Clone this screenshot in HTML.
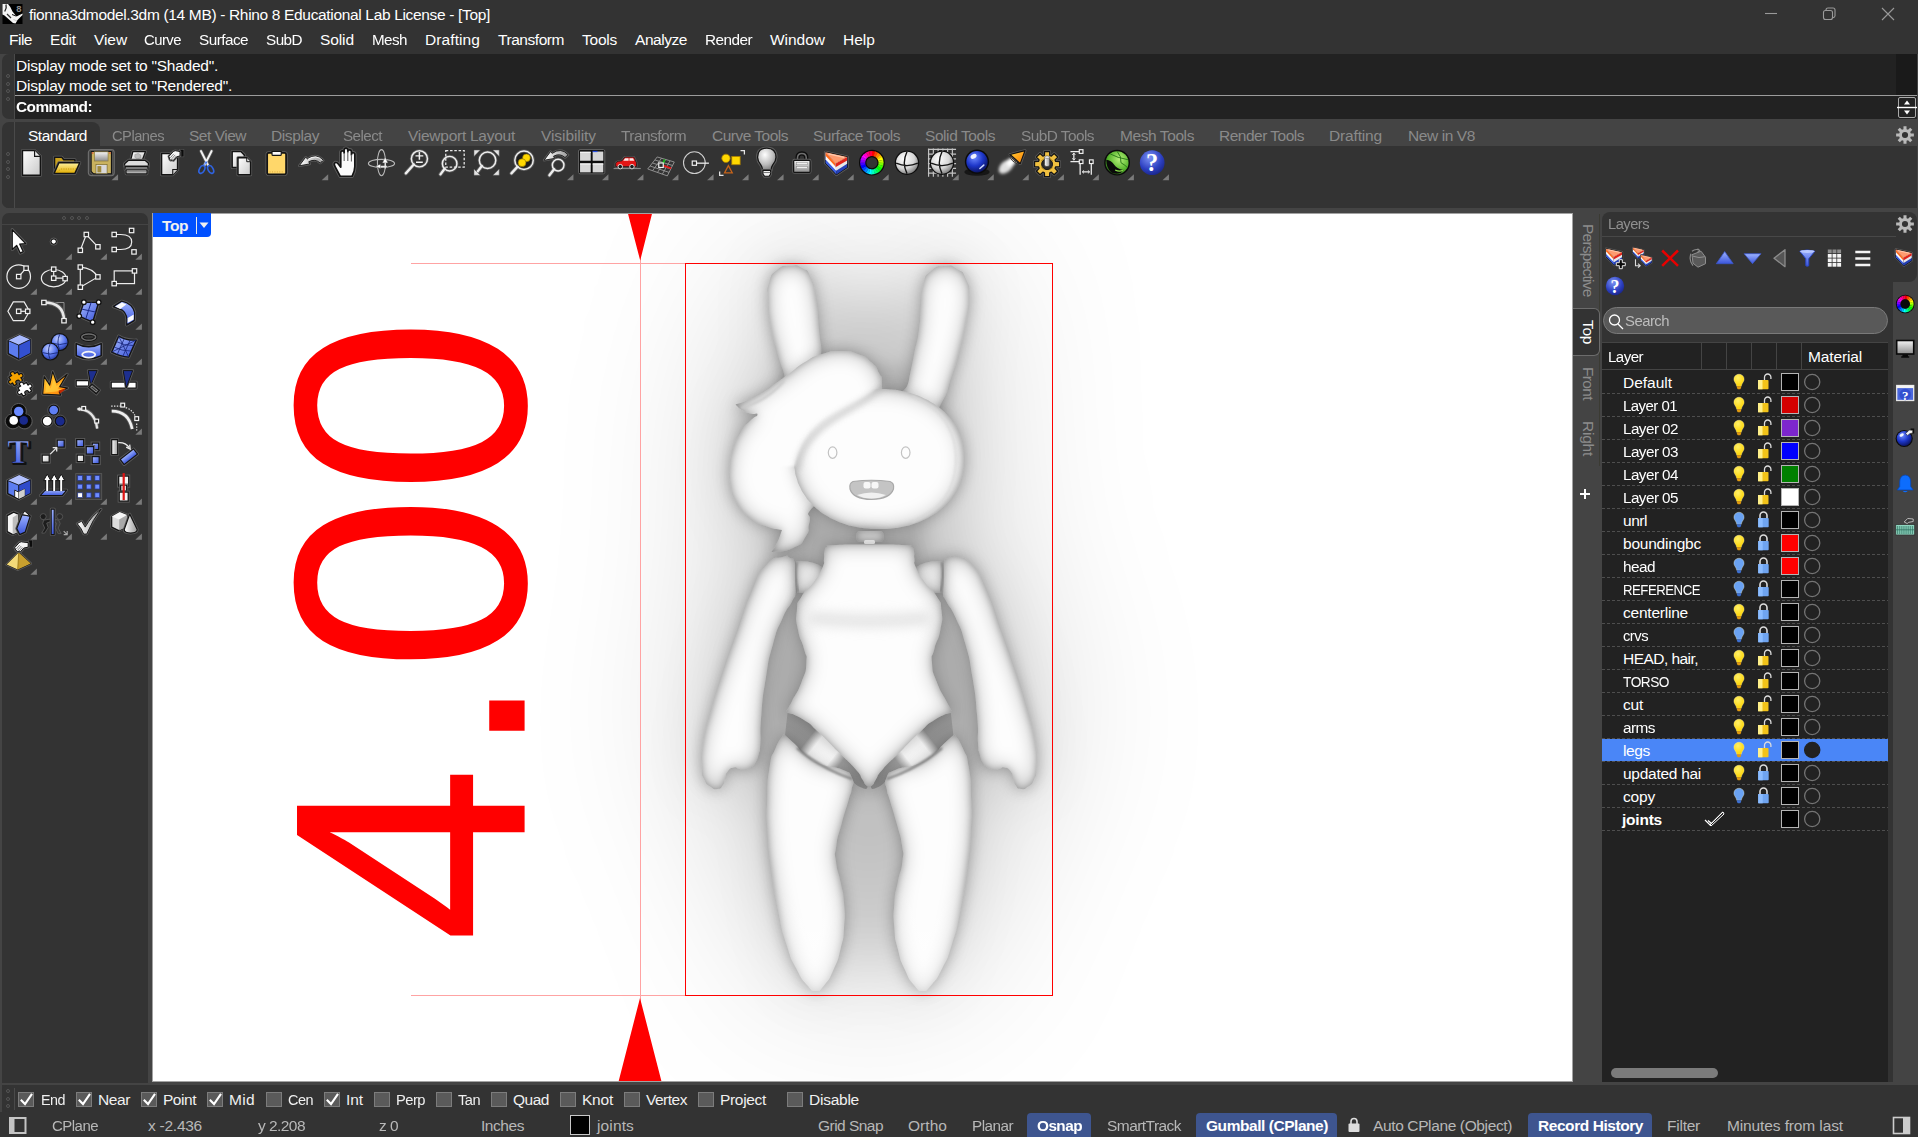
<!DOCTYPE html>
<html lang="en"><head><meta charset="utf-8"><title>Rhino 8 - fionna3dmodel.3dm</title>
<style>
html,body{margin:0;padding:0;}
body{width:1918px;height:1137px;overflow:hidden;background:#444;position:relative;font-family:"Liberation Sans",sans-serif;}
#app{position:absolute;left:0;top:0;width:1918px;height:1137px;overflow:hidden;background:#444;}
#app div,#app span.t,#app svg{position:absolute;}
span.t{white-space:pre;line-height:1;}
</style></head><body><div id="app">
<div style="left:0px;top:0px;width:1918px;height:54px;background:#333;"></div>
<span class="t" style="left:29px;top:7.38px;font-size:15.5px;color:#fff;font-weight:400;letter-spacing:-0.334px;">fionna3dmodel.3dm (14 MB) - Rhino 8 Educational Lab License - [Top]</span>
<svg style="left:1750px;top:0" width="168" height="28" viewBox="0 0 168 28" fill="none" stroke="#9a9a9a" stroke-width="1.1"><path d="M15 13.5H27"/><rect x="73.5" y="10.5" width="9" height="9" rx="2"/><path d="M76 10.5V10a2 2 0 0 1 2-2h5a2 2 0 0 1 2 2v6a2 2 0 0 1-2 1.6"/><path d="M132 8L144 20M144 8L132 20"/></svg>
<span class="t" style="left:9px;top:31.88px;font-size:15.5px;color:#fff;font-weight:400;letter-spacing:-0.496px;">File</span>
<span class="t" style="left:50px;top:31.88px;font-size:15.5px;color:#fff;font-weight:400;letter-spacing:-0.180px;">Edit</span>
<span class="t" style="left:94px;top:31.88px;font-size:15.5px;color:#fff;font-weight:400;letter-spacing:-0.082px;">View</span>
<span class="t" style="left:144px;top:31.88px;font-size:15.5px;color:#fff;font-weight:400;letter-spacing:-0.550px;transform-origin:0 0;transform:scaleX(0.9583);">Curve</span>
<span class="t" style="left:199px;top:31.88px;font-size:15.5px;color:#fff;font-weight:400;letter-spacing:-0.550px;transform-origin:0 0;transform:scaleX(0.9885);">Surface</span>
<span class="t" style="left:266px;top:31.88px;font-size:15.5px;color:#fff;font-weight:400;letter-spacing:-0.550px;transform-origin:0 0;transform:scaleX(0.9841);">SubD</span>
<span class="t" style="left:320px;top:31.88px;font-size:15.5px;color:#fff;font-weight:400;letter-spacing:-0.094px;">Solid</span>
<span class="t" style="left:372px;top:31.88px;font-size:15.5px;color:#fff;font-weight:400;letter-spacing:-0.550px;transform-origin:0 0;transform:scaleX(0.9802);">Mesh</span>
<span class="t" style="left:425px;top:31.88px;font-size:15.5px;color:#fff;font-weight:400;letter-spacing:0.090px;">Drafting</span>
<span class="t" style="left:498px;top:31.88px;font-size:15.5px;color:#fff;font-weight:400;letter-spacing:-0.450px;">Transform</span>
<span class="t" style="left:582px;top:31.88px;font-size:15.5px;color:#fff;font-weight:400;letter-spacing:-0.237px;">Tools</span>
<span class="t" style="left:635px;top:31.88px;font-size:15.5px;color:#fff;font-weight:400;letter-spacing:-0.451px;">Analyze</span>
<span class="t" style="left:705px;top:31.88px;font-size:15.5px;color:#fff;font-weight:400;letter-spacing:-0.550px;transform-origin:0 0;transform:scaleX(0.9886);">Render</span>
<span class="t" style="left:770px;top:31.88px;font-size:15.5px;color:#fff;font-weight:400;letter-spacing:-0.023px;">Window</span>
<span class="t" style="left:843px;top:31.88px;font-size:15.5px;color:#fff;font-weight:400;letter-spacing:0.027px;">Help</span>
<div style="left:2px;top:54px;width:1915px;height:65px;background:#333;border-radius:7px 0 0 7px;"></div>
<div style="left:15px;top:54px;width:1902px;height:65px;background:#222;"></div>
<div style="left:14px;top:54px;width:1px;height:65px;background:#4a4a4a;"></div>
<div style="left:1896px;top:54px;width:21px;height:41px;background:#1a1a1a;"></div>
<div style="left:15px;top:95px;width:1902px;height:1px;background:#9c9c9c;"></div>
<div style="left:6px;top:74.0px;width:2px;height:2px;border:1px solid #555;border-radius:50%"></div>
<div style="left:6px;top:81.5px;width:2px;height:2px;border:1px solid #555;border-radius:50%"></div>
<div style="left:6px;top:89.0px;width:2px;height:2px;border:1px solid #555;border-radius:50%"></div>
<div style="left:6px;top:96.5px;width:2px;height:2px;border:1px solid #555;border-radius:50%"></div>
<span class="t" style="left:16px;top:57.88px;font-size:15.5px;color:#fff;font-weight:400;letter-spacing:-0.248px;">Display mode set to &quot;Shaded&quot;.</span>
<span class="t" style="left:16px;top:77.88px;font-size:15.5px;color:#fff;font-weight:400;letter-spacing:-0.252px;">Display mode set to &quot;Rendered&quot;.</span>
<span class="t" style="left:16px;top:98.88px;font-size:15.5px;color:#fff;font-weight:700;letter-spacing:-0.550px;transform-origin:0 0;transform:scaleX(0.9928);">Command:</span>
<svg style="left:1897px;top:96px" width="20" height="23" viewBox="0 0 20 23"><rect x="1.5" y="1.5" width="17" height="20" rx="1.5" fill="#222" stroke="#aaa" stroke-width="1"/><path d="M0 11.5H20" stroke="#fff" stroke-width="1.4"/><path d="M7 8.5L10 4.5L13 8.5Z M7 14.5L10 18.5L13 14.5Z" fill="#fff"/></svg>
<div style="left:2px;top:122px;width:1915px;height:86px;background:#444;"></div>
<div style="left:2px;top:146px;width:1915px;height:62px;background:#333;border-radius:0 0 0 7px;"></div>
<div style="left:2px;top:122px;width:13px;height:86px;background:#333;border-radius:7px 0 0 7px;"></div>
<div style="left:14px;top:122px;width:1px;height:86px;background:#4a4a4a;"></div>
<div style="left:15px;top:122px;width:85px;height:26px;background:#333;border-radius:0 8px 0 0;"></div>
<div style="left:6px;top:152.0px;width:2px;height:2px;border:1px solid #555;border-radius:50%"></div>
<div style="left:6px;top:159.5px;width:2px;height:2px;border:1px solid #555;border-radius:50%"></div>
<div style="left:6px;top:167.0px;width:2px;height:2px;border:1px solid #555;border-radius:50%"></div>
<div style="left:6px;top:174.5px;width:2px;height:2px;border:1px solid #555;border-radius:50%"></div>
<span class="t" style="left:28px;top:127.88px;font-size:15.5px;color:#fff;font-weight:400;letter-spacing:-0.490px;">Standard</span>
<span class="t" style="left:112px;top:127.88px;font-size:15.5px;color:#8a8a8a;font-weight:400;letter-spacing:-0.550px;transform-origin:0 0;transform:scaleX(0.9499);">CPlanes</span>
<span class="t" style="left:189px;top:127.88px;font-size:15.5px;color:#8a8a8a;font-weight:400;letter-spacing:-0.486px;">Set View</span>
<span class="t" style="left:271px;top:127.88px;font-size:15.5px;color:#8a8a8a;font-weight:400;letter-spacing:-0.404px;">Display</span>
<span class="t" style="left:343px;top:127.88px;font-size:15.5px;color:#8a8a8a;font-weight:400;letter-spacing:-0.550px;transform-origin:0 0;transform:scaleX(0.9801);">Select</span>
<span class="t" style="left:408px;top:127.88px;font-size:15.5px;color:#8a8a8a;font-weight:400;letter-spacing:-0.258px;">Viewport Layout</span>
<span class="t" style="left:541px;top:127.88px;font-size:15.5px;color:#8a8a8a;font-weight:400;letter-spacing:-0.070px;">Visibility</span>
<span class="t" style="left:621px;top:127.88px;font-size:15.5px;color:#8a8a8a;font-weight:400;letter-spacing:-0.550px;transform-origin:0 0;transform:scaleX(0.9985);">Transform</span>
<span class="t" style="left:712px;top:127.88px;font-size:15.5px;color:#8a8a8a;font-weight:400;letter-spacing:-0.506px;">Curve Tools</span>
<span class="t" style="left:813px;top:127.88px;font-size:15.5px;color:#8a8a8a;font-weight:400;letter-spacing:-0.511px;">Surface Tools</span>
<span class="t" style="left:925px;top:127.88px;font-size:15.5px;color:#8a8a8a;font-weight:400;letter-spacing:-0.426px;">Solid Tools</span>
<span class="t" style="left:1021px;top:127.88px;font-size:15.5px;color:#8a8a8a;font-weight:400;letter-spacing:-0.550px;transform-origin:0 0;transform:scaleX(0.9934);">SubD Tools</span>
<span class="t" style="left:1120px;top:127.88px;font-size:15.5px;color:#8a8a8a;font-weight:400;letter-spacing:-0.412px;">Mesh Tools</span>
<span class="t" style="left:1219px;top:127.88px;font-size:15.5px;color:#8a8a8a;font-weight:400;letter-spacing:-0.505px;">Render Tools</span>
<span class="t" style="left:1329px;top:127.88px;font-size:15.5px;color:#8a8a8a;font-weight:400;letter-spacing:-0.160px;">Drafting</span>
<span class="t" style="left:1408px;top:127.88px;font-size:15.5px;color:#8a8a8a;font-weight:400;letter-spacing:-0.406px;">New in V8</span>
<div style="left:2px;top:213px;width:146px;height:870px;background:#333;border-radius:7px 7px 0 0;"></div>
<div style="left:2px;top:224px;width:146px;height:1px;background:#444;"></div>
<div style="left:62.0px;top:216px;width:2px;height:2px;border:1px solid #555;border-radius:50%"></div>
<div style="left:69.5px;top:216px;width:2px;height:2px;border:1px solid #555;border-radius:50%"></div>
<div style="left:77.0px;top:216px;width:2px;height:2px;border:1px solid #555;border-radius:50%"></div>
<div style="left:84.5px;top:216px;width:2px;height:2px;border:1px solid #555;border-radius:50%"></div>
<div style="left:152px;top:213px;width:1421px;height:869px;background:#a2a2a2;"></div>
<svg style="left:153px;top:214px;background:#fff" width="1419" height="867" viewBox="153 214 1419 867"><defs>
<filter id="gnd" x="330" y="0" width="1100" height="1300" filterUnits="userSpaceOnUse" color-interpolation-filters="sRGB">
 <feMorphology in="SourceAlpha" operator="dilate" radius="18" result="d"/>
 <feMorphology in="d" operator="erode" radius="18" result="e"/>
 <feGaussianBlur in="e" stdDeviation="9" result="c"/>
 <feColorMatrix in="c" type="matrix" values="0 0 0 0 0 0 0 0 0 0 0 0 0 0 0 0 0 0 .12 0"/>
</filter>
<filter id="env" x="230" y="0" width="1300" height="1300" filterUnits="userSpaceOnUse" color-interpolation-filters="sRGB">
 <feGaussianBlur in="SourceAlpha" stdDeviation="85" result="a"/>
 <feColorMatrix in="a" type="matrix" values="0 0 0 0 0 0 0 0 0 0 0 0 0 0 0 0 0 0 .20 0" result="a1"/>
 <feGaussianBlur in="SourceAlpha" stdDeviation="28" result="b"/>
 <feColorMatrix in="b" type="matrix" values="0 0 0 0 0 0 0 0 0 0 0 0 0 0 0 0 0 0 .10 0" result="b1"/>
 <feMerge><feMergeNode in="a1"/><feMergeNode in="b1"/></feMerge>
</filter>
<filter id="part" x="600" y="200" width="540" height="860" filterUnits="userSpaceOnUse" color-interpolation-filters="sRGB">
 <feGaussianBlur in="SourceAlpha" stdDeviation="7" result="o"/>
 <feColorMatrix in="o" type="matrix" values="0 0 0 0 0 0 0 0 0 0 0 0 0 0 0 0 0 0 .22 0" result="osh"/>
 <feComponentTransfer in="SourceAlpha" result="inv"><feFuncA type="table" tableValues="1 0"/></feComponentTransfer>
 <feGaussianBlur in="inv" stdDeviation="10" result="invb"/>
 <feComposite in="invb" in2="SourceAlpha" operator="in" result="inn"/>
 <feColorMatrix in="inn" type="matrix" values="0 0 0 0 0 0 0 0 0 0 0 0 0 0 0 0 0 0 .30 0" result="innc"/>
 <feGaussianBlur in="inv" stdDeviation="3.5" result="invs"/>
 <feComposite in="invs" in2="SourceAlpha" operator="in" result="inn2"/>
 <feColorMatrix in="inn2" type="matrix" values="0 0 0 0 0 0 0 0 0 0 0 0 0 0 0 0 0 0 .25 0" result="innc2"/>
 <feMerge><feMergeNode in="osh"/><feMergeNode in="SourceGraphic"/><feMergeNode in="innc"/><feMergeNode in="innc2"/></feMerge>
</filter>
<filter id="soft" color-interpolation-filters="sRGB"><feGaussianBlur stdDeviation="1.2"/></filter>
<filter id="soft6" x="780" y="570" width="180" height="100" filterUnits="userSpaceOnUse" color-interpolation-filters="sRGB"><feGaussianBlur stdDeviation="6"/></filter><filter id="soft3" color-interpolation-filters="sRGB"><feGaussianBlur stdDeviation="3"/></filter>
<linearGradient id="hipL" x1="786" y1="720" x2="862" y2="780" gradientUnits="userSpaceOnUse"><stop offset="0" stop-color="#959595"/><stop offset=".30" stop-color="#8e8e8e"/><stop offset=".40" stop-color="#f0f0f0"/><stop offset=".62" stop-color="#fbfbfb"/><stop offset=".72" stop-color="#a2a2a2"/><stop offset="1" stop-color="#8a8a8a"/></linearGradient>
<linearGradient id="hipR" x1="953" y1="720" x2="877" y2="780" gradientUnits="userSpaceOnUse"><stop offset="0" stop-color="#959595"/><stop offset=".30" stop-color="#8e8e8e"/><stop offset=".40" stop-color="#f0f0f0"/><stop offset=".62" stop-color="#fbfbfb"/><stop offset=".72" stop-color="#a2a2a2"/><stop offset="1" stop-color="#8a8a8a"/></linearGradient>
<mask id="hm" maskUnits="userSpaceOnUse" x="600" y="200" width="540" height="500"><rect x="600" y="200" width="540" height="500" fill="#fff"/><path d="M884 380C880 388 868 396 860 400C846 408 835 413 825 419C817 425 810 432 806 439C801 447 798 455 795 466L700 470V300H900Z" fill="#000" filter="url(#soft)"/></mask>
<linearGradient id="footfade" x1="0" y1="890" x2="0" y2="992" gradientUnits="userSpaceOnUse"><stop offset="0" stop-color="#fff" stop-opacity="0"/><stop offset="1" stop-color="#fff" stop-opacity=".6"/></linearGradient>
</defs><path d="M768.0 285.0C768.0 261.0 764.7 275.3 772.0 268.0C779.3 260.7 777.3 263.0 790.0 263.0C802.7 263.0 800.7 259.0 810.0 268.0C819.3 277.0 798.3 279.3 818.0 290.0C837.7 300.7 834.7 300.0 869.0 300.0C903.3 300.0 901.3 300.0 921.0 290.0C940.7 280.0 920.0 279.0 928.0 270.0C936.0 261.0 933.3 263.7 945.0 263.0C956.7 262.3 954.7 259.0 963.0 268.0C971.3 277.0 968.3 269.3 970.0 290.0C971.7 310.7 970.7 300.0 968.0 330.0C965.3 360.0 963.0 343.3 962.0 380.0C961.0 416.7 965.0 400.0 965.0 440.0C965.0 480.0 967.0 466.7 962.0 500.0C957.0 533.3 945.7 518.3 950.0 540.0C954.3 561.7 958.3 541.7 975.0 565.0C991.7 588.3 985.0 575.0 1000.0 610.0C1015.0 645.0 1008.7 630.0 1020.0 670.0C1031.3 710.0 1028.3 696.7 1034.0 730.0C1039.7 763.3 1040.0 750.0 1037.0 770.0C1034.0 790.0 1037.3 786.7 1025.0 790.0C1012.7 793.3 1016.7 776.7 1000.0 780.0C983.3 783.3 985.7 773.3 975.0 800.0C964.3 826.7 974.7 816.7 968.0 860.0C961.3 903.3 966.0 890.0 955.0 930.0C944.0 970.0 945.7 959.3 935.0 980.0C924.3 1000.7 932.7 992.0 923.0 992.0C913.3 992.0 916.0 990.0 906.0 980.0C896.0 970.0 905.3 970.3 893.0 962.0C880.7 953.7 885.0 955.0 869.0 955.0C853.0 955.0 857.3 953.7 845.0 962.0C832.7 970.3 841.7 970.0 832.0 980.0C822.3 990.0 826.7 992.7 816.0 992.0C805.3 991.3 811.3 998.7 800.0 978.0C788.7 957.3 792.0 969.3 782.0 930.0C772.0 890.7 775.7 903.3 770.0 860.0C764.3 816.7 775.0 826.7 765.0 800.0C755.0 773.3 756.7 783.3 740.0 780.0C723.3 776.7 727.7 793.3 715.0 790.0C702.3 786.7 705.3 791.7 702.0 770.0C698.7 748.3 699.0 758.3 705.0 725.0C711.0 691.7 708.3 708.3 720.0 670.0C731.7 631.7 725.0 645.0 740.0 610.0C755.0 575.0 751.7 583.3 765.0 565.0C778.3 546.7 781.7 563.3 780.0 555.0C778.3 546.7 775.0 558.3 760.0 540.0C745.0 521.7 745.3 523.3 735.0 500.0C724.7 476.7 729.0 493.3 729.0 470.0C729.0 446.7 732.7 452.0 735.0 430.0C737.3 408.0 726.0 417.3 736.0 404.0C746.0 390.7 753.0 411.3 765.0 390.0C777.0 368.7 771.0 375.0 772.0 340.0C773.0 305.0 768.0 309.0 768.0 285.0Z" fill="#000" filter="url(#env)"/><path d="M790.0 266.0C781.7 266.7 784.0 264.3 777.0 270.0C770.0 275.7 772.0 273.0 769.0 283.0C766.0 293.0 767.7 287.0 768.0 300.0C768.3 313.0 767.3 306.3 770.0 322.0C772.7 337.7 771.7 331.0 776.0 347.0C780.3 363.0 778.3 356.3 783.0 370.0C787.7 383.7 779.0 382.0 790.0 388.0C801.0 394.0 805.7 397.3 816.0 388.0C826.3 378.7 820.0 379.3 821.0 360.0C822.0 340.7 820.7 350.0 819.0 330.0C817.3 310.0 818.7 317.3 816.0 300.0C813.3 282.7 815.7 288.7 811.0 278.0C806.3 267.3 809.0 272.0 802.0 268.0C795.0 264.0 798.3 265.3 790.0 266.0Z M945.0 266.0C936.3 266.7 938.3 264.7 931.0 271.0C923.7 277.3 926.3 273.7 923.0 285.0C919.7 296.3 922.3 290.0 921.0 305.0C919.7 320.0 921.3 313.3 919.0 330.0C916.7 346.7 917.3 338.3 914.0 355.0C910.7 371.7 912.0 365.0 909.0 380.0C906.0 395.0 899.7 385.0 905.0 400.0C910.3 415.0 912.7 424.3 925.0 425.0C937.3 425.7 933.3 417.7 942.0 402.0C950.7 386.3 945.3 394.7 951.0 378.0C956.7 361.3 954.0 370.7 959.0 352.0C964.0 333.3 962.5 340.0 966.0 322.0C969.5 304.0 969.5 312.3 969.5 298.0C969.5 283.7 970.2 288.7 966.0 279.0C961.8 269.3 964.0 273.3 957.0 269.0C950.0 264.7 953.7 265.3 945.0 266.0Z M735.5 404.5C739.6 403.0 738.8 404.0 748.0 400.0C757.2 396.0 753.3 398.3 763.0 392.5C772.7 386.7 768.0 389.0 777.0 382.5C786.0 376.0 780.7 379.8 790.0 373.0C799.3 366.2 794.3 368.3 805.0 362.0C815.7 355.7 810.0 357.7 822.0 354.0C834.0 350.3 829.0 351.0 841.0 351.0C853.0 351.0 848.0 350.3 858.0 354.0C868.0 357.7 864.0 355.7 871.0 362.0C878.0 368.3 875.3 365.0 879.0 373.0C882.7 381.0 881.7 370.3 882.0 386.0C882.3 401.7 890.7 388.7 880.0 420.0C869.3 451.3 871.7 451.7 850.0 480.0C828.3 508.3 828.5 491.0 815.0 505.0C801.5 519.0 812.5 511.7 809.5 522.0C806.5 532.3 811.5 527.3 806.0 536.0C800.5 544.7 804.5 542.7 793.0 548.0C781.5 553.3 778.6 550.7 771.5 552.0C773.3 549.0 773.5 550.3 777.0 543.0C780.5 535.7 780.4 534.3 782.0 530.0C777.0 528.8 777.3 530.3 767.0 526.5C756.7 522.7 761.0 526.3 751.0 518.5C741.0 510.7 743.8 514.2 737.0 503.0C730.2 491.8 732.9 496.7 730.5 485.0C728.1 473.3 729.0 479.7 729.8 468.0C730.6 456.3 729.3 462.0 733.0 450.0C736.7 438.0 735.3 441.7 741.0 432.0C746.7 422.3 744.5 426.8 750.0 421.0C755.5 415.2 757.5 417.0 757.5 414.5C757.5 412.0 755.2 415.0 750.0 413.5C744.8 412.0 746.8 413.0 742.0 410.0C737.2 407.0 737.6 406.3 735.5 404.5Z M964.0 459.0C964.0 465.8 964.2 462.7 963.3 469.3C962.4 475.8 963.1 472.5 961.3 478.6C959.5 484.6 960.6 481.7 957.9 487.3C955.2 492.9 956.7 490.2 953.2 495.4C949.7 500.6 951.6 498.1 947.3 502.8C943.0 507.5 945.3 505.3 940.3 509.5C935.3 513.6 937.9 511.7 932.2 515.3C926.5 518.8 929.5 517.2 923.2 520.1C916.9 523.0 920.2 521.8 913.3 524.0C906.5 526.2 910.0 525.3 902.7 526.7C895.5 528.2 899.4 527.7 891.5 528.4C883.5 529.2 887.3 529.0 879.0 529.0C870.7 529.0 874.5 529.2 866.5 528.4C858.6 527.7 862.5 528.2 855.3 526.7C848.0 525.3 851.5 526.2 844.7 524.0C837.8 521.8 841.1 523.0 834.8 520.1C828.5 517.2 831.5 518.8 825.8 515.3C820.1 511.7 822.7 513.6 817.7 509.5C812.7 505.3 815.0 507.5 810.7 502.8C806.4 498.1 808.3 500.6 804.8 495.4C801.3 490.2 802.8 492.9 800.1 487.3C797.4 481.7 798.5 484.6 796.7 478.6C794.9 472.5 795.6 475.8 794.7 469.3C793.8 462.7 794.0 465.8 794.0 459.0C794.0 452.2 793.8 455.3 794.7 448.7C795.6 442.2 794.9 445.5 796.7 439.4C798.5 433.4 797.4 436.3 800.1 430.7C802.8 425.1 801.3 427.8 804.8 422.6C808.3 417.4 806.4 419.9 810.7 415.2C815.0 410.5 812.7 412.7 817.7 408.5C822.7 404.4 820.1 406.3 825.8 402.7C831.5 399.2 828.5 400.8 834.8 397.9C841.1 395.0 837.8 396.2 844.7 394.0C851.5 391.8 848.0 392.7 855.3 391.3C862.5 389.8 858.6 390.3 866.5 389.6C874.5 388.8 870.7 389.0 879.0 389.0C887.3 389.0 883.5 388.8 891.5 389.6C899.4 390.3 895.5 389.8 902.7 391.3C910.0 392.7 906.5 391.8 913.3 394.0C920.2 396.2 916.9 395.0 923.2 397.9C929.5 400.8 926.5 399.2 932.2 402.7C937.9 406.3 935.3 404.4 940.3 408.5C945.3 412.7 943.0 410.5 947.3 415.2C951.6 419.9 949.7 417.4 953.2 422.6C956.7 427.8 955.2 425.1 957.9 430.7C960.6 436.3 959.5 433.4 961.3 439.4C963.1 445.5 962.4 442.2 963.3 448.7C964.2 455.3 964.0 452.2 964.0 459.0Z M869.2 544.5C893.3 544.5 891.3 544.4 905.4 545.2C919.5 546.0 908.6 544.7 911.4 546.8C914.2 548.9 912.9 547.4 913.9 551.5C914.9 555.6 913.7 553.7 914.4 559.0C915.1 564.3 912.7 560.2 915.9 567.5C919.1 574.8 916.9 571.3 923.9 581.0C930.9 590.7 930.9 586.6 936.8 596.5C942.7 606.4 940.3 599.7 941.5 610.8C942.7 621.9 942.8 617.1 940.4 629.8C938.0 642.5 937.2 637.7 934.4 648.8C931.6 659.9 931.2 651.9 932.0 663.0C932.8 674.1 932.0 669.3 936.8 682.0C941.6 694.7 941.2 691.1 946.3 701.0C951.4 710.9 950.3 708.2 952.2 711.7C946.3 714.4 945.1 713.2 934.4 720.0C923.7 726.8 931.2 721.7 920.1 732.0C909.0 742.3 913.3 738.8 901.1 751.0C888.9 763.2 891.8 759.0 883.4 768.5C875.0 778.0 879.4 774.2 875.9 779.5C872.4 784.8 875.2 782.3 873.0 784.5C870.8 786.7 871.7 786.0 869.2 786.0C866.7 786.0 867.6 786.7 865.4 784.5C863.2 782.3 866.0 784.8 862.5 779.5C859.0 774.2 863.4 778.0 855.0 768.5C846.6 759.0 849.5 763.2 837.3 751.0C825.1 738.8 829.4 742.3 818.3 732.0C807.2 721.7 814.7 726.8 804.0 720.0C793.3 713.2 792.1 714.4 786.2 711.7C788.1 708.2 787.0 710.9 792.1 701.0C797.2 691.1 796.8 694.7 801.6 682.0C806.4 669.3 805.6 674.1 806.4 663.0C807.2 651.9 806.8 659.9 804.0 648.8C801.2 637.7 800.4 642.5 798.0 629.8C795.6 617.1 795.7 621.9 796.9 610.8C798.1 599.7 795.7 606.4 801.6 596.5C807.5 586.6 807.5 590.7 814.5 581.0C821.5 571.3 819.3 574.8 822.5 567.5C825.7 560.2 823.3 564.3 824.0 559.0C824.7 553.7 823.5 555.6 824.5 551.5C825.5 547.4 824.2 548.9 827.0 546.8C829.8 544.7 818.9 546.0 833.0 545.2C847.1 544.4 845.1 544.5 869.2 544.5Z M782.5 557.0C790.5 554.5 786.0 556.3 790.0 558.0C794.0 559.7 792.5 556.0 794.5 562.0C796.5 568.0 795.6 566.0 796.0 576.0C796.4 586.0 797.0 583.5 795.7 592.0C794.4 600.5 796.4 592.8 792.0 601.5C787.6 610.2 788.9 603.8 782.6 618.0C776.3 632.2 778.5 624.3 773.0 644.0C767.5 663.7 769.9 653.3 766.0 677.0C762.1 700.7 763.2 692.7 761.3 715.0C759.4 737.3 761.1 731.0 760.3 743.8C759.5 756.6 760.6 747.0 758.9 753.3C757.2 759.6 758.1 758.1 755.3 762.8C752.5 767.5 754.2 765.1 750.6 767.5C747.0 769.9 748.6 769.6 744.6 770.0C740.6 770.4 742.2 769.5 738.7 768.7C735.2 767.9 737.6 766.7 734.0 767.5C730.4 768.3 731.0 767.4 728.0 771.0C725.0 774.6 726.6 773.4 724.9 778.2C723.2 783.0 725.3 781.7 722.8 785.3C720.3 788.9 721.5 788.6 717.3 789.0C713.1 789.4 714.5 789.7 710.2 786.5C705.9 783.3 707.1 785.7 704.3 779.4C701.5 773.1 702.3 779.3 701.9 767.5C701.5 755.7 699.8 763.0 703.0 744.0C706.2 725.0 704.6 734.3 711.4 710.5C718.2 686.7 714.6 698.7 723.3 672.5C732.0 646.3 728.0 658.8 737.5 632.0C747.0 605.2 742.3 614.1 751.8 592.0C761.3 569.9 755.8 577.3 766.0 565.6C776.2 553.9 774.5 559.5 782.5 557.0Z M972.4 565.6C982.6 577.3 977.1 569.9 986.6 592.0C996.1 614.1 991.4 605.2 1000.9 632.0C1010.4 658.8 1006.4 646.3 1015.1 672.5C1023.8 698.7 1020.2 686.7 1027.0 710.5C1033.8 734.3 1032.2 725.0 1035.4 744.0C1038.6 763.0 1036.9 755.7 1036.5 767.5C1036.1 779.3 1036.9 773.1 1034.1 779.4C1031.3 785.7 1032.5 783.3 1028.2 786.5C1023.9 789.7 1025.3 789.4 1021.1 789.0C1016.9 788.6 1018.1 788.9 1015.6 785.3C1013.1 781.7 1015.2 783.0 1013.5 778.2C1011.8 773.4 1013.4 774.6 1010.4 771.0C1007.4 767.4 1008.0 768.3 1004.4 767.5C1000.8 766.7 1003.2 767.9 999.7 768.7C996.2 769.5 997.8 770.4 993.8 770.0C989.8 769.6 991.4 769.9 987.8 767.5C984.2 765.1 985.9 767.5 983.1 762.8C980.3 758.1 981.2 759.6 979.5 753.3C977.8 747.0 978.9 756.6 978.1 743.8C977.3 731.0 979.0 737.3 977.1 715.0C975.2 692.7 976.3 700.7 972.4 677.0C968.5 653.3 970.9 663.7 965.4 644.0C959.9 624.3 962.1 632.2 955.8 618.0C949.5 603.8 950.8 610.2 946.4 601.5C942.0 592.8 944.0 600.5 942.7 592.0C941.4 583.5 942.0 586.0 942.4 576.0C942.8 566.0 941.9 568.0 943.9 562.0C945.9 556.0 944.4 559.7 948.4 558.0C952.4 556.3 947.9 554.5 955.9 557.0C963.9 559.5 962.2 553.9 972.4 565.6Z M783.8 734.3C787.3 737.4 787.0 736.7 794.5 743.8C802.0 750.9 796.9 748.5 806.4 755.6C815.9 762.7 811.1 760.4 823.0 765.0C834.9 769.6 832.3 765.2 842.0 769.5C851.7 773.8 848.8 771.2 852.0 778.0C855.2 784.8 852.6 782.7 851.5 790.0C850.4 797.3 851.8 789.0 848.6 800.0C845.4 811.0 845.9 807.8 841.8 823.0C837.7 838.2 838.2 832.8 836.3 845.7C834.4 858.6 834.6 849.6 836.0 861.8C837.4 874.0 837.9 868.6 840.6 882.3C843.3 896.0 842.9 887.8 844.0 903.0C845.1 918.2 845.1 912.8 844.0 928.0C842.9 943.2 844.0 934.9 840.6 948.7C837.2 962.5 839.1 957.2 833.7 969.3C828.3 981.4 830.5 977.8 824.5 985.0C818.5 992.2 821.5 991.0 815.7 991.0C809.9 991.0 813.6 992.7 807.0 985.0C800.4 977.3 802.8 981.3 796.0 968.0C789.2 954.7 792.7 964.3 786.7 945.0C780.7 925.7 783.2 936.0 778.0 910.0C772.8 884.0 774.5 893.7 771.0 867.0C767.5 840.3 768.8 852.3 767.5 830.0C766.2 807.7 766.5 820.8 767.2 800.0C767.9 779.2 766.8 784.7 769.6 767.5C772.4 750.3 770.8 759.6 775.5 748.5C780.2 737.4 781.1 739.0 783.8 734.3Z M962.9 748.5C967.6 759.6 966.0 750.3 968.8 767.5C971.6 784.7 970.5 779.2 971.2 800.0C971.9 820.8 972.2 807.7 970.9 830.0C969.6 852.3 970.9 840.3 967.4 867.0C963.9 893.7 965.6 884.0 960.4 910.0C955.2 936.0 957.7 925.7 951.7 945.0C945.7 964.3 949.2 954.7 942.4 968.0C935.6 981.3 938.0 977.3 931.4 985.0C924.8 992.7 928.5 991.0 922.7 991.0C916.9 991.0 919.9 992.2 913.9 985.0C907.9 977.8 910.1 981.4 904.7 969.3C899.3 957.2 901.2 962.5 897.8 948.7C894.4 934.9 895.5 943.2 894.4 928.0C893.3 912.8 893.3 918.2 894.4 903.0C895.5 887.8 895.1 896.0 897.8 882.3C900.5 868.6 901.0 874.0 902.4 861.8C903.8 849.6 904.0 858.6 902.1 845.7C900.2 832.8 900.7 838.2 896.6 823.0C892.5 807.8 893.0 811.0 889.8 800.0C886.6 789.0 888.0 797.3 886.9 790.0C885.8 782.7 883.2 784.8 886.4 778.0C889.6 771.2 886.7 773.8 896.4 769.5C906.1 765.2 903.5 769.6 915.4 765.0C927.3 760.4 922.5 762.7 932.0 755.6C941.5 748.5 936.4 750.9 943.9 743.8C951.4 736.7 951.1 737.4 954.6 734.3C957.3 739.0 958.2 737.4 962.9 748.5Z" fill="#000" filter="url(#gnd)"/><path d="M790.0 266.0C781.7 266.7 784.0 264.3 777.0 270.0C770.0 275.7 772.0 273.0 769.0 283.0C766.0 293.0 767.7 287.0 768.0 300.0C768.3 313.0 767.3 306.3 770.0 322.0C772.7 337.7 771.7 331.0 776.0 347.0C780.3 363.0 778.3 356.3 783.0 370.0C787.7 383.7 779.0 382.0 790.0 388.0C801.0 394.0 805.7 397.3 816.0 388.0C826.3 378.7 820.0 379.3 821.0 360.0C822.0 340.7 820.7 350.0 819.0 330.0C817.3 310.0 818.7 317.3 816.0 300.0C813.3 282.7 815.7 288.7 811.0 278.0C806.3 267.3 809.0 272.0 802.0 268.0C795.0 264.0 798.3 265.3 790.0 266.0Z" fill="#fdfdfd" filter="url(#part)" /><path d="M945.0 266.0C936.3 266.7 938.3 264.7 931.0 271.0C923.7 277.3 926.3 273.7 923.0 285.0C919.7 296.3 922.3 290.0 921.0 305.0C919.7 320.0 921.3 313.3 919.0 330.0C916.7 346.7 917.3 338.3 914.0 355.0C910.7 371.7 912.0 365.0 909.0 380.0C906.0 395.0 899.7 385.0 905.0 400.0C910.3 415.0 912.7 424.3 925.0 425.0C937.3 425.7 933.3 417.7 942.0 402.0C950.7 386.3 945.3 394.7 951.0 378.0C956.7 361.3 954.0 370.7 959.0 352.0C964.0 333.3 962.5 340.0 966.0 322.0C969.5 304.0 969.5 312.3 969.5 298.0C969.5 283.7 970.2 288.7 966.0 279.0C961.8 269.3 964.0 273.3 957.0 269.0C950.0 264.7 953.7 265.3 945.0 266.0Z" fill="#fdfdfd" filter="url(#part)" /><path d="M735.5 404.5C739.6 403.0 738.8 404.0 748.0 400.0C757.2 396.0 753.3 398.3 763.0 392.5C772.7 386.7 768.0 389.0 777.0 382.5C786.0 376.0 780.7 379.8 790.0 373.0C799.3 366.2 794.3 368.3 805.0 362.0C815.7 355.7 810.0 357.7 822.0 354.0C834.0 350.3 829.0 351.0 841.0 351.0C853.0 351.0 848.0 350.3 858.0 354.0C868.0 357.7 864.0 355.7 871.0 362.0C878.0 368.3 875.3 365.0 879.0 373.0C882.7 381.0 881.7 370.3 882.0 386.0C882.3 401.7 890.7 388.7 880.0 420.0C869.3 451.3 871.7 451.7 850.0 480.0C828.3 508.3 828.5 491.0 815.0 505.0C801.5 519.0 812.5 511.7 809.5 522.0C806.5 532.3 811.5 527.3 806.0 536.0C800.5 544.7 804.5 542.7 793.0 548.0C781.5 553.3 778.6 550.7 771.5 552.0C773.3 549.0 773.5 550.3 777.0 543.0C780.5 535.7 780.4 534.3 782.0 530.0C777.0 528.8 777.3 530.3 767.0 526.5C756.7 522.7 761.0 526.3 751.0 518.5C741.0 510.7 743.8 514.2 737.0 503.0C730.2 491.8 732.9 496.7 730.5 485.0C728.1 473.3 729.0 479.7 729.8 468.0C730.6 456.3 729.3 462.0 733.0 450.0C736.7 438.0 735.3 441.7 741.0 432.0C746.7 422.3 744.5 426.8 750.0 421.0C755.5 415.2 757.5 417.0 757.5 414.5C757.5 412.0 755.2 415.0 750.0 413.5C744.8 412.0 746.8 413.0 742.0 410.0C737.2 407.0 737.6 406.3 735.5 404.5Z" fill="#fdfdfd" filter="url(#part)" /><path d="M741 408C756 404 770 397 784 381" fill="none" stroke="#c9c9c9" stroke-width="2.2" filter="url(#soft)"/><g mask="url(#hm)"><path d="M964.0 459.0C964.0 465.8 964.2 462.7 963.3 469.3C962.4 475.8 963.1 472.5 961.3 478.6C959.5 484.6 960.6 481.7 957.9 487.3C955.2 492.9 956.7 490.2 953.2 495.4C949.7 500.6 951.6 498.1 947.3 502.8C943.0 507.5 945.3 505.3 940.3 509.5C935.3 513.6 937.9 511.7 932.2 515.3C926.5 518.8 929.5 517.2 923.2 520.1C916.9 523.0 920.2 521.8 913.3 524.0C906.5 526.2 910.0 525.3 902.7 526.7C895.5 528.2 899.4 527.7 891.5 528.4C883.5 529.2 887.3 529.0 879.0 529.0C870.7 529.0 874.5 529.2 866.5 528.4C858.6 527.7 862.5 528.2 855.3 526.7C848.0 525.3 851.5 526.2 844.7 524.0C837.8 521.8 841.1 523.0 834.8 520.1C828.5 517.2 831.5 518.8 825.8 515.3C820.1 511.7 822.7 513.6 817.7 509.5C812.7 505.3 815.0 507.5 810.7 502.8C806.4 498.1 808.3 500.6 804.8 495.4C801.3 490.2 802.8 492.9 800.1 487.3C797.4 481.7 798.5 484.6 796.7 478.6C794.9 472.5 795.6 475.8 794.7 469.3C793.8 462.7 794.0 465.8 794.0 459.0C794.0 452.2 793.8 455.3 794.7 448.7C795.6 442.2 794.9 445.5 796.7 439.4C798.5 433.4 797.4 436.3 800.1 430.7C802.8 425.1 801.3 427.8 804.8 422.6C808.3 417.4 806.4 419.9 810.7 415.2C815.0 410.5 812.7 412.7 817.7 408.5C822.7 404.4 820.1 406.3 825.8 402.7C831.5 399.2 828.5 400.8 834.8 397.9C841.1 395.0 837.8 396.2 844.7 394.0C851.5 391.8 848.0 392.7 855.3 391.3C862.5 389.8 858.6 390.3 866.5 389.6C874.5 388.8 870.7 389.0 879.0 389.0C887.3 389.0 883.5 388.8 891.5 389.6C899.4 390.3 895.5 389.8 902.7 391.3C910.0 392.7 906.5 391.8 913.3 394.0C920.2 396.2 916.9 395.0 923.2 397.9C929.5 400.8 926.5 399.2 932.2 402.7C937.9 406.3 935.3 404.4 940.3 408.5C945.3 412.7 943.0 410.5 947.3 415.2C951.6 419.9 949.7 417.4 953.2 422.6C956.7 427.8 955.2 425.1 957.9 430.7C960.6 436.3 959.5 433.4 961.3 439.4C963.1 445.5 962.4 442.2 963.3 448.7C964.2 455.3 964.0 452.2 964.0 459.0Z" fill="#fdfdfd" filter="url(#part)"/></g><path d="M884 384C876 394 862 402 848 410C830 420 812 432 803 450C800 457 798 463 797 470" fill="none" stroke="#bdbdbd" stroke-width="5" filter="url(#soft3)" opacity=".8"/><path d="M912 396C945 408 957 436 956 462C955 490 940 512 912 522" fill="none" stroke="#d9d9d9" stroke-width="1.6" filter="url(#soft)"/><ellipse cx="832.6" cy="452.600" rx="4.300" ry="5.800" fill="#fdfdfd" stroke="#c2c2c2" stroke-width="1.2"/><ellipse cx="905.7" cy="452.600" rx="4.300" ry="5.800" fill="#fdfdfd" stroke="#c2c2c2" stroke-width="1.2"/><path d="M853 481.5Q871.500 479 890 481.500Q894.500 483 893.500 489Q890 499 871.500 499.500Q853 499 850 489Q849 483 853 481.500Z" fill="#c4c4c4" stroke="#a9a9a9" stroke-width="1.2"/><path d="M857 495Q871.500 490 886 495Q880 498.500 871.500 498.500Q863 498.500 857 495Z" fill="#f1f1f1"/><rect x="863.500" y="482" width="7" height="6.500" rx="2" fill="#f7f7f7"/><rect x="871.500" y="482" width="7" height="6.500" rx="2" fill="#f7f7f7"/><rect x="856.500" y="531" width="27" height="11" rx="4" fill="#fdfdfd" filter="url(#part)"/><rect x="864" y="540" width="11" height="4" rx="1.500" fill="#ececec"/><path d="M782.5 557.0C790.5 554.5 786.0 556.3 790.0 558.0C794.0 559.7 792.5 556.0 794.5 562.0C796.5 568.0 795.6 566.0 796.0 576.0C796.4 586.0 797.0 583.5 795.7 592.0C794.4 600.5 796.4 592.8 792.0 601.5C787.6 610.2 788.9 603.8 782.6 618.0C776.3 632.2 778.5 624.3 773.0 644.0C767.5 663.7 769.9 653.3 766.0 677.0C762.1 700.7 763.2 692.7 761.3 715.0C759.4 737.3 761.1 731.0 760.3 743.8C759.5 756.6 760.6 747.0 758.9 753.3C757.2 759.6 758.1 758.1 755.3 762.8C752.5 767.5 754.2 765.1 750.6 767.5C747.0 769.9 748.6 769.6 744.6 770.0C740.6 770.4 742.2 769.5 738.7 768.7C735.2 767.9 737.6 766.7 734.0 767.5C730.4 768.3 731.0 767.4 728.0 771.0C725.0 774.6 726.6 773.4 724.9 778.2C723.2 783.0 725.3 781.7 722.8 785.3C720.3 788.9 721.5 788.6 717.3 789.0C713.1 789.4 714.5 789.7 710.2 786.5C705.9 783.3 707.1 785.7 704.3 779.4C701.5 773.1 702.3 779.3 701.9 767.5C701.5 755.7 699.8 763.0 703.0 744.0C706.2 725.0 704.6 734.3 711.4 710.5C718.2 686.7 714.6 698.7 723.3 672.5C732.0 646.3 728.0 658.8 737.5 632.0C747.0 605.2 742.3 614.1 751.8 592.0C761.3 569.9 755.8 577.3 766.0 565.6C776.2 553.9 774.5 559.5 782.5 557.0Z" fill="#fdfdfd" filter="url(#part)" /><path d="M972.4 565.6C982.6 577.3 977.1 569.9 986.6 592.0C996.1 614.1 991.4 605.2 1000.9 632.0C1010.4 658.8 1006.4 646.3 1015.1 672.5C1023.8 698.7 1020.2 686.7 1027.0 710.5C1033.8 734.3 1032.2 725.0 1035.4 744.0C1038.6 763.0 1036.9 755.7 1036.5 767.5C1036.1 779.3 1036.9 773.1 1034.1 779.4C1031.3 785.7 1032.5 783.3 1028.2 786.5C1023.9 789.7 1025.3 789.4 1021.1 789.0C1016.9 788.6 1018.1 788.9 1015.6 785.3C1013.1 781.7 1015.2 783.0 1013.5 778.2C1011.8 773.4 1013.4 774.6 1010.4 771.0C1007.4 767.4 1008.0 768.3 1004.4 767.5C1000.8 766.7 1003.2 767.9 999.7 768.7C996.2 769.5 997.8 770.4 993.8 770.0C989.8 769.6 991.4 769.9 987.8 767.5C984.2 765.1 985.9 767.5 983.1 762.8C980.3 758.1 981.2 759.6 979.5 753.3C977.8 747.0 978.9 756.6 978.1 743.8C977.3 731.0 979.0 737.3 977.1 715.0C975.2 692.7 976.3 700.7 972.4 677.0C968.5 653.3 970.9 663.7 965.4 644.0C959.9 624.3 962.1 632.2 955.8 618.0C949.5 603.8 950.8 610.2 946.4 601.5C942.0 592.8 944.0 600.5 942.7 592.0C941.4 583.5 942.0 586.0 942.4 576.0C942.8 566.0 941.9 568.0 943.9 562.0C945.9 556.0 944.4 559.7 948.4 558.0C952.4 556.3 947.9 554.5 955.9 557.0C963.9 559.5 962.2 553.9 972.4 565.6Z" fill="#fdfdfd" filter="url(#part)" /><path d="M796 561.500Q812 560 822 567L828 592Q812 595 797 592.500Z" fill="#fdfdfd" filter="url(#part)"/><path d="M942.400 561.500Q926.400 560 916.400 567L910.400 592Q926.400 595 941.400 592.500Z" fill="#fdfdfd" filter="url(#part)"/><path d="M796.5 562.500Q794 577 798 592" fill="none" stroke="#7a7a7a" stroke-width="1.8" filter="url(#soft)"/><path d="M942 562.500Q944.500 577 940.500 592" fill="none" stroke="#7a7a7a" stroke-width="1.8" filter="url(#soft)"/><path d="M787.5 713.0C792.9 714.6 793.2 712.0 804.0 718.0C814.8 724.0 808.0 720.0 820.0 731.0C832.0 742.0 827.3 738.0 840.0 751.0C852.7 764.0 849.0 759.3 858.0 770.0C867.0 780.7 866.3 777.3 867.0 783.0C867.7 788.7 868.3 790.7 860.0 787.0C851.7 783.3 854.3 778.7 842.0 772.0C829.7 765.3 835.0 771.8 823.0 767.0C811.0 762.2 815.7 764.5 806.0 757.5C796.3 750.5 801.0 753.3 794.0 746.0C787.0 738.7 788.0 739.0 785.0 735.5C785.8 728.1 786.7 720.4 787.5 713.0Z" fill="url(#hipL)"/><path d="M953.4 735.5C950.4 739.0 951.4 738.7 944.4 746.0C937.4 753.3 942.1 750.5 932.4 757.5C922.7 764.5 927.4 762.2 915.4 767.0C903.4 771.8 908.7 765.3 896.4 772.0C884.1 778.7 886.7 783.3 878.4 787.0C870.1 790.7 870.7 788.7 871.4 783.0C872.1 777.3 871.4 780.7 880.4 770.0C889.4 759.3 885.7 764.0 898.4 751.0C911.1 738.0 906.4 742.0 918.4 731.0C930.4 720.0 923.6 724.0 934.4 718.0C945.2 712.0 945.5 714.6 950.9 713.0C951.7 720.4 952.6 728.1 953.4 735.5Z" fill="url(#hipR)"/><path d="M783.8 734.3C787.3 737.4 787.0 736.7 794.5 743.8C802.0 750.9 796.9 748.5 806.4 755.6C815.9 762.7 811.1 760.4 823.0 765.0C834.9 769.6 832.3 765.2 842.0 769.5C851.7 773.8 848.8 771.2 852.0 778.0C855.2 784.8 852.6 782.7 851.5 790.0C850.4 797.3 851.8 789.0 848.6 800.0C845.4 811.0 845.9 807.8 841.8 823.0C837.7 838.2 838.2 832.8 836.3 845.7C834.4 858.6 834.6 849.6 836.0 861.8C837.4 874.0 837.9 868.6 840.6 882.3C843.3 896.0 842.9 887.8 844.0 903.0C845.1 918.2 845.1 912.8 844.0 928.0C842.9 943.2 844.0 934.9 840.6 948.7C837.2 962.5 839.1 957.2 833.7 969.3C828.3 981.4 830.5 977.8 824.5 985.0C818.5 992.2 821.5 991.0 815.7 991.0C809.9 991.0 813.6 992.7 807.0 985.0C800.4 977.3 802.8 981.3 796.0 968.0C789.2 954.7 792.7 964.3 786.7 945.0C780.7 925.7 783.2 936.0 778.0 910.0C772.8 884.0 774.5 893.7 771.0 867.0C767.5 840.3 768.8 852.3 767.5 830.0C766.2 807.7 766.5 820.8 767.2 800.0C767.9 779.2 766.8 784.7 769.6 767.5C772.4 750.3 770.8 759.6 775.5 748.5C780.2 737.4 781.1 739.0 783.8 734.3Z" fill="#fdfdfd" filter="url(#part)" /><path d="M962.9 748.5C967.6 759.6 966.0 750.3 968.8 767.5C971.6 784.7 970.5 779.2 971.2 800.0C971.9 820.8 972.2 807.7 970.9 830.0C969.6 852.3 970.9 840.3 967.4 867.0C963.9 893.7 965.6 884.0 960.4 910.0C955.2 936.0 957.7 925.7 951.7 945.0C945.7 964.3 949.2 954.7 942.4 968.0C935.6 981.3 938.0 977.3 931.4 985.0C924.8 992.7 928.5 991.0 922.7 991.0C916.9 991.0 919.9 992.2 913.9 985.0C907.9 977.8 910.1 981.4 904.7 969.3C899.3 957.2 901.2 962.5 897.8 948.7C894.4 934.9 895.5 943.2 894.4 928.0C893.3 912.8 893.3 918.2 894.4 903.0C895.5 887.8 895.1 896.0 897.8 882.3C900.5 868.6 901.0 874.0 902.4 861.8C903.8 849.6 904.0 858.6 902.1 845.7C900.2 832.8 900.7 838.2 896.6 823.0C892.5 807.8 893.0 811.0 889.8 800.0C886.6 789.0 888.0 797.3 886.9 790.0C885.8 782.7 883.2 784.8 886.4 778.0C889.6 771.2 886.7 773.8 896.4 769.5C906.1 765.2 903.5 769.6 915.4 765.0C927.3 760.4 922.5 762.7 932.0 755.6C941.5 748.5 936.4 750.9 943.9 743.8C951.4 736.7 951.1 737.4 954.6 734.3C957.3 739.0 958.2 737.4 962.9 748.5Z" fill="#fdfdfd" filter="url(#part)" /><path d="M783.8 734.3C787.3 737.4 787.0 736.7 794.5 743.8C802.0 750.9 796.9 748.5 806.4 755.6C815.9 762.7 811.1 760.4 823.0 765.0C834.9 769.6 832.3 765.2 842.0 769.5C851.7 773.8 848.8 771.2 852.0 778.0C855.2 784.8 852.6 782.7 851.5 790.0C850.4 797.3 851.8 789.0 848.6 800.0C845.4 811.0 845.9 807.8 841.8 823.0C837.7 838.2 838.2 832.8 836.3 845.7C834.4 858.6 834.6 849.6 836.0 861.8C837.4 874.0 837.9 868.6 840.6 882.3C843.3 896.0 842.9 887.8 844.0 903.0C845.1 918.2 845.1 912.8 844.0 928.0C842.9 943.2 844.0 934.9 840.6 948.7C837.2 962.5 839.1 957.2 833.7 969.3C828.3 981.4 830.5 977.8 824.5 985.0C818.5 992.2 821.5 991.0 815.7 991.0C809.9 991.0 813.6 992.7 807.0 985.0C800.4 977.3 802.8 981.3 796.0 968.0C789.2 954.7 792.7 964.3 786.7 945.0C780.7 925.7 783.2 936.0 778.0 910.0C772.8 884.0 774.5 893.7 771.0 867.0C767.5 840.3 768.8 852.3 767.5 830.0C766.2 807.7 766.5 820.8 767.2 800.0C767.9 779.2 766.8 784.7 769.6 767.5C772.4 750.3 770.8 759.6 775.5 748.5C780.2 737.4 781.1 739.0 783.8 734.3Z" fill="url(#footfade)"/><path d="M962.9 748.5C967.6 759.6 966.0 750.3 968.8 767.5C971.6 784.7 970.5 779.2 971.2 800.0C971.9 820.8 972.2 807.7 970.9 830.0C969.6 852.3 970.9 840.3 967.4 867.0C963.9 893.7 965.6 884.0 960.4 910.0C955.2 936.0 957.7 925.7 951.7 945.0C945.7 964.3 949.2 954.7 942.4 968.0C935.6 981.3 938.0 977.3 931.4 985.0C924.8 992.7 928.5 991.0 922.7 991.0C916.9 991.0 919.9 992.2 913.9 985.0C907.9 977.8 910.1 981.4 904.7 969.3C899.3 957.2 901.2 962.5 897.8 948.7C894.4 934.9 895.5 943.2 894.4 928.0C893.3 912.8 893.3 918.2 894.4 903.0C895.5 887.8 895.1 896.0 897.8 882.3C900.5 868.6 901.0 874.0 902.4 861.8C903.8 849.6 904.0 858.6 902.1 845.7C900.2 832.8 900.7 838.2 896.6 823.0C892.5 807.8 893.0 811.0 889.8 800.0C886.6 789.0 888.0 797.3 886.9 790.0C885.8 782.7 883.2 784.8 886.4 778.0C889.6 771.2 886.7 773.8 896.4 769.5C906.1 765.2 903.5 769.6 915.4 765.0C927.3 760.4 922.5 762.7 932.0 755.6C941.5 748.5 936.4 750.9 943.9 743.8C951.4 736.7 951.1 737.4 954.6 734.3C957.3 739.0 958.2 737.4 962.9 748.5Z" fill="url(#footfade)"/><path d="M797 748Q820 768 852 779" fill="none" stroke="#6f6f6f" stroke-width="1.8" filter="url(#soft)"/><path d="M942 748Q919 768 887 779" fill="none" stroke="#6f6f6f" stroke-width="1.8" filter="url(#soft)"/><path d="M869.2 544.5C893.3 544.5 891.3 544.4 905.4 545.2C919.5 546.0 908.6 544.7 911.4 546.8C914.2 548.9 912.9 547.4 913.9 551.5C914.9 555.6 913.7 553.7 914.4 559.0C915.1 564.3 912.7 560.2 915.9 567.5C919.1 574.8 916.9 571.3 923.9 581.0C930.9 590.7 930.9 586.6 936.8 596.5C942.7 606.4 940.3 599.7 941.5 610.8C942.7 621.9 942.8 617.1 940.4 629.8C938.0 642.5 937.2 637.7 934.4 648.8C931.6 659.9 931.2 651.9 932.0 663.0C932.8 674.1 932.0 669.3 936.8 682.0C941.6 694.7 941.2 691.1 946.3 701.0C951.4 710.9 950.3 708.2 952.2 711.7C946.3 714.4 945.1 713.2 934.4 720.0C923.7 726.8 931.2 721.7 920.1 732.0C909.0 742.3 913.3 738.8 901.1 751.0C888.9 763.2 891.8 759.0 883.4 768.5C875.0 778.0 879.4 774.2 875.9 779.5C872.4 784.8 875.2 782.3 873.0 784.5C870.8 786.7 871.7 786.0 869.2 786.0C866.7 786.0 867.6 786.7 865.4 784.5C863.2 782.3 866.0 784.8 862.5 779.5C859.0 774.2 863.4 778.0 855.0 768.5C846.6 759.0 849.5 763.2 837.3 751.0C825.1 738.8 829.4 742.3 818.3 732.0C807.2 721.7 814.7 726.8 804.0 720.0C793.3 713.2 792.1 714.4 786.2 711.7C788.1 708.2 787.0 710.9 792.1 701.0C797.2 691.1 796.8 694.7 801.6 682.0C806.4 669.3 805.6 674.1 806.4 663.0C807.2 651.9 806.8 659.9 804.0 648.8C801.2 637.7 800.4 642.5 798.0 629.8C795.6 617.1 795.7 621.9 796.9 610.8C798.1 599.7 795.7 606.4 801.6 596.5C807.5 586.6 807.5 590.7 814.5 581.0C821.5 571.3 819.3 574.8 822.5 567.5C825.7 560.2 823.3 564.3 824.0 559.0C824.7 553.7 823.5 555.6 824.5 551.5C825.5 547.4 824.2 548.9 827.0 546.8C829.8 544.7 818.9 546.0 833.0 545.2C847.1 544.4 845.1 544.5 869.2 544.5Z" fill="#fdfdfd" filter="url(#part)" /><path d="M808 618Q869.500 624 931 618" fill="none" stroke="#e2e2e2" stroke-width="12" filter="url(#soft6)"/><rect x="685.500" y="263.500" width="367" height="732" fill="none" stroke="#ff0000" stroke-width="1"/><path d="M640.500 213V1081M411 263.500H685M411 995.500H685" fill="none" stroke="#ffa3a3" stroke-width="1"/><path d="M627.800 213H652.200L640.200 260.500Z M640 998L661.400 1081H618.700Z" fill="#ff0000"/><text transform="translate(524.6,937.9) rotate(-90) scale(1,1.037)" font-family="Liberation Sans, sans-serif" font-size="319" fill="#ff0000" dx="-5 5.500 -0.500 0">4.00</text></svg>
<div style="left:153px;top:213px;width:58px;height:24px;background:#0050ff;border-radius:0 0 4px 0;"></div>
<span class="t" style="left:162px;top:217.88px;font-size:15.5px;color:#f0f0f0;font-weight:700;letter-spacing:-0.422px;">Top</span>
<div style="left:196px;top:217px;width:1px;height:17px;background:#e8e8e8;"></div>
<svg style="left:198px;top:220px" width="12" height="10" viewBox="0 0 12 10"><path d="M1.500 2.500H10.500L6 8Z" fill="#f0f0f0"/></svg>
<div style="left:1573px;top:213px;width:27px;height:869px;background:#444;"></div>
<div style="left:1599px;top:214px;width:1px;height:252px;background:#3b3b33;"></div>
<div style="left:1573px;top:308px;width:27px;height:48px;background:#333;border:1px solid #6c6c6c;border-left:none;border-radius:0 6px 6px 0;box-sizing:border-box;"></div>
<span class="t" style="left:1595.500px;top:223.5px;font-size:15.5px;color:#8c8c8c;letter-spacing:-0.771px;transform-origin:0 0;transform:rotate(90deg);">Perspective</span>
<span class="t" style="left:1595.500px;top:319.5px;font-size:15.5px;color:#fff;letter-spacing:-0.333px;transform-origin:0 0;transform:rotate(90deg);">Top</span>
<span class="t" style="left:1595.500px;top:367px;font-size:15.5px;color:#8c8c8c;letter-spacing:-0.637px;transform-origin:0 0;transform:rotate(90deg);">Front</span>
<span class="t" style="left:1595.500px;top:421px;font-size:15.5px;color:#8c8c8c;letter-spacing:-0.237px;transform-origin:0 0;transform:rotate(90deg);">Right</span>
<svg style="left:1578px;top:487px" width="14" height="14" viewBox="0 0 14 14"><path d="M7 2V12M2 7H12" stroke="#fff" stroke-width="2"/></svg>
<div style="left:1602px;top:212px;width:315px;height:70px;background:#333;border-radius:8px 8px 8px 0;"></div>
<div style="left:1602px;top:270px;width:291px;height:812px;background:#333;"></div>
<div style="left:1602px;top:236px;width:294px;height:1px;background:#484848;"></div>
<span class="t" style="left:1608px;top:216.38px;font-size:15.5px;color:#8f8f8f;font-weight:400;letter-spacing:-0.550px;transform-origin:0 0;transform:scaleX(0.9484);">Layers</span>
<div style="left:1603px;top:307px;width:285px;height:27px;background:#595959;border:1px solid #7a7a7a;border-radius:13.5px;box-sizing:border-box;"></div>
<svg style="left:1607px;top:312px" width="18" height="18" viewBox="0 0 18 18" fill="none" stroke="#fff" stroke-width="1.3"><circle cx="7.5" cy="8" r="5"/><path d="M11 12L16 17"/></svg>
<span class="t" style="left:1625px;top:312.88px;font-size:15.5px;color:#bdbdbd;font-weight:400;letter-spacing:-0.550px;transform-origin:0 0;transform:scaleX(0.9602);">Search</span>
<div style="left:1602px;top:342px;width:286px;height:28px;background:#222;border-top:1px solid #444;border-bottom:1px solid #444;box-sizing:border-box;"></div>
<div style="left:1701px;top:343px;width:1px;height:26px;background:#444;"></div>
<div style="left:1726px;top:343px;width:1px;height:26px;background:#444;"></div>
<div style="left:1751px;top:343px;width:1px;height:26px;background:#444;"></div>
<div style="left:1776px;top:343px;width:1px;height:26px;background:#444;"></div>
<div style="left:1801px;top:343px;width:1px;height:26px;background:#444;"></div>
<span class="t" style="left:1608px;top:348.88px;font-size:15.5px;color:#fff;font-weight:400;letter-spacing:-0.550px;transform-origin:0 0;transform:scaleX(0.9714);">Layer</span>
<span class="t" style="left:1808px;top:348.88px;font-size:15.5px;color:#fff;font-weight:400;letter-spacing:-0.143px;">Material</span>
<div style="left:1602px;top:370px;width:286px;height:712px;background:#222;"></div>
<div style="left:1602px;top:393px;width:286px;height:1px;background:repeating-linear-gradient(90deg,#4e4e4e 0 3px,transparent 3px 5px)"></div>
<span class="t" style="left:1623px;top:375.08px;font-size:15.5px;color:#fff;font-weight:400;letter-spacing:-0.018px;">Default</span>
<svg style="left:1732px;top:373px" width="14" height="18" viewBox="0 0 14 18"><defs><radialGradient id="bg0" cx="0.4" cy="0.3" r="0.7"><stop offset="0" stop-color="#fff06a"/><stop offset="1" stop-color="#ffd400"/></radialGradient></defs><path d="M7 1.200C3.800 1.200 1.900 3.600 1.900 6.200c0 2.100 1.300 3.200 2.100 4.800l.7 2.300h4.600l.7-2.300c.8-1.600 2.100-2.700 2.100-4.800C12.100 3.600 10.200 1.200 7 1.200z" fill="url(#bg0)" stroke="#fff7c0" stroke-opacity=".55" stroke-width=".6"/><path d="M4.900 13.300h4.200v1.600l-1 1.400H5.900l-1-1.400z" fill="#e09a10"/></svg>
<svg style="left:1756px;top:372px" width="17" height="18" viewBox="0 0 17 18"><path d="M8.500 8V5.200a3.200 3.200 0 0 1 6.400 0V7" fill="none" stroke="#dcdcdc" stroke-width="1.300"/><rect x="2" y="8" width="10.500" height="9.300" rx=".8" fill="#f2c318"/><rect x="2" y="8" width="4.500" height="9.300" fill="#fff08a"/></svg>
<div style="left:1781px;top:373px;width:18px;height:18px;background:#000;border:1.5px solid #b4b4b4;box-sizing:border-box;"></div>
<svg style="left:1803px;top:373px" width="18" height="18" viewBox="0 0 18 18"><circle cx="9.200" cy="9" r="7.600" fill="none" stroke="#747474" stroke-width="1.3"/></svg>
<div style="left:1602px;top:416px;width:286px;height:1px;background:repeating-linear-gradient(90deg,#4e4e4e 0 3px,transparent 3px 5px)"></div>
<span class="t" style="left:1623px;top:398.08px;font-size:15.5px;color:#fff;font-weight:400;letter-spacing:-0.550px;transform-origin:0 0;transform:scaleX(0.9655);">Layer 01</span>
<svg style="left:1732px;top:396px" width="14" height="18" viewBox="0 0 14 18"><defs><radialGradient id="bg1" cx="0.4" cy="0.3" r="0.7"><stop offset="0" stop-color="#fff06a"/><stop offset="1" stop-color="#ffd400"/></radialGradient></defs><path d="M7 1.200C3.800 1.200 1.900 3.600 1.900 6.200c0 2.100 1.300 3.200 2.100 4.800l.7 2.300h4.600l.7-2.300c.8-1.600 2.100-2.700 2.100-4.800C12.100 3.600 10.200 1.200 7 1.200z" fill="url(#bg1)" stroke="#fff7c0" stroke-opacity=".55" stroke-width=".6"/><path d="M4.900 13.300h4.200v1.600l-1 1.400H5.900l-1-1.400z" fill="#e09a10"/></svg>
<svg style="left:1756px;top:395px" width="17" height="18" viewBox="0 0 17 18"><path d="M8.500 8V5.200a3.200 3.200 0 0 1 6.400 0V7" fill="none" stroke="#dcdcdc" stroke-width="1.300"/><rect x="2" y="8" width="10.500" height="9.300" rx=".8" fill="#f2c318"/><rect x="2" y="8" width="4.500" height="9.300" fill="#fff08a"/></svg>
<div style="left:1781px;top:396px;width:18px;height:18px;background:#d40000;border:1.5px solid #b4b4b4;box-sizing:border-box;"></div>
<svg style="left:1803px;top:396px" width="18" height="18" viewBox="0 0 18 18"><circle cx="9.200" cy="9" r="7.600" fill="none" stroke="#747474" stroke-width="1.3"/></svg>
<div style="left:1602px;top:439px;width:286px;height:1px;background:repeating-linear-gradient(90deg,#4e4e4e 0 3px,transparent 3px 5px)"></div>
<span class="t" style="left:1623px;top:421.08px;font-size:15.5px;color:#fff;font-weight:400;letter-spacing:-0.550px;transform-origin:0 0;transform:scaleX(0.9834);">Layer 02</span>
<svg style="left:1732px;top:419px" width="14" height="18" viewBox="0 0 14 18"><defs><radialGradient id="bg2" cx="0.4" cy="0.3" r="0.7"><stop offset="0" stop-color="#fff06a"/><stop offset="1" stop-color="#ffd400"/></radialGradient></defs><path d="M7 1.200C3.800 1.200 1.900 3.600 1.900 6.200c0 2.100 1.300 3.200 2.100 4.800l.7 2.300h4.600l.7-2.300c.8-1.600 2.100-2.700 2.100-4.800C12.100 3.600 10.200 1.200 7 1.200z" fill="url(#bg2)" stroke="#fff7c0" stroke-opacity=".55" stroke-width=".6"/><path d="M4.900 13.300h4.200v1.600l-1 1.400H5.900l-1-1.400z" fill="#e09a10"/></svg>
<svg style="left:1756px;top:418px" width="17" height="18" viewBox="0 0 17 18"><path d="M8.500 8V5.200a3.200 3.200 0 0 1 6.400 0V7" fill="none" stroke="#dcdcdc" stroke-width="1.300"/><rect x="2" y="8" width="10.500" height="9.300" rx=".8" fill="#f2c318"/><rect x="2" y="8" width="4.500" height="9.300" fill="#fff08a"/></svg>
<div style="left:1781px;top:419px;width:18px;height:18px;background:#7d26cd;border:1.5px solid #b4b4b4;box-sizing:border-box;"></div>
<svg style="left:1803px;top:419px" width="18" height="18" viewBox="0 0 18 18"><circle cx="9.200" cy="9" r="7.600" fill="none" stroke="#747474" stroke-width="1.3"/></svg>
<div style="left:1602px;top:462px;width:286px;height:1px;background:repeating-linear-gradient(90deg,#4e4e4e 0 3px,transparent 3px 5px)"></div>
<span class="t" style="left:1623px;top:444.08px;font-size:15.5px;color:#fff;font-weight:400;letter-spacing:-0.550px;transform-origin:0 0;transform:scaleX(0.9834);">Layer 03</span>
<svg style="left:1732px;top:442px" width="14" height="18" viewBox="0 0 14 18"><defs><radialGradient id="bg3" cx="0.4" cy="0.3" r="0.7"><stop offset="0" stop-color="#fff06a"/><stop offset="1" stop-color="#ffd400"/></radialGradient></defs><path d="M7 1.200C3.800 1.200 1.900 3.600 1.900 6.200c0 2.100 1.300 3.200 2.100 4.800l.7 2.300h4.600l.7-2.300c.8-1.600 2.100-2.700 2.100-4.800C12.100 3.600 10.200 1.200 7 1.200z" fill="url(#bg3)" stroke="#fff7c0" stroke-opacity=".55" stroke-width=".6"/><path d="M4.900 13.300h4.200v1.600l-1 1.400H5.900l-1-1.400z" fill="#e09a10"/></svg>
<svg style="left:1756px;top:441px" width="17" height="18" viewBox="0 0 17 18"><path d="M8.500 8V5.200a3.200 3.200 0 0 1 6.400 0V7" fill="none" stroke="#dcdcdc" stroke-width="1.300"/><rect x="2" y="8" width="10.500" height="9.300" rx=".8" fill="#f2c318"/><rect x="2" y="8" width="4.500" height="9.300" fill="#fff08a"/></svg>
<div style="left:1781px;top:442px;width:18px;height:18px;background:#0000ff;border:1.5px solid #b4b4b4;box-sizing:border-box;"></div>
<svg style="left:1803px;top:442px" width="18" height="18" viewBox="0 0 18 18"><circle cx="9.200" cy="9" r="7.600" fill="none" stroke="#747474" stroke-width="1.3"/></svg>
<div style="left:1602px;top:485px;width:286px;height:1px;background:repeating-linear-gradient(90deg,#4e4e4e 0 3px,transparent 3px 5px)"></div>
<span class="t" style="left:1623px;top:467.08px;font-size:15.5px;color:#fff;font-weight:400;letter-spacing:-0.550px;transform-origin:0 0;transform:scaleX(0.9834);">Layer 04</span>
<svg style="left:1732px;top:465px" width="14" height="18" viewBox="0 0 14 18"><defs><radialGradient id="bg4" cx="0.4" cy="0.3" r="0.7"><stop offset="0" stop-color="#fff06a"/><stop offset="1" stop-color="#ffd400"/></radialGradient></defs><path d="M7 1.200C3.800 1.200 1.900 3.600 1.900 6.200c0 2.100 1.300 3.200 2.100 4.800l.7 2.300h4.600l.7-2.300c.8-1.600 2.100-2.700 2.100-4.800C12.100 3.600 10.200 1.200 7 1.200z" fill="url(#bg4)" stroke="#fff7c0" stroke-opacity=".55" stroke-width=".6"/><path d="M4.900 13.300h4.200v1.600l-1 1.400H5.900l-1-1.400z" fill="#e09a10"/></svg>
<svg style="left:1756px;top:464px" width="17" height="18" viewBox="0 0 17 18"><path d="M8.500 8V5.200a3.200 3.200 0 0 1 6.400 0V7" fill="none" stroke="#dcdcdc" stroke-width="1.300"/><rect x="2" y="8" width="10.500" height="9.300" rx=".8" fill="#f2c318"/><rect x="2" y="8" width="4.500" height="9.300" fill="#fff08a"/></svg>
<div style="left:1781px;top:465px;width:18px;height:18px;background:#008000;border:1.5px solid #b4b4b4;box-sizing:border-box;"></div>
<svg style="left:1803px;top:465px" width="18" height="18" viewBox="0 0 18 18"><circle cx="9.200" cy="9" r="7.600" fill="none" stroke="#747474" stroke-width="1.3"/></svg>
<div style="left:1602px;top:508px;width:286px;height:1px;background:repeating-linear-gradient(90deg,#4e4e4e 0 3px,transparent 3px 5px)"></div>
<span class="t" style="left:1623px;top:490.08px;font-size:15.5px;color:#fff;font-weight:400;letter-spacing:-0.550px;transform-origin:0 0;transform:scaleX(0.9834);">Layer 05</span>
<svg style="left:1732px;top:488px" width="14" height="18" viewBox="0 0 14 18"><defs><radialGradient id="bg5" cx="0.4" cy="0.3" r="0.7"><stop offset="0" stop-color="#fff06a"/><stop offset="1" stop-color="#ffd400"/></radialGradient></defs><path d="M7 1.200C3.800 1.200 1.900 3.600 1.900 6.200c0 2.100 1.300 3.200 2.100 4.800l.7 2.300h4.600l.7-2.300c.8-1.600 2.100-2.700 2.100-4.800C12.100 3.600 10.200 1.200 7 1.200z" fill="url(#bg5)" stroke="#fff7c0" stroke-opacity=".55" stroke-width=".6"/><path d="M4.900 13.300h4.200v1.600l-1 1.400H5.900l-1-1.400z" fill="#e09a10"/></svg>
<svg style="left:1756px;top:487px" width="17" height="18" viewBox="0 0 17 18"><path d="M8.500 8V5.200a3.200 3.200 0 0 1 6.400 0V7" fill="none" stroke="#dcdcdc" stroke-width="1.300"/><rect x="2" y="8" width="10.500" height="9.300" rx=".8" fill="#f2c318"/><rect x="2" y="8" width="4.500" height="9.300" fill="#fff08a"/></svg>
<div style="left:1781px;top:488px;width:18px;height:18px;background:#fff;border:1.5px solid #b4b4b4;box-sizing:border-box;"></div>
<svg style="left:1803px;top:488px" width="18" height="18" viewBox="0 0 18 18"><circle cx="9.200" cy="9" r="7.600" fill="none" stroke="#747474" stroke-width="1.3"/></svg>
<div style="left:1602px;top:531px;width:286px;height:1px;background:repeating-linear-gradient(90deg,#4e4e4e 0 3px,transparent 3px 5px)"></div>
<span class="t" style="left:1623px;top:513.08px;font-size:15.5px;color:#fff;font-weight:400;letter-spacing:-0.465px;">unrl</span>
<svg style="left:1732px;top:511px" width="14" height="18" viewBox="0 0 14 18"><defs><!--<radialGradient id="bg6" cx="0.4" cy="0.3" r="0.7"><stop offset="0" stop-color="#fff06a"/><stop offset="1" stop-color="#ffd400"/></radialGradient>--></defs><path d="M7 1.200C3.800 1.200 1.900 3.600 1.900 6.200c0 2.100 1.300 3.200 2.100 4.800l.7 2.300h4.600l.7-2.300c.8-1.600 2.100-2.700 2.100-4.800C12.100 3.600 10.200 1.200 7 1.200z" fill="#6aa2f2" stroke="#fff7c0" stroke-opacity=".55" stroke-width=".6"/><path d="M4.900 13.300h4.200v1.600l-1 1.400H5.900l-1-1.400z" fill="#3c6fd0"/></svg>
<svg style="left:1756px;top:510px" width="15" height="18" viewBox="0 0 15 18"><path d="M4 8V5.500a3.500 3.500 0 0 1 7 0V8" fill="none" stroke="#dcdcdc" stroke-width="1.6"/><rect x="2.200" y="8" width="10.500" height="9.300" rx=".8" fill="#6fa4f0"/><rect x="2.200" y="8" width="4.500" height="9.300" fill="#8bbcff"/></svg>
<div style="left:1781px;top:511px;width:18px;height:18px;background:#000;border:1.5px solid #b4b4b4;box-sizing:border-box;"></div>
<svg style="left:1803px;top:511px" width="18" height="18" viewBox="0 0 18 18"><circle cx="9.200" cy="9" r="7.600" fill="none" stroke="#747474" stroke-width="1.3"/></svg>
<div style="left:1602px;top:554px;width:286px;height:1px;background:repeating-linear-gradient(90deg,#4e4e4e 0 3px,transparent 3px 5px)"></div>
<span class="t" style="left:1623px;top:536.08px;font-size:15.5px;color:#fff;font-weight:400;letter-spacing:-0.217px;">boundingbc</span>
<svg style="left:1732px;top:534px" width="14" height="18" viewBox="0 0 14 18"><defs><radialGradient id="bg7" cx="0.4" cy="0.3" r="0.7"><stop offset="0" stop-color="#fff06a"/><stop offset="1" stop-color="#ffd400"/></radialGradient></defs><path d="M7 1.200C3.800 1.200 1.900 3.600 1.900 6.200c0 2.100 1.300 3.200 2.100 4.800l.7 2.300h4.600l.7-2.300c.8-1.600 2.100-2.700 2.100-4.800C12.100 3.600 10.200 1.200 7 1.200z" fill="url(#bg7)" stroke="#fff7c0" stroke-opacity=".55" stroke-width=".6"/><path d="M4.900 13.300h4.200v1.600l-1 1.400H5.900l-1-1.400z" fill="#e09a10"/></svg>
<svg style="left:1756px;top:533px" width="15" height="18" viewBox="0 0 15 18"><path d="M4 8V5.500a3.500 3.500 0 0 1 7 0V8" fill="none" stroke="#dcdcdc" stroke-width="1.6"/><rect x="2.200" y="8" width="10.500" height="9.300" rx=".8" fill="#6fa4f0"/><rect x="2.200" y="8" width="4.500" height="9.300" fill="#8bbcff"/></svg>
<div style="left:1781px;top:534px;width:18px;height:18px;background:#ff0000;border:1.5px solid #b4b4b4;box-sizing:border-box;"></div>
<svg style="left:1803px;top:534px" width="18" height="18" viewBox="0 0 18 18"><circle cx="9.200" cy="9" r="7.600" fill="none" stroke="#747474" stroke-width="1.3"/></svg>
<div style="left:1602px;top:577px;width:286px;height:1px;background:repeating-linear-gradient(90deg,#4e4e4e 0 3px,transparent 3px 5px)"></div>
<span class="t" style="left:1623px;top:559.08px;font-size:15.5px;color:#fff;font-weight:400;letter-spacing:-0.550px;transform-origin:0 0;transform:scaleX(0.9912);">head</span>
<svg style="left:1732px;top:557px" width="14" height="18" viewBox="0 0 14 18"><defs><!--<radialGradient id="bg8" cx="0.4" cy="0.3" r="0.7"><stop offset="0" stop-color="#fff06a"/><stop offset="1" stop-color="#ffd400"/></radialGradient>--></defs><path d="M7 1.200C3.800 1.200 1.900 3.600 1.900 6.200c0 2.100 1.300 3.200 2.100 4.800l.7 2.300h4.600l.7-2.300c.8-1.600 2.100-2.700 2.100-4.800C12.100 3.600 10.200 1.200 7 1.200z" fill="#6aa2f2" stroke="#fff7c0" stroke-opacity=".55" stroke-width=".6"/><path d="M4.900 13.300h4.200v1.600l-1 1.400H5.900l-1-1.400z" fill="#3c6fd0"/></svg>
<svg style="left:1756px;top:556px" width="15" height="18" viewBox="0 0 15 18"><path d="M4 8V5.500a3.500 3.500 0 0 1 7 0V8" fill="none" stroke="#dcdcdc" stroke-width="1.6"/><rect x="2.200" y="8" width="10.500" height="9.300" rx=".8" fill="#6fa4f0"/><rect x="2.200" y="8" width="4.500" height="9.300" fill="#8bbcff"/></svg>
<div style="left:1781px;top:557px;width:18px;height:18px;background:#ff0000;border:1.5px solid #b4b4b4;box-sizing:border-box;"></div>
<svg style="left:1803px;top:557px" width="18" height="18" viewBox="0 0 18 18"><circle cx="9.200" cy="9" r="7.600" fill="none" stroke="#747474" stroke-width="1.3"/></svg>
<div style="left:1602px;top:600px;width:286px;height:1px;background:repeating-linear-gradient(90deg,#4e4e4e 0 3px,transparent 3px 5px)"></div>
<span class="t" style="left:1623px;top:582.08px;font-size:15.5px;color:#fff;font-weight:400;letter-spacing:-0.550px;transform-origin:0 0;transform:scaleX(0.8493);">REFERENCE</span>
<svg style="left:1732px;top:580px" width="14" height="18" viewBox="0 0 14 18"><defs><!--<radialGradient id="bg9" cx="0.4" cy="0.3" r="0.7"><stop offset="0" stop-color="#fff06a"/><stop offset="1" stop-color="#ffd400"/></radialGradient>--></defs><path d="M7 1.200C3.800 1.200 1.900 3.600 1.900 6.200c0 2.100 1.300 3.200 2.100 4.800l.7 2.300h4.600l.7-2.300c.8-1.600 2.100-2.700 2.100-4.800C12.100 3.600 10.200 1.200 7 1.200z" fill="#6aa2f2" stroke="#fff7c0" stroke-opacity=".55" stroke-width=".6"/><path d="M4.900 13.300h4.200v1.600l-1 1.400H5.900l-1-1.400z" fill="#3c6fd0"/></svg>
<svg style="left:1756px;top:579px" width="15" height="18" viewBox="0 0 15 18"><path d="M4 8V5.500a3.500 3.500 0 0 1 7 0V8" fill="none" stroke="#dcdcdc" stroke-width="1.6"/><rect x="2.200" y="8" width="10.500" height="9.300" rx=".8" fill="#6fa4f0"/><rect x="2.200" y="8" width="4.500" height="9.300" fill="#8bbcff"/></svg>
<div style="left:1781px;top:580px;width:18px;height:18px;background:#000;border:1.5px solid #b4b4b4;box-sizing:border-box;"></div>
<svg style="left:1803px;top:580px" width="18" height="18" viewBox="0 0 18 18"><circle cx="9.200" cy="9" r="7.600" fill="none" stroke="#747474" stroke-width="1.3"/></svg>
<div style="left:1602px;top:623px;width:286px;height:1px;background:repeating-linear-gradient(90deg,#4e4e4e 0 3px,transparent 3px 5px)"></div>
<span class="t" style="left:1623px;top:605.08px;font-size:15.5px;color:#fff;font-weight:400;letter-spacing:-0.222px;">centerline</span>
<svg style="left:1732px;top:603px" width="14" height="18" viewBox="0 0 14 18"><defs><radialGradient id="bg10" cx="0.4" cy="0.3" r="0.7"><stop offset="0" stop-color="#fff06a"/><stop offset="1" stop-color="#ffd400"/></radialGradient></defs><path d="M7 1.200C3.800 1.200 1.900 3.600 1.900 6.200c0 2.100 1.300 3.200 2.100 4.800l.7 2.300h4.600l.7-2.300c.8-1.600 2.100-2.700 2.100-4.800C12.100 3.600 10.200 1.200 7 1.200z" fill="url(#bg10)" stroke="#fff7c0" stroke-opacity=".55" stroke-width=".6"/><path d="M4.900 13.300h4.200v1.600l-1 1.400H5.900l-1-1.400z" fill="#e09a10"/></svg>
<svg style="left:1756px;top:602px" width="15" height="18" viewBox="0 0 15 18"><path d="M4 8V5.500a3.500 3.500 0 0 1 7 0V8" fill="none" stroke="#dcdcdc" stroke-width="1.6"/><rect x="2.200" y="8" width="10.500" height="9.300" rx=".8" fill="#6fa4f0"/><rect x="2.200" y="8" width="4.500" height="9.300" fill="#8bbcff"/></svg>
<div style="left:1781px;top:603px;width:18px;height:18px;background:#000;border:1.5px solid #b4b4b4;box-sizing:border-box;"></div>
<svg style="left:1803px;top:603px" width="18" height="18" viewBox="0 0 18 18"><circle cx="9.200" cy="9" r="7.600" fill="none" stroke="#747474" stroke-width="1.3"/></svg>
<div style="left:1602px;top:646px;width:286px;height:1px;background:repeating-linear-gradient(90deg,#4e4e4e 0 3px,transparent 3px 5px)"></div>
<span class="t" style="left:1623px;top:628.08px;font-size:15.5px;color:#fff;font-weight:400;letter-spacing:-0.550px;transform-origin:0 0;transform:scaleX(0.9534);">crvs</span>
<svg style="left:1732px;top:626px" width="14" height="18" viewBox="0 0 14 18"><defs><!--<radialGradient id="bg11" cx="0.4" cy="0.3" r="0.7"><stop offset="0" stop-color="#fff06a"/><stop offset="1" stop-color="#ffd400"/></radialGradient>--></defs><path d="M7 1.200C3.800 1.200 1.900 3.600 1.900 6.200c0 2.100 1.300 3.200 2.100 4.800l.7 2.300h4.600l.7-2.300c.8-1.600 2.100-2.700 2.100-4.800C12.100 3.600 10.200 1.200 7 1.200z" fill="#6aa2f2" stroke="#fff7c0" stroke-opacity=".55" stroke-width=".6"/><path d="M4.900 13.300h4.200v1.600l-1 1.400H5.900l-1-1.400z" fill="#3c6fd0"/></svg>
<svg style="left:1756px;top:625px" width="15" height="18" viewBox="0 0 15 18"><path d="M4 8V5.500a3.500 3.500 0 0 1 7 0V8" fill="none" stroke="#dcdcdc" stroke-width="1.6"/><rect x="2.200" y="8" width="10.500" height="9.300" rx=".8" fill="#6fa4f0"/><rect x="2.200" y="8" width="4.500" height="9.300" fill="#8bbcff"/></svg>
<div style="left:1781px;top:626px;width:18px;height:18px;background:#000;border:1.5px solid #b4b4b4;box-sizing:border-box;"></div>
<svg style="left:1803px;top:626px" width="18" height="18" viewBox="0 0 18 18"><circle cx="9.200" cy="9" r="7.600" fill="none" stroke="#747474" stroke-width="1.3"/></svg>
<div style="left:1602px;top:669px;width:286px;height:1px;background:repeating-linear-gradient(90deg,#4e4e4e 0 3px,transparent 3px 5px)"></div>
<span class="t" style="left:1623px;top:651.08px;font-size:15.5px;color:#fff;font-weight:400;letter-spacing:-0.544px;">HEAD, hair,</span>
<svg style="left:1732px;top:649px" width="14" height="18" viewBox="0 0 14 18"><defs><radialGradient id="bg12" cx="0.4" cy="0.3" r="0.7"><stop offset="0" stop-color="#fff06a"/><stop offset="1" stop-color="#ffd400"/></radialGradient></defs><path d="M7 1.200C3.800 1.200 1.900 3.600 1.900 6.200c0 2.100 1.300 3.200 2.100 4.800l.7 2.300h4.600l.7-2.300c.8-1.600 2.100-2.700 2.100-4.800C12.100 3.600 10.200 1.200 7 1.200z" fill="url(#bg12)" stroke="#fff7c0" stroke-opacity=".55" stroke-width=".6"/><path d="M4.900 13.300h4.200v1.600l-1 1.400H5.900l-1-1.400z" fill="#e09a10"/></svg>
<svg style="left:1756px;top:648px" width="17" height="18" viewBox="0 0 17 18"><path d="M8.500 8V5.200a3.200 3.200 0 0 1 6.400 0V7" fill="none" stroke="#dcdcdc" stroke-width="1.300"/><rect x="2" y="8" width="10.500" height="9.300" rx=".8" fill="#f2c318"/><rect x="2" y="8" width="4.500" height="9.300" fill="#fff08a"/></svg>
<div style="left:1781px;top:649px;width:18px;height:18px;background:#000;border:1.5px solid #b4b4b4;box-sizing:border-box;"></div>
<svg style="left:1803px;top:649px" width="18" height="18" viewBox="0 0 18 18"><circle cx="9.200" cy="9" r="7.600" fill="none" stroke="#747474" stroke-width="1.3"/></svg>
<div style="left:1602px;top:692px;width:286px;height:1px;background:repeating-linear-gradient(90deg,#4e4e4e 0 3px,transparent 3px 5px)"></div>
<span class="t" style="left:1623px;top:674.08px;font-size:15.5px;color:#fff;font-weight:400;letter-spacing:-0.550px;transform-origin:0 0;transform:scaleX(0.8830);">TORSO</span>
<svg style="left:1732px;top:672px" width="14" height="18" viewBox="0 0 14 18"><defs><radialGradient id="bg13" cx="0.4" cy="0.3" r="0.7"><stop offset="0" stop-color="#fff06a"/><stop offset="1" stop-color="#ffd400"/></radialGradient></defs><path d="M7 1.200C3.800 1.200 1.900 3.600 1.900 6.200c0 2.100 1.300 3.200 2.100 4.800l.7 2.300h4.600l.7-2.300c.8-1.600 2.100-2.700 2.100-4.800C12.100 3.600 10.200 1.200 7 1.200z" fill="url(#bg13)" stroke="#fff7c0" stroke-opacity=".55" stroke-width=".6"/><path d="M4.900 13.300h4.200v1.600l-1 1.400H5.900l-1-1.400z" fill="#e09a10"/></svg>
<svg style="left:1756px;top:671px" width="17" height="18" viewBox="0 0 17 18"><path d="M8.500 8V5.200a3.200 3.200 0 0 1 6.400 0V7" fill="none" stroke="#dcdcdc" stroke-width="1.300"/><rect x="2" y="8" width="10.500" height="9.300" rx=".8" fill="#f2c318"/><rect x="2" y="8" width="4.500" height="9.300" fill="#fff08a"/></svg>
<div style="left:1781px;top:672px;width:18px;height:18px;background:#000;border:1.5px solid #b4b4b4;box-sizing:border-box;"></div>
<svg style="left:1803px;top:672px" width="18" height="18" viewBox="0 0 18 18"><circle cx="9.200" cy="9" r="7.600" fill="none" stroke="#747474" stroke-width="1.3"/></svg>
<div style="left:1602px;top:715px;width:286px;height:1px;background:repeating-linear-gradient(90deg,#4e4e4e 0 3px,transparent 3px 5px)"></div>
<span class="t" style="left:1623px;top:697.08px;font-size:15.5px;color:#fff;font-weight:400;letter-spacing:-0.229px;">cut</span>
<svg style="left:1732px;top:695px" width="14" height="18" viewBox="0 0 14 18"><defs><radialGradient id="bg14" cx="0.4" cy="0.3" r="0.7"><stop offset="0" stop-color="#fff06a"/><stop offset="1" stop-color="#ffd400"/></radialGradient></defs><path d="M7 1.200C3.800 1.200 1.900 3.600 1.900 6.200c0 2.100 1.300 3.200 2.100 4.800l.7 2.300h4.600l.7-2.300c.8-1.600 2.100-2.700 2.100-4.800C12.100 3.600 10.200 1.200 7 1.200z" fill="url(#bg14)" stroke="#fff7c0" stroke-opacity=".55" stroke-width=".6"/><path d="M4.900 13.300h4.200v1.600l-1 1.400H5.900l-1-1.400z" fill="#e09a10"/></svg>
<svg style="left:1756px;top:694px" width="17" height="18" viewBox="0 0 17 18"><path d="M8.500 8V5.200a3.200 3.200 0 0 1 6.400 0V7" fill="none" stroke="#dcdcdc" stroke-width="1.300"/><rect x="2" y="8" width="10.500" height="9.300" rx=".8" fill="#f2c318"/><rect x="2" y="8" width="4.500" height="9.300" fill="#fff08a"/></svg>
<div style="left:1781px;top:695px;width:18px;height:18px;background:#000;border:1.5px solid #b4b4b4;box-sizing:border-box;"></div>
<svg style="left:1803px;top:695px" width="18" height="18" viewBox="0 0 18 18"><circle cx="9.200" cy="9" r="7.600" fill="none" stroke="#747474" stroke-width="1.3"/></svg>
<div style="left:1602px;top:738px;width:286px;height:1px;background:repeating-linear-gradient(90deg,#4e4e4e 0 3px,transparent 3px 5px)"></div>
<span class="t" style="left:1623px;top:720.08px;font-size:15.5px;color:#fff;font-weight:400;letter-spacing:-0.550px;transform-origin:0 0;transform:scaleX(0.9922);">arms</span>
<svg style="left:1732px;top:718px" width="14" height="18" viewBox="0 0 14 18"><defs><radialGradient id="bg15" cx="0.4" cy="0.3" r="0.7"><stop offset="0" stop-color="#fff06a"/><stop offset="1" stop-color="#ffd400"/></radialGradient></defs><path d="M7 1.200C3.800 1.200 1.900 3.600 1.900 6.200c0 2.100 1.300 3.200 2.100 4.800l.7 2.300h4.600l.7-2.300c.8-1.600 2.100-2.700 2.100-4.800C12.100 3.600 10.200 1.200 7 1.200z" fill="url(#bg15)" stroke="#fff7c0" stroke-opacity=".55" stroke-width=".6"/><path d="M4.900 13.300h4.200v1.600l-1 1.400H5.900l-1-1.400z" fill="#e09a10"/></svg>
<svg style="left:1756px;top:717px" width="17" height="18" viewBox="0 0 17 18"><path d="M8.500 8V5.200a3.200 3.200 0 0 1 6.400 0V7" fill="none" stroke="#dcdcdc" stroke-width="1.300"/><rect x="2" y="8" width="10.500" height="9.300" rx=".8" fill="#f2c318"/><rect x="2" y="8" width="4.500" height="9.300" fill="#fff08a"/></svg>
<div style="left:1781px;top:718px;width:18px;height:18px;background:#000;border:1.5px solid #b4b4b4;box-sizing:border-box;"></div>
<svg style="left:1803px;top:718px" width="18" height="18" viewBox="0 0 18 18"><circle cx="9.200" cy="9" r="7.600" fill="none" stroke="#747474" stroke-width="1.3"/></svg>
<div style="left:1602px;top:739px;width:286px;height:22px;background:#4a86f7;"></div>
<div style="left:1602px;top:761px;width:286px;height:1px;background:repeating-linear-gradient(90deg,#4e4e4e 0 3px,transparent 3px 5px)"></div>
<span class="t" style="left:1623px;top:743.08px;font-size:15.5px;color:#fff;font-weight:400;letter-spacing:-0.359px;">legs</span>
<svg style="left:1732px;top:741px" width="14" height="18" viewBox="0 0 14 18"><defs><radialGradient id="bg16" cx="0.4" cy="0.3" r="0.7"><stop offset="0" stop-color="#fff06a"/><stop offset="1" stop-color="#ffd400"/></radialGradient></defs><path d="M7 1.200C3.800 1.200 1.900 3.600 1.900 6.200c0 2.100 1.300 3.200 2.100 4.800l.7 2.300h4.600l.7-2.300c.8-1.600 2.100-2.700 2.100-4.800C12.100 3.600 10.200 1.200 7 1.200z" fill="url(#bg16)" stroke="#fff7c0" stroke-opacity=".55" stroke-width=".6"/><path d="M4.900 13.300h4.200v1.600l-1 1.400H5.900l-1-1.400z" fill="#e09a10"/></svg>
<svg style="left:1756px;top:740px" width="17" height="18" viewBox="0 0 17 18"><path d="M8.500 8V5.200a3.200 3.200 0 0 1 6.400 0V7" fill="none" stroke="#dcdcdc" stroke-width="1.300"/><rect x="2" y="8" width="10.500" height="9.300" rx=".8" fill="#f2c318"/><rect x="2" y="8" width="4.500" height="9.300" fill="#fff08a"/></svg>
<div style="left:1781px;top:741px;width:18px;height:18px;background:#000;border:1.5px solid #b4b4b4;box-sizing:border-box;"></div>
<svg style="left:1803px;top:741px" width="18" height="18" viewBox="0 0 18 18"><circle cx="9.200" cy="9" r="7.600" fill="#222" stroke="#222" stroke-width="1.3"/></svg>
<div style="left:1602px;top:784px;width:286px;height:1px;background:repeating-linear-gradient(90deg,#4e4e4e 0 3px,transparent 3px 5px)"></div>
<span class="t" style="left:1623px;top:766.08px;font-size:15.5px;color:#fff;font-weight:400;letter-spacing:-0.276px;">updated hai</span>
<svg style="left:1732px;top:764px" width="14" height="18" viewBox="0 0 14 18"><defs><radialGradient id="bg17" cx="0.4" cy="0.3" r="0.7"><stop offset="0" stop-color="#fff06a"/><stop offset="1" stop-color="#ffd400"/></radialGradient></defs><path d="M7 1.200C3.800 1.200 1.900 3.600 1.900 6.200c0 2.100 1.300 3.200 2.100 4.800l.7 2.300h4.600l.7-2.300c.8-1.600 2.100-2.700 2.100-4.800C12.100 3.600 10.200 1.200 7 1.200z" fill="url(#bg17)" stroke="#fff7c0" stroke-opacity=".55" stroke-width=".6"/><path d="M4.900 13.300h4.200v1.600l-1 1.400H5.900l-1-1.400z" fill="#e09a10"/></svg>
<svg style="left:1756px;top:763px" width="15" height="18" viewBox="0 0 15 18"><path d="M4 8V5.500a3.500 3.500 0 0 1 7 0V8" fill="none" stroke="#dcdcdc" stroke-width="1.6"/><rect x="2.200" y="8" width="10.500" height="9.300" rx=".8" fill="#6fa4f0"/><rect x="2.200" y="8" width="4.500" height="9.300" fill="#8bbcff"/></svg>
<div style="left:1781px;top:764px;width:18px;height:18px;background:#000;border:1.5px solid #b4b4b4;box-sizing:border-box;"></div>
<svg style="left:1803px;top:764px" width="18" height="18" viewBox="0 0 18 18"><circle cx="9.200" cy="9" r="7.600" fill="none" stroke="#747474" stroke-width="1.3"/></svg>
<div style="left:1602px;top:807px;width:286px;height:1px;background:repeating-linear-gradient(90deg,#4e4e4e 0 3px,transparent 3px 5px)"></div>
<span class="t" style="left:1623px;top:789.08px;font-size:15.5px;color:#fff;font-weight:400;letter-spacing:-0.188px;">copy</span>
<svg style="left:1732px;top:787px" width="14" height="18" viewBox="0 0 14 18"><defs><!--<radialGradient id="bg18" cx="0.4" cy="0.3" r="0.7"><stop offset="0" stop-color="#fff06a"/><stop offset="1" stop-color="#ffd400"/></radialGradient>--></defs><path d="M7 1.200C3.800 1.200 1.900 3.600 1.900 6.200c0 2.100 1.300 3.200 2.100 4.800l.7 2.300h4.600l.7-2.300c.8-1.600 2.100-2.700 2.100-4.800C12.100 3.600 10.200 1.200 7 1.200z" fill="#6aa2f2" stroke="#fff7c0" stroke-opacity=".55" stroke-width=".6"/><path d="M4.900 13.300h4.200v1.600l-1 1.400H5.900l-1-1.400z" fill="#3c6fd0"/></svg>
<svg style="left:1756px;top:786px" width="15" height="18" viewBox="0 0 15 18"><path d="M4 8V5.500a3.500 3.500 0 0 1 7 0V8" fill="none" stroke="#dcdcdc" stroke-width="1.6"/><rect x="2.200" y="8" width="10.500" height="9.300" rx=".8" fill="#6fa4f0"/><rect x="2.200" y="8" width="4.500" height="9.300" fill="#8bbcff"/></svg>
<div style="left:1781px;top:787px;width:18px;height:18px;background:#000;border:1.5px solid #b4b4b4;box-sizing:border-box;"></div>
<svg style="left:1803px;top:787px" width="18" height="18" viewBox="0 0 18 18"><circle cx="9.200" cy="9" r="7.600" fill="none" stroke="#747474" stroke-width="1.3"/></svg>
<div style="left:1602px;top:830px;width:286px;height:1px;background:repeating-linear-gradient(90deg,#4e4e4e 0 3px,transparent 3px 5px)"></div>
<span class="t" style="left:1622px;top:812.08px;font-size:15.5px;color:#fff;font-weight:700;letter-spacing:-0.224px;">joints</span>
<div style="left:1781px;top:810px;width:18px;height:18px;background:#000;border:1.5px solid #b4b4b4;box-sizing:border-box;"></div>
<svg style="left:1803px;top:810px" width="18" height="18" viewBox="0 0 18 18"><circle cx="9.200" cy="9" r="7.600" fill="none" stroke="#747474" stroke-width="1.3"/></svg>
<svg style="left:1703px;top:810px" width="22" height="18" viewBox="0 0 22 18" fill="none" stroke="#fff" stroke-width="1.2"><path d="M2 10L7 15L20 2M5 10.500L8.500 13.500"/><path d="M7 15L20 2L21 4L8 16Z" fill="#222" stroke="#fff" stroke-width="1"/></svg>
<div style="left:1611px;top:1068px;width:107px;height:10px;background:#7b7b7b;border-radius:5px;"></div>
<div style="left:0px;top:1085px;width:1918px;height:52px;background:#333;"></div>
<div style="left:0px;top:1085px;width:2px;height:27px;background:#444;"></div>
<div style="left:2px;top:1085px;width:13px;height:27px;background:#333;border-radius:7px 0 0 7px;"></div>
<div style="left:14px;top:1088px;width:1px;height:22px;background:#4a4a4a;"></div>
<div style="left:6px;top:1089.0px;width:2px;height:2px;border:1px solid #555;border-radius:50%"></div>
<div style="left:6px;top:1096.5px;width:2px;height:2px;border:1px solid #555;border-radius:50%"></div>
<div style="left:6px;top:1104.0px;width:2px;height:2px;border:1px solid #555;border-radius:50%"></div>
<div style="left:18px;top:1092px;width:16px;height:15px;background:#5a5a5a;border:1px solid #7c7c7c;box-sizing:border-box;"></div>
<svg style="left:18px;top:1092px" width="16" height="15" viewBox="0 0 16 15"><path d="M2.800 7.800L7 12L14 1.800" fill="none" stroke="#fff" stroke-width="2.100"/></svg>
<span class="t" style="left:41px;top:1091.88px;font-size:15.5px;color:#f0f0f0;font-weight:400;letter-spacing:-0.550px;transform-origin:0 0;transform:scaleX(0.9251);">End</span>
<div style="left:76px;top:1092px;width:16px;height:15px;background:#5a5a5a;border:1px solid #7c7c7c;box-sizing:border-box;"></div>
<svg style="left:76px;top:1092px" width="16" height="15" viewBox="0 0 16 15"><path d="M2.800 7.800L7 12L14 1.800" fill="none" stroke="#fff" stroke-width="2.100"/></svg>
<span class="t" style="left:98px;top:1091.88px;font-size:15.5px;color:#f0f0f0;font-weight:400;letter-spacing:-0.402px;">Near</span>
<div style="left:141px;top:1092px;width:16px;height:15px;background:#5a5a5a;border:1px solid #7c7c7c;box-sizing:border-box;"></div>
<svg style="left:141px;top:1092px" width="16" height="15" viewBox="0 0 16 15"><path d="M2.800 7.800L7 12L14 1.800" fill="none" stroke="#fff" stroke-width="2.100"/></svg>
<span class="t" style="left:163px;top:1091.88px;font-size:15.5px;color:#f0f0f0;font-weight:400;letter-spacing:-0.469px;">Point</span>
<div style="left:207px;top:1092px;width:16px;height:15px;background:#5a5a5a;border:1px solid #7c7c7c;box-sizing:border-box;"></div>
<svg style="left:207px;top:1092px" width="16" height="15" viewBox="0 0 16 15"><path d="M2.800 7.800L7 12L14 1.800" fill="none" stroke="#fff" stroke-width="2.100"/></svg>
<span class="t" style="left:229px;top:1091.88px;font-size:15.5px;color:#f0f0f0;font-weight:400;letter-spacing:0.339px;">Mid</span>
<div style="left:266px;top:1092px;width:16px;height:15px;background:#5a5a5a;border:1px solid #7c7c7c;box-sizing:border-box;"></div>
<span class="t" style="left:288px;top:1091.88px;font-size:15.5px;color:#f0f0f0;font-weight:400;letter-spacing:-0.550px;transform-origin:0 0;transform:scaleX(0.9333);">Cen</span>
<div style="left:324px;top:1092px;width:16px;height:15px;background:#5a5a5a;border:1px solid #7c7c7c;box-sizing:border-box;"></div>
<svg style="left:324px;top:1092px" width="16" height="15" viewBox="0 0 16 15"><path d="M2.800 7.800L7 12L14 1.800" fill="none" stroke="#fff" stroke-width="2.100"/></svg>
<span class="t" style="left:346px;top:1091.88px;font-size:15.5px;color:#f0f0f0;font-weight:400;letter-spacing:-0.078px;">Int</span>
<div style="left:374px;top:1092px;width:16px;height:15px;background:#5a5a5a;border:1px solid #7c7c7c;box-sizing:border-box;"></div>
<span class="t" style="left:396px;top:1091.88px;font-size:15.5px;color:#f0f0f0;font-weight:400;letter-spacing:-0.550px;transform-origin:0 0;transform:scaleX(0.9493);">Perp</span>
<div style="left:436px;top:1092px;width:16px;height:15px;background:#5a5a5a;border:1px solid #7c7c7c;box-sizing:border-box;"></div>
<span class="t" style="left:458px;top:1091.88px;font-size:15.5px;color:#f0f0f0;font-weight:400;letter-spacing:-0.550px;transform-origin:0 0;transform:scaleX(0.9422);">Tan</span>
<div style="left:491px;top:1092px;width:16px;height:15px;background:#5a5a5a;border:1px solid #7c7c7c;box-sizing:border-box;"></div>
<span class="t" style="left:513px;top:1091.88px;font-size:15.5px;color:#f0f0f0;font-weight:400;letter-spacing:-0.480px;">Quad</span>
<div style="left:560px;top:1092px;width:16px;height:15px;background:#5a5a5a;border:1px solid #7c7c7c;box-sizing:border-box;"></div>
<span class="t" style="left:582px;top:1091.88px;font-size:15.5px;color:#f0f0f0;font-weight:400;letter-spacing:-0.223px;">Knot</span>
<div style="left:624px;top:1092px;width:16px;height:15px;background:#5a5a5a;border:1px solid #7c7c7c;box-sizing:border-box;"></div>
<span class="t" style="left:646px;top:1091.88px;font-size:15.5px;color:#f0f0f0;font-weight:400;letter-spacing:-0.492px;">Vertex</span>
<div style="left:698px;top:1092px;width:16px;height:15px;background:#5a5a5a;border:1px solid #7c7c7c;box-sizing:border-box;"></div>
<span class="t" style="left:720px;top:1091.88px;font-size:15.5px;color:#f0f0f0;font-weight:400;letter-spacing:-0.321px;">Project</span>
<div style="left:787px;top:1092px;width:16px;height:15px;background:#5a5a5a;border:1px solid #7c7c7c;box-sizing:border-box;"></div>
<span class="t" style="left:809px;top:1091.88px;font-size:15.5px;color:#f0f0f0;font-weight:400;letter-spacing:-0.243px;">Disable</span>
<svg style="left:9px;top:1117px" width="18" height="17" viewBox="0 0 18 17"><rect x="1" y="1" width="15.500" height="15" fill="#333" stroke="#c4c4c4" stroke-width="2"/><rect x="0" y="0" width="5.500" height="17" fill="#c4c4c4"/></svg>
<span class="t" style="left:52px;top:1117.88px;font-size:15.5px;color:#b8b8b8;font-weight:400;letter-spacing:-0.550px;transform-origin:0 0;transform:scaleX(0.9675);">CPlane</span>
<span class="t" style="left:148px;top:1117.88px;font-size:15.5px;color:#b8b8b8;font-weight:400;letter-spacing:-0.252px;">x -2.436</span>
<span class="t" style="left:258px;top:1117.88px;font-size:15.5px;color:#b8b8b8;font-weight:400;letter-spacing:-0.550px;transform-origin:0 0;transform:scaleX(0.9998);">y 2.208</span>
<span class="t" style="left:379px;top:1117.88px;font-size:15.5px;color:#b8b8b8;font-weight:400;letter-spacing:-0.550px;transform-origin:0 0;transform:scaleX(0.9980);">z 0</span>
<span class="t" style="left:481px;top:1117.88px;font-size:15.5px;color:#b8b8b8;font-weight:400;letter-spacing:-0.445px;">Inches</span>
<div style="left:570px;top:1115px;width:20px;height:20px;background:#000;border:1.5px solid #c8c8c8;box-sizing:border-box;"></div>
<span class="t" style="left:597px;top:1117.88px;font-size:15.5px;color:#b8b8b8;font-weight:400;letter-spacing:0.135px;">joints</span>
<span class="t" style="left:818px;top:1117.88px;font-size:15.5px;color:#b8b8b8;font-weight:400;letter-spacing:-0.533px;">Grid Snap</span>
<span class="t" style="left:908px;top:1117.88px;font-size:15.5px;color:#b8b8b8;font-weight:400;letter-spacing:0.047px;">Ortho</span>
<span class="t" style="left:972px;top:1117.88px;font-size:15.5px;color:#b8b8b8;font-weight:400;letter-spacing:-0.550px;transform-origin:0 0;transform:scaleX(0.9877);">Planar</span>
<div style="left:1027px;top:1113px;width:64px;height:24px;background:#3e558f;border-radius:4px 4px 0 0;"></div>
<span class="t" style="left:1037px;top:1117.88px;font-size:15.5px;color:#fff;font-weight:700;letter-spacing:-0.550px;transform-origin:0 0;transform:scaleX(0.9894);">Osnap</span>
<span class="t" style="left:1107px;top:1117.88px;font-size:15.5px;color:#b8b8b8;font-weight:400;letter-spacing:-0.550px;transform-origin:0 0;transform:scaleX(0.9998);">SmartTrack</span>
<div style="left:1196px;top:1113px;width:141px;height:24px;background:#3e558f;border-radius:4px 4px 0 0;"></div>
<span class="t" style="left:1206px;top:1117.88px;font-size:15.5px;color:#fff;font-weight:700;letter-spacing:-0.449px;">Gumball (CPlane)</span>
<svg style="left:1347px;top:1116px" width="14" height="18" viewBox="0 0 14 18"><path d="M4 8V5.500a3 3 0 0 1 6 0V8" fill="none" stroke="#ddd" stroke-width="1.6"/><rect x="1.500" y="7.500" width="11" height="8.500" rx="1" fill="#ddd"/></svg>
<span class="t" style="left:1373px;top:1117.88px;font-size:15.5px;color:#b8b8b8;font-weight:400;letter-spacing:-0.373px;">Auto CPlane (Object)</span>
<div style="left:1528px;top:1113px;width:124px;height:24px;background:#3e558f;border-radius:4px 4px 0 0;"></div>
<span class="t" style="left:1538px;top:1117.88px;font-size:15.5px;color:#fff;font-weight:700;letter-spacing:-0.438px;">Record History</span>
<span class="t" style="left:1667px;top:1117.88px;font-size:15.5px;color:#b8b8b8;font-weight:400;letter-spacing:-0.242px;">Filter</span>
<span class="t" style="left:1727px;top:1117.88px;font-size:15.5px;color:#b8b8b8;font-weight:400;letter-spacing:-0.119px;">Minutes from last</span>
<svg style="left:1892px;top:1116px" width="19" height="19" viewBox="0 0 19 19"><rect x="1.5" y="1.5" width="16" height="16" fill="#333" stroke="#ccc" stroke-width="1.6"/><rect x="11" y="2" width="6" height="15" fill="#ccc"/></svg>
<svg style="left:0;top:146px" width="1200" height="40" viewBox="0 0 1200 40"><defs>
<linearGradient id="gPaper" x1="0" y1="0" x2="1" y2="1"><stop offset="0" stop-color="#ffffff"/><stop offset="1" stop-color="#c9c9c9"/></linearGradient>
<linearGradient id="gFold" x1="0" y1="0" x2="0" y2="1"><stop offset="0" stop-color="#fff3a0"/><stop offset="1" stop-color="#e2ad00"/></linearGradient>
<linearGradient id="gGray" x1="0" y1="0" x2="0" y2="1"><stop offset="0" stop-color="#f4f4f4"/><stop offset="1" stop-color="#8e8e8e"/></linearGradient>
<linearGradient id="gGrayH" x1="0" y1="0" x2="1" y2="0"><stop offset="0" stop-color="#ffffff"/><stop offset="1" stop-color="#9a9a9a"/></linearGradient>
<linearGradient id="gBlue" x1="0" y1="0" x2="1" y2="1"><stop offset="0" stop-color="#a9bcff"/><stop offset="1" stop-color="#3550d8"/></linearGradient>
<linearGradient id="gBlueV" x1="0" y1="0" x2="0" y2="1"><stop offset="0" stop-color="#9fb4ff"/><stop offset="1" stop-color="#3a55dc"/></linearGradient>
<radialGradient id="gSphW" cx=".38" cy=".32" r=".75"><stop offset="0" stop-color="#ffffff"/><stop offset=".6" stop-color="#d6d6d6"/><stop offset="1" stop-color="#777"/></radialGradient>
<radialGradient id="gSphB" cx=".38" cy=".3" r=".8"><stop offset="0" stop-color="#6f8bff"/><stop offset=".5" stop-color="#1d36c9"/><stop offset="1" stop-color="#060c4a"/></radialGradient>
<radialGradient id="gSphBl" cx=".4" cy=".3" r=".8"><stop offset="0" stop-color="#c5d2ff"/><stop offset=".55" stop-color="#5a78f0"/><stop offset="1" stop-color="#22349a"/></radialGradient>
<radialGradient id="gHelp" cx=".4" cy=".3" r=".8"><stop offset="0" stop-color="#7d93f5"/><stop offset=".6" stop-color="#2c3fc0"/><stop offset="1" stop-color="#151f78"/></radialGradient>
<radialGradient id="gGlobe" cx=".6" cy=".35" r=".8"><stop offset="0" stop-color="#b6f07a"/><stop offset=".6" stop-color="#56b52c"/><stop offset="1" stop-color="#1d5a10"/></radialGradient>
<radialGradient id="gBulb" cx=".4" cy=".3" r=".8"><stop offset="0" stop-color="#ffffff"/><stop offset=".55" stop-color="#bdbdbd"/><stop offset="1" stop-color="#6a6a6a"/></radialGradient>
<linearGradient id="gBeam" x1="1" y1="0" x2="0" y2="1"><stop offset="0" stop-color="#fff" stop-opacity=".95"/><stop offset="1" stop-color="#fff" stop-opacity="0"/></linearGradient>
<linearGradient id="gOr" x1="0" y1="0" x2="1" y2="1"><stop offset="0" stop-color="#ffd23a"/><stop offset="1" stop-color="#ff7a00"/></linearGradient>
<filter id="fBlur2" x="-30%" y="-30%" width="160%" height="160%"><feGaussianBlur stdDeviation="1.800"/></filter>
</defs><g transform="translate(16.2,1.700) scale(.97) translate(.45,.45)"><path d="M6 2.5H18.5L24.5 8.5V28H6Z" fill="none" stroke="#5c5c5c" stroke-width="3.1" stroke-linejoin="round"/><path d="M6 2.5H18.5L24.5 8.5V28H6Z" fill="url(#gPaper)" stroke="#141414" stroke-width="1.5" stroke-linejoin="round" /><path d="M18.500 2.500V8.500H24.500" fill="#e8e8e8" stroke="#141414" stroke-width="1.2"/></g><g transform="translate(51.2,1.700) scale(.97) translate(.45,.45)"><path d="M3 25.500V9.500H10.500L12.500 12H24V15" fill="none" stroke="#5c5c5c" stroke-width="3.1" stroke-linejoin="round"/><path d="M3 25.500V9.500H10.500L12.500 12H24V15" fill="#caa21e" stroke="#141414" stroke-width="1.5" stroke-linejoin="round" /><path d="M2.500 26L7.500 15H29L24 26Z" fill="none" stroke="#5c5c5c" stroke-width="3.1" stroke-linejoin="round"/><path d="M2.500 26L7.500 15H29L24 26Z" fill="url(#gFold)" stroke="#141414" stroke-width="1.5" stroke-linejoin="round" /><path d="M6 24.500L9.500 21.500H25" stroke="#b98a00" stroke-width=".8" fill="none" stroke-dasharray="1.200 1.200"/></g><g transform="translate(86.3,1.700) scale(.97) translate(.45,.45)"><rect x="1.700" y="1.600" width="26.600" height="26.800" rx="3" fill="#3a3a3a" stroke="#6e6e6e" stroke-width="1.200"/><path d="M4.500 3.500H25.500V26.500H7L4.500 24Z" fill="none" stroke="#5c5c5c" stroke-width="2.8" stroke-linejoin="round"/><path d="M4.500 3.500H25.500V26.500H7L4.500 24Z" fill="#c9b25e" stroke="#141414" stroke-width="1.2" stroke-linejoin="round" /><rect x="8" y="3.800" width="14" height="9.500" fill="url(#gGray)" stroke="#8b7a3a" stroke-width=".7"/><rect x="9.500" y="17" width="11.500" height="9.300" fill="#d9d9d9" stroke="#7a6a2c" stroke-width=".7"/><rect x="11" y="18.500" width="4" height="6.500" fill="#a08a3c"/><rect x="5.300" y="4.300" width="1.500" height="1.500" fill="#e05a3a"/><rect x="23.200" y="4.300" width="1.500" height="1.500" fill="#e05a3a"/><path d="M17.300 12V18H10.600Z" fill="#7a7a7a" transform="translate(15,15)"/></g><g transform="translate(121.3,1.700) scale(.97) translate(.45,.45)"><path d="M9 13L11.500 3.500H24.500L21 13Z" fill="none" stroke="#5c5c5c" stroke-width="2.9000000000000004" stroke-linejoin="round"/><path d="M9 13L11.500 3.500H24.500L21 13Z" fill="url(#gPaper)" stroke="#141414" stroke-width="1.3" stroke-linejoin="round" /><path d="M13.500 6.500L17 5.500L19.500 7V10L16 11L13.500 9.500Z" fill="#bdbdbd" stroke="#888" stroke-width=".5"/><path d="M3 16L7 12.500H24L27.500 15.500V19H3Z" fill="none" stroke="#5c5c5c" stroke-width="2.9000000000000004" stroke-linejoin="round"/><path d="M3 16L7 12.500H24L27.500 15.500V19H3Z" fill="#dcdcdc" stroke="#141414" stroke-width="1.3" stroke-linejoin="round" /><path d="M3.500 19H27V22.500H3.500Z" fill="none" stroke="#5c5c5c" stroke-width="2.8" stroke-linejoin="round"/><path d="M3.500 19H27V22.500H3.500Z" fill="#9a9a9a" stroke="#141414" stroke-width="1.2" stroke-linejoin="round" /><path d="M4.500 22.500H26V26.500H4.500Z" fill="none" stroke="#5c5c5c" stroke-width="2.8" stroke-linejoin="round"/><path d="M4.500 22.500H26V26.500H4.500Z" fill="#e9e9e9" stroke="#141414" stroke-width="1.2" stroke-linejoin="round" /><path d="M5 24.500H25.500" stroke="#555" stroke-width="1"/></g><g transform="translate(156.3,1.700) scale(.97) translate(.45,.45)"><path d="M5 5.500H21.500V22L16.500 27.500H5Z" fill="none" stroke="#5c5c5c" stroke-width="3.1" stroke-linejoin="round"/><path d="M5 5.500H21.500V22L16.500 27.500H5Z" fill="url(#gPaper)" stroke="#141414" stroke-width="1.5" stroke-linejoin="round" /><path d="M21.500 22H16.500V27.500" fill="#cfcfcf" stroke="#141414" stroke-width="1.1"/><rect x="23.500" y="1.500" width="4.500" height="7.500" fill="#0c0c0c" stroke="#555" stroke-width=".6"/><path d="M12.500 8.500L17 3.500Q19 2 21 3L24 3.500V8L20.500 9L17.500 12.500Q16.500 13 16 12L14.500 12.500L13.500 11.500Z" fill="none" stroke="#5c5c5c" stroke-width="2.6" stroke-linejoin="round"/><path d="M12.500 8.500L17 3.500Q19 2 21 3L24 3.500V8L20.500 9L17.500 12.500Q16.500 13 16 12L14.500 12.500L13.500 11.500Z" fill="#f6f6f6" stroke="#141414" stroke-width="1" stroke-linejoin="round" /><path d="M14 10L17.500 6M15.500 11L19 7M17 12L20.200 8.200" stroke="#555" stroke-width=".7"/></g><g transform="translate(191.3,1.700) scale(.97) translate(.45,.45)"><path d="M9.500 3L16.500 17M20.500 3L13.500 17" stroke="#5c5c5c" stroke-width="3.600" stroke-linecap="round"/><path d="M9.500 3L16.800 17.500M20.500 3L13.200 17.500" stroke="#f4f4f4" stroke-width="2" stroke-linecap="round"/><path d="M15 13.500L13 17.500" stroke="#7aa2ff" stroke-width="1.500"/><ellipse cx="10.500" cy="22" rx="2.600" ry="4.300" transform="rotate(28 10.500 22)" fill="none" stroke="#2f63e0" stroke-width="1.700"/><ellipse cx="19.500" cy="22" rx="2.600" ry="4.300" transform="rotate(-28 19.500 22)" fill="none" stroke="#2f63e0" stroke-width="1.700"/><circle cx="15" cy="15" r="1" fill="#3d6fe8"/></g><g transform="translate(226.4,1.700) scale(.97) translate(.45,.45)"><path d="M5.500 3.500H14.500L18 7V20H5.500Z" fill="none" stroke="#5c5c5c" stroke-width="3.1" stroke-linejoin="round"/><path d="M5.500 3.500H14.500L18 7V20H5.500Z" fill="url(#gPaper)" stroke="#141414" stroke-width="1.5" stroke-linejoin="round" /><path d="M11.500 10H20.500L24.500 14V27.500H11.500Z" fill="none" stroke="#5c5c5c" stroke-width="3.1" stroke-linejoin="round"/><path d="M11.500 10H20.500L24.500 14V27.500H11.500Z" fill="url(#gPaper)" stroke="#141414" stroke-width="1.5" stroke-linejoin="round" /><path d="M20.500 10V14H24.500" fill="#e4e4e4" stroke="#141414" stroke-width="1"/></g><g transform="translate(261.4,1.700) scale(.97) translate(.45,.45)"><path d="M7 5H23.500Q25 5 25 6.500V25.500Q25 27 23.500 27H7Q5.500 27 5.500 25.500V6.500Q5.500 5 7 5Z" fill="none" stroke="#5c5c5c" stroke-width="3.4000000000000004" stroke-linejoin="round"/><path d="M7 5H23.500Q25 5 25 6.500V25.500Q25 27 23.500 27H7Q5.500 27 5.500 25.500V6.500Q5.500 5 7 5Z" fill="#ffd76a" stroke="#141414" stroke-width="1.8" stroke-linejoin="round" /><path d="M10.500 3.500H20V6.500Q20 7.500 19 7.500H11.500Q10.500 7.500 10.500 6.500Z" fill="#fafafa" stroke="#141414" stroke-width="1.200"/><path d="M8 24.500H22.500" stroke="#d9a93a" stroke-width="1" stroke-dasharray="1 1.500"/></g><g transform="translate(296.4,1.700) scale(.97) translate(.45,.45)"><path d="M2.500 18.200L9.100 9.300L10.900 11.100Q20 4.500 27.300 12.500L24.100 15.400Q19 10.500 12.300 14L13.300 16.300Z" fill="none" stroke="#5c5c5c" stroke-width="2.5" stroke-linejoin="round"/><path d="M2.500 18.200L9.100 9.300L10.900 11.100Q20 4.500 27.300 12.500L24.100 15.400Q19 10.500 12.300 14L13.300 16.300Z" fill="url(#gGrayH)" stroke="#141414" stroke-width="0.9" stroke-linejoin="round" /><path d="M11.500 11.500Q20 6 26.500 12.800" stroke="#fff" stroke-width=".9" fill="none"/><path d="M17.300 12V18H10.600Z" fill="#7a7a7a" transform="translate(15,15)"/></g><g transform="translate(331.5,1.700) scale(.97) translate(.45,.45)"><g transform="translate(-2.600,-3.200) scale(1.170)"><path d="M9.500 27.500L5 19Q3.500 16.500 5 15.500Q6.500 15 8 17L10 19.500V7Q10 5.200 11.500 5.200Q13 5.200 13 7V4.500Q13 2.800 14.600 2.800Q16.200 2.800 16.200 4.500V6Q16.200 4.200 17.800 4.200Q19.400 4.200 19.400 6V8.500Q19.400 6.800 20.900 6.800Q22.400 6.800 22.400 8.500V19Q22.400 23 20 27.500Z" fill="none" stroke="#5c5c5c" stroke-width="3.1" stroke-linejoin="round"/><path d="M9.500 27.500L5 19Q3.500 16.500 5 15.500Q6.500 15 8 17L10 19.500V7Q10 5.200 11.500 5.200Q13 5.200 13 7V4.500Q13 2.800 14.600 2.800Q16.200 2.800 16.200 4.500V6Q16.200 4.200 17.800 4.200Q19.400 4.200 19.400 6V8.500Q19.400 6.800 20.900 6.800Q22.400 6.800 22.400 8.500V19Q22.400 23 20 27.500Z" fill="#fbfbfb" stroke="#141414" stroke-width="1.5" stroke-linejoin="round" /><path d="M13 7V14M16.200 6V14M19.400 8.500V14.500" stroke="#666" stroke-width="1"/></g></g><g transform="translate(366.5,1.700) scale(.97) translate(.45,.45)"><g fill="none" stroke="#b9b9b9" stroke-width="1.100"><ellipse cx="15" cy="15" rx="4.200" ry="13.500"/><ellipse cx="15" cy="15.800" rx="13.500" ry="4.200"/></g><path d="M18.800 9L21.600 15.200H16Z M8.600 18.700L14 16.500V20.900Z" fill="#fff" stroke="#555" stroke-width=".5"/><path d="M18.800 15V21M14 18.700H20.500" stroke="#e8e8e8" stroke-width="1.300"/></g><g transform="translate(401.5,1.700) scale(.97) translate(.45,.45)"><path d="M12.2 16.8L4 26" stroke="#5c5c5c" stroke-width="4.2" stroke-linecap="round"/><circle cx="18" cy="11" r="8.3" fill="none" stroke="#5c5c5c" stroke-width="3.2"/><path d="M12.2 16.8L4 26" stroke="#efefef" stroke-width="2.4" stroke-linecap="round"/><circle cx="18" cy="11" r="8.3" fill="#333" fill-opacity=".0" stroke="#efefef" stroke-width="1.5"/><path d="M14 9.500H22M18 5.500V13.500M14.500 16H21.500" stroke="#f2f2f2" stroke-width="1.500" transform="translate(0,-1.500)"/></g><g transform="translate(436.6,1.700) scale(.97) translate(.45,.45)"><path d="M7.8 21.2L3.5 27" stroke="#5c5c5c" stroke-width="4.2" stroke-linecap="round"/><circle cx="13" cy="16" r="7.5" fill="none" stroke="#5c5c5c" stroke-width="3.2"/><path d="M7.8 21.2L3.5 27" stroke="#efefef" stroke-width="2.4" stroke-linecap="round"/><circle cx="13" cy="16" r="7.5" fill="#333" fill-opacity=".0" stroke="#efefef" stroke-width="1.5"/><rect x="9" y="2.500" width="19" height="17" fill="none" stroke="#e8e8e8" stroke-width="1.300" stroke-dasharray="2.600 1.800"/></g><g transform="translate(471.6,1.700) scale(.97) translate(.45,.45)"><path d="M10.1 18.4L5.5 24.5" stroke="#5c5c5c" stroke-width="4.2" stroke-linecap="round"/><circle cx="16" cy="12.5" r="8.5" fill="none" stroke="#5c5c5c" stroke-width="3.2"/><path d="M10.1 18.4L5.5 24.5" stroke="#efefef" stroke-width="2.4" stroke-linecap="round"/><circle cx="16" cy="12.5" r="8.5" fill="#333" fill-opacity=".0" stroke="#efefef" stroke-width="1.5"/><path d="M2 2H8.500L2 8.500Z M28 2V8.500L21.500 2Z M2 28V21.500L8.500 28Z M28 28H21.500L28 21.500Z" fill="#e4e4e4" stroke="#555" stroke-width=".5"/></g><g transform="translate(506.6,1.700) scale(.97) translate(.45,.45)"><path d="M10.9 19.1L4.5 26" stroke="#5c5c5c" stroke-width="4.2" stroke-linecap="round"/><circle cx="17.5" cy="12.5" r="9.5" fill="none" stroke="#5c5c5c" stroke-width="3.2"/><path d="M10.9 19.1L4.5 26" stroke="#efefef" stroke-width="2.4" stroke-linecap="round"/><circle cx="17.5" cy="12.5" r="9.5" fill="#333" fill-opacity=".0" stroke="#efefef" stroke-width="1.5"/><circle cx="17.500" cy="12.500" r="7.800" fill="#1c1c1c"/><circle cx="20" cy="10" r="4" fill="#ffd800" stroke="#8a6d00" stroke-width=".6"/><circle cx="15.500" cy="15" r="4" fill="#ffd800" stroke="#8a6d00" stroke-width=".6"/></g><g transform="translate(541.7,1.700) scale(.97) translate(.45,.45)"><path d="M2 12.500L8.600 3.600L10.400 5.400Q19.500 -1.200 26.800 6.800L23.600 9.700Q18.500 4.800 11.800 8.300L12.800 10.600Z" fill="none" stroke="#5c5c5c" stroke-width="2.5" stroke-linejoin="round"/><path d="M2 12.500L8.600 3.600L10.400 5.400Q19.500 -1.200 26.800 6.800L23.600 9.700Q18.500 4.800 11.800 8.300L12.800 10.600Z" fill="url(#gGrayH)" stroke="#141414" stroke-width="0.9" stroke-linejoin="round" /><path d="M12.3 21.7L7.5 28" stroke="#5c5c5c" stroke-width="4.2" stroke-linecap="round"/><circle cx="16.5" cy="17.5" r="6" fill="none" stroke="#5c5c5c" stroke-width="3.2"/><path d="M12.3 21.7L7.5 28" stroke="#efefef" stroke-width="2.4" stroke-linecap="round"/><circle cx="16.5" cy="17.5" r="6" fill="#333" fill-opacity=".0" stroke="#efefef" stroke-width="1.5"/><path d="M17.300 12V18H10.600Z" fill="#7a7a7a" transform="translate(15,15)"/></g><g transform="translate(576.7,1.700) scale(.97) translate(.45,.45)"><rect x="1.500" y="1.500" width="27" height="25" rx="1.500" fill="#0d0d0d" stroke="#666" stroke-width="1"/><rect x="3" y="3.500" width="11" height="9.500" fill="#d6d6d6"/><rect x="16" y="3.500" width="11" height="9.500" fill="#d6d6d6"/><rect x="3" y="15.500" width="11" height="9.500" fill="#d6d6d6"/><rect x="16" y="15.500" width="11" height="9.500" fill="#d6d6d6"/><rect x="16" y="2.800" width="5" height="1.300" fill="#2a4fe0"/><path d="M3 4.500H14M3 16.500H14M16 16.500H27" stroke="#f3f3f3" stroke-width="1"/><path d="M17.300 12V18H10.600Z" fill="#7a7a7a" transform="translate(15,15)"/></g><g transform="translate(611.7,1.700) scale(.97) translate(.45,.45)"><path d="M1.500 21H29.500" stroke="#8a8a8a" stroke-width="1.200"/><g transform="translate(1.500,2.300) scale(.86)"><path d="M2.500 19.500V15.500Q3 13.500 6 13L10 12.500L13 8.500Q13.500 8 15 8H23Q24.500 8 25 9L26.500 13Q27.500 14 27.500 16V19.500Z" fill="none" stroke="#5c5c5c" stroke-width="2.5" stroke-linejoin="round"/><path d="M2.500 19.500V15.500Q3 13.500 6 13L10 12.500L13 8.500Q13.500 8 15 8H23Q24.500 8 25 9L26.500 13Q27.500 14 27.500 16V19.500Z" fill="#e31515" stroke="#141414" stroke-width="0.9" stroke-linejoin="round" /><path d="M11.500 12.500L13.800 9.300H18V12.500ZM19 9.300H23.300L24.800 12.500H19Z" fill="#fbeaea"/><circle cx="8" cy="19.500" r="2.700" fill="#1a1a1a" stroke="#e6e6e6" stroke-width="1.100"/><circle cx="22" cy="19.500" r="2.700" fill="#1a1a1a" stroke="#e6e6e6" stroke-width="1.100"/></g><path d="M17.300 12V18H10.600Z" fill="#7a7a7a" transform="translate(15,15)"/></g><g transform="translate(646.7,1.700) scale(.97) translate(.45,.45)"><path d="M10.4 9.1L0.6 21.5M10.4 9.1L28.0 14.3M14.8 10.4L5.6 23.3M8.0 12.2L26.2 17.9M19.2 11.7L10.7 25.1M5.5 15.3L24.4 21.5M23.6 13.0L15.7 26.8M3.0 18.4L22.6 25.0M28.0 14.3L20.8 28.6M0.6 21.5L20.8 28.6" stroke="#9a9a9a" stroke-width=".9" fill="none"/><path d="M15.600 17.600L18.200 11.700" stroke="#19b219" stroke-width="2"/><path d="M15.600 17.600L24.700 20.800" stroke="#e01818" stroke-width="2"/><rect x="12.0" y="15.3" width="4.6" height="4.6" fill="#2b2b2b" stroke="#f2f2f2" stroke-width="1.2"/><path d="M17.300 12V18H10.600Z" fill="#7a7a7a" transform="translate(15,15)"/></g><g transform="translate(681.8,1.700) scale(.97) translate(.45,.45)"><circle cx="12.500" cy="15" r="11.200" fill="none" stroke="#cfcfcf" stroke-width="1.100"/><path d="M13 15.500H27.500" stroke="#f2f2f2" stroke-width="1.300"/><rect x="10.3" y="13.3" width="4.4" height="4.4" fill="#2b2b2b" stroke="#f2f2f2" stroke-width="1.2"/><path d="M17.300 12V18H10.600Z" fill="#7a7a7a" transform="translate(15,15)"/></g><g transform="translate(716.8,1.700) scale(.97) translate(.45,.45)"><circle cx="9" cy="10.500" r="4.300" fill="#ffd800" stroke="#a87c00" stroke-width=".8"/><rect x="15" y="8.500" width="8.600" height="8.600" fill="#ffd800" stroke="#a87c00" stroke-width=".8"/><path d="M11.500 18L15.500 25.500H7.500Z" fill="none" stroke="#c8641a" stroke-width="1.300"/><path d="M24 2.500H28V6.500M2.500 24V28H6.500" fill="none" stroke="#e6e6e6" stroke-width="1.300"/><path d="M17.300 12V18H10.600Z" fill="#7a7a7a" transform="translate(15,15)"/></g><g transform="translate(751.8,1.700) scale(.97) translate(.45,.45)"><g transform="translate(-1.800,-2.300) scale(1.120)"><path d="M15 2Q23.500 2 23.500 10.500Q23.500 14 20.500 17.500Q19 19.500 19 22.500H11Q11 19.500 9.500 17.500Q6.500 14 6.500 10.500Q6.500 2 15 2Z" fill="none" stroke="#5c5c5c" stroke-width="2.8" stroke-linejoin="round"/><path d="M15 2Q23.500 2 23.500 10.500Q23.500 14 20.500 17.500Q19 19.500 19 22.500H11Q11 19.500 9.500 17.500Q6.500 14 6.500 10.500Q6.500 2 15 2Z" fill="url(#gBulb)" stroke="#141414" stroke-width="1.2" stroke-linejoin="round" /><path d="M11.500 22.500H18.500V26L17 28H13L11.500 26Z" fill="none" stroke="#5c5c5c" stroke-width="2.6" stroke-linejoin="round"/><path d="M11.500 22.500H18.500V26L17 28H13L11.500 26Z" fill="#f2f2f2" stroke="#141414" stroke-width="1" stroke-linejoin="round" /><path d="M11.500 24.500H18.500" stroke="#666" stroke-width=".8"/></g><path d="M17.300 12V18H10.600Z" fill="#7a7a7a" transform="translate(15,15)"/></g><g transform="translate(786.9,1.700) scale(.97) translate(.45,.45)"><path d="M10.500 15V10Q10.500 5.500 15 5.500Q19.500 5.500 19.500 10V15" fill="none" stroke="#0e0e0e" stroke-width="4.400"/><path d="M10.500 15V10Q10.500 5.500 15 5.500Q19.500 5.500 19.500 10V15" fill="none" stroke="#6e6e6e" stroke-width="1.600"/><path d="M7.500 12.500H22.500Q23.500 12.500 23.500 13.500V24Q23.500 25 22.500 25H7.500Q6.500 25 6.500 24V13.500Q6.500 12.500 7.500 12.500Z" fill="none" stroke="#5c5c5c" stroke-width="2.9000000000000004" stroke-linejoin="round"/><path d="M7.500 12.500H22.500Q23.500 12.500 23.500 13.500V24Q23.500 25 22.500 25H7.500Q6.500 25 6.500 24V13.500Q6.500 12.500 7.500 12.500Z" fill="url(#gGray)" stroke="#141414" stroke-width="1.3" stroke-linejoin="round" /><rect x="9.500" y="15" width="11" height="2.200" fill="#efefef" stroke="#777" stroke-width=".4"/><rect x="9.500" y="19" width="11" height="2.200" fill="#efefef" stroke="#777" stroke-width=".4"/><path d="M17.300 12V18H10.600Z" fill="#7a7a7a" transform="translate(15,15)"/></g><g transform="translate(821.9,1.700) scale(.97) translate(.45,.45)"><g transform="translate(1.500,1.500) scale(1.400)"><path d="M1.300 2L17.200 5.500V13L9.300 18.300L1.300 9.800Z" fill="#111" stroke="#5c5c5c" stroke-width="2.400" stroke-linejoin="round"/><path d="M1.300 2L17.200 5.500V13L9.300 18.300L1.300 9.800Z" fill="#111" stroke="#111" stroke-width="1.100" stroke-linejoin="round"/><path d="M1.300 2L8.700 10.200L9.300 18.300L1.300 9.800Z" fill="#3c5fe0"/><path d="M1.300 2L8.700 10.200L9.100 15.600L1.300 7.300Z" fill="#fafafa"/><path d="M1.300 2L8.700 10.200L8.900 12.900L1.300 4.600Z" fill="#ff6a1a"/><path d="M8.700 10.200L17.200 5.500V13L9.300 18.300Z" fill="#2540b5"/><path d="M8.700 10.200L17.200 5.500V10.500L9.100 15.600Z" fill="#e8e8e8"/><path d="M8.700 10.200L17.200 5.500V8L8.900 12.900Z" fill="#e2241a"/><path d="M1.300 2L17.200 5.500L8.700 10.200Z" fill="#ff9a6e"/><path d="M3.500 3.100L15 5.700" stroke="#ffc9ad" stroke-width="1" fill="none"/></g><path d="M17.300 12V18H10.600Z" fill="#7a7a7a" transform="translate(15,15)"/></g><g transform="translate(856.9,1.700) scale(.97) translate(.45,.45)"><circle cx="15" cy="15" r="9.500" fill="none" stroke="#0a0a0a" stroke-width="7.600"/><path d="M15.00 2.90L18.36 3.38L16.92 8.37L15.00 8.10Z" fill="hsl(0,100%,50%)"/><path d="M18.13 3.31L21.26 4.64L18.57 9.09L16.79 8.34Z" fill="hsl(15,100%,50%)"/><path d="M21.05 4.52L23.73 6.62L19.98 10.22L18.45 9.02Z" fill="hsl(30,100%,50%)"/><path d="M23.56 6.44L25.60 9.16L21.04 11.67L19.88 10.12Z" fill="hsl(45,100%,50%)"/><path d="M25.48 8.95L26.75 12.10L21.70 13.35L20.98 11.55Z" fill="hsl(60,100%,50%)"/><path d="M26.69 11.87L27.10 15.24L21.90 15.14L21.66 13.21Z" fill="hsl(75,100%,50%)"/><path d="M27.10 15.00L26.62 18.36L21.63 16.92L21.90 15.00Z" fill="hsl(90,100%,50%)"/><path d="M26.69 18.13L25.36 21.26L20.91 18.57L21.66 16.79Z" fill="hsl(105,100%,50%)"/><path d="M25.48 21.05L23.38 23.73L19.78 19.98L20.98 18.45Z" fill="hsl(120,100%,50%)"/><path d="M23.56 23.56L20.84 25.60L18.33 21.04L19.88 19.88Z" fill="hsl(135,100%,50%)"/><path d="M21.05 25.48L17.90 26.75L16.65 21.70L18.45 20.98Z" fill="hsl(150,100%,50%)"/><path d="M18.13 26.69L14.76 27.10L14.86 21.90L16.79 21.66Z" fill="hsl(165,100%,50%)"/><path d="M15.00 27.10L11.64 26.62L13.08 21.63L15.00 21.90Z" fill="hsl(180,100%,50%)"/><path d="M11.87 26.69L8.74 25.36L11.43 20.91L13.21 21.66Z" fill="hsl(195,100%,50%)"/><path d="M8.95 25.48L6.27 23.38L10.02 19.78L11.55 20.98Z" fill="hsl(210,100%,50%)"/><path d="M6.44 23.56L4.40 20.84L8.96 18.33L10.12 19.88Z" fill="hsl(225,100%,50%)"/><path d="M4.52 21.05L3.25 17.90L8.30 16.65L9.02 18.45Z" fill="hsl(240,100%,50%)"/><path d="M3.31 18.13L2.90 14.76L8.10 14.86L8.34 16.79Z" fill="hsl(255,100%,50%)"/><path d="M2.90 15.00L3.38 11.64L8.37 13.08L8.10 15.00Z" fill="hsl(270,100%,50%)"/><path d="M3.31 11.87L4.64 8.74L9.09 11.43L8.34 13.21Z" fill="hsl(285,100%,50%)"/><path d="M4.52 8.95L6.62 6.27L10.22 10.02L9.02 11.55Z" fill="hsl(300,100%,50%)"/><path d="M6.44 6.44L9.16 4.40L11.67 8.96L10.12 10.12Z" fill="hsl(315,100%,50%)"/><path d="M8.95 4.52L12.10 3.25L13.35 8.30L11.55 9.02Z" fill="hsl(330,100%,50%)"/><path d="M11.87 3.31L15.24 2.90L15.14 8.10L13.21 8.34Z" fill="hsl(345,100%,50%)"/><path d="M17.300 12V18H10.600Z" fill="#7a7a7a" transform="translate(15,15)"/></g><g transform="translate(892.0,1.700) scale(.97) translate(.45,.45)"><circle cx="15" cy="15" r="12.600" fill="#0e0e0e"/><circle cx="15" cy="15" r="11.300" fill="url(#gSphW)"/><path d="M15 3.700Q9.500 15 15 26.300M3.800 15.500Q15 20.500 26.200 15.500" fill="none" stroke="#111" stroke-width="1.400"/></g><g transform="translate(927.0,1.700) scale(.97) translate(.45,.45)"><g stroke="#c4c4c4" stroke-width="1.200"><path d="M1.2 0.500V29.500M0.500 1.2H29.500"/><path d="M6.1 0.500V29.500M0.500 6.1H29.500"/><path d="M11 0.500V29.500M0.500 11H29.500"/><path d="M15.9 0.500V29.500M0.500 15.9H29.500"/><path d="M20.8 0.500V29.500M0.500 20.8H29.500"/><path d="M25.7 0.500V29.500M0.500 25.7H29.500"/></g><circle cx="15" cy="15" r="12.600" fill="#0e0e0e"/><circle cx="15" cy="15" r="11.300" fill="url(#gSphW)"/><path d="M15 3.700Q9.500 15 15 26.300M3.800 15.500Q15 20.500 26.200 15.500" fill="none" stroke="#111" stroke-width="1.400"/><path d="M17.300 12V18H10.600Z" fill="#7a7a7a" transform="translate(15,15)"/></g><g transform="translate(962.0,1.700) scale(.97) translate(.45,.45)"><ellipse cx="15" cy="24.500" rx="13" ry="4" fill="#0a0a0a" opacity=".7"/><circle cx="15" cy="14" r="12.500" fill="#0b0b0b"/><circle cx="15" cy="14" r="11" fill="url(#gSphB)"/><ellipse cx="11.500" cy="8.500" rx="3.300" ry="2.200" fill="#fff" opacity=".9" transform="rotate(-30 11.500 8.500)"/><path d="M18 21L22 17.500" stroke="#cfd9ff" stroke-width="1.600" stroke-linecap="round"/><path d="M17.300 12V18H10.600Z" fill="#7a7a7a" transform="translate(15,15)"/></g><g transform="translate(997.0,1.700) scale(.97) translate(.45,.45)"><g filter="url(#fBlur2)"><ellipse cx="9" cy="19" rx="9" ry="5.500" transform="rotate(-42 9 19)" fill="#fff" opacity=".85"/><ellipse cx="14" cy="14.500" rx="5" ry="4" transform="rotate(-42 14 14.500)" fill="#fff"/></g><path d="M13 6.500L28.500 2.500L23.500 16Z" fill="none" stroke="#5c5c5c" stroke-width="2.8" stroke-linejoin="round"/><path d="M13 6.500L28.500 2.500L23.500 16Z" fill="url(#gOr)" stroke="#141414" stroke-width="1.2" stroke-linejoin="round" /><path d="M13 6.500Q15.500 13.500 23.500 16Q19 16.500 15.500 13Q12.500 10 13 6.500Z" fill="#fff1dc" stroke="#141414" stroke-width=".9"/><path d="M17.300 12V18H10.600Z" fill="#7a7a7a" transform="translate(15,15)"/></g><g transform="translate(1032.1,1.700) scale(.97) translate(.45,.45)"><path d="M23.88 13.75L27.94 13.88L27.94 19.12L23.88 19.25L23.23 20.84L26.00 23.79L22.29 27.50L19.34 24.73L17.75 25.38L17.62 29.44L12.38 29.44L12.25 25.38L10.66 24.73L7.71 27.50L4.00 23.79L6.77 20.84L6.12 19.25L2.06 19.12L2.06 13.88L6.12 13.75L6.77 12.16L4.00 9.21L7.71 5.50L10.66 8.27L12.25 7.62L12.38 3.56L17.62 3.56L17.75 7.62L19.34 8.27L22.29 5.50L26.00 9.21L23.23 12.16Z" fill="none" stroke="#5c5c5c" stroke-width="2.9000000000000004" stroke-linejoin="round"/><path d="M23.88 13.75L27.94 13.88L27.94 19.12L23.88 19.25L23.23 20.84L26.00 23.79L22.29 27.50L19.34 24.73L17.75 25.38L17.62 29.44L12.38 29.44L12.25 25.38L10.66 24.73L7.71 27.50L4.00 23.79L6.77 20.84L6.12 19.25L2.06 19.12L2.06 13.88L6.12 13.75L6.77 12.16L4.00 9.21L7.71 5.50L10.66 8.27L12.25 7.62L12.38 3.56L17.62 3.56L17.75 7.62L19.34 8.27L22.29 5.50L26.00 9.21L23.23 12.16Z" fill="#f0c040" stroke="#141414" stroke-width="1.3" stroke-linejoin="round" /><circle cx="15" cy="16.500" r="5.600" fill="#2c2c2c" stroke="#141414" stroke-width="1"/><path d="M9 13L12 11M21 13L18 11M9 20L12 22M21 20L18 22" stroke="#b58a1c" stroke-width="1"/><rect x="12.300" y="8.500" width="5.400" height="10.500" rx="2" fill="url(#gGrayH)" stroke="#333" stroke-width=".700"/><ellipse cx="15" cy="9.300" rx="2.700" ry="1.300" fill="#f4f4f4" stroke="#555" stroke-width=".500"/><path d="M17.300 12V18H10.600Z" fill="#7a7a7a" transform="translate(15,15)"/></g><g transform="translate(1067.1,1.700) scale(.97) translate(.45,.45)"><g fill="none" stroke="#ececec" stroke-width="1.300"><path d="M3 3.500H13.500M3 14H13.500M13 15.500V27.500M24.500 15.500V27.500M6.500 5.500V12M15.500 24.500H22.500"/><path d="M5 7L6.500 5L8 7M5 10.500L6.500 12.500L8 10.500M17 23L15.200 24.500L17 26M21 23L22.800 24.500L21 26" stroke-width="1"/></g><rect x="12.1" y="1.6" width="3.8" height="3.8" fill="#2b2b2b" stroke="#f2f2f2" stroke-width="1.2"/><rect x="12.1" y="12.1" width="3.8" height="3.8" fill="#2b2b2b" stroke="#f2f2f2" stroke-width="1.2"/><rect x="22.6" y="12.1" width="3.8" height="3.8" fill="#2b2b2b" stroke="#f2f2f2" stroke-width="1.2"/><path d="M17.300 12V18H10.600Z" fill="#7a7a7a" transform="translate(15,15)"/></g><g transform="translate(1102.1,1.700) scale(.97) translate(.45,.45)"><circle cx="15" cy="15" r="13.300" fill="#0a0a0a"/><circle cx="15" cy="15" r="11.800" fill="url(#gGlobe)"/><path d="M15 3.200Q20 9 19 15M8 6Q15 10 26.500 12M19 15Q24 18 25.500 20" fill="none" stroke="#2a7a1a" stroke-width="1"/><path d="M3.800 12Q9 12.500 12 17Q14.500 21 21.500 22.500L19 25.500Q14 27.500 9 25Q4 21 3.800 12Z" fill="#0a0a0a"/><path d="M13 22.500Q17 24.500 21 23" stroke="#8be04a" stroke-width="1.300" fill="none"/><path d="M17.300 12V18H10.600Z" fill="#7a7a7a" transform="translate(15,15)"/></g><g transform="translate(1137.2,1.700) scale(.97) translate(.45,.45)"><circle cx="15" cy="15" r="12.800" fill="url(#gHelp)"/><text x="15" y="24" text-anchor="middle" font-family="Liberation Serif, serif" font-weight="700" font-size="25" fill="#fff">?</text><path d="M17.300 12V18H10.600Z" fill="#7a7a7a" transform="translate(15,15)"/></g></svg>
<svg style="left:0;top:224px" width="150" height="360" viewBox="0 224 150 360"><g transform="translate(3.7,226.6)"><path d="M8.500 3V23L13 18.800L16.500 26.500L19.500 25L16 17.500L22 17Z" fill="none" stroke="#5c5c5c" stroke-width="2.9000000000000004" stroke-linejoin="round"/><path d="M8.500 3V23L13 18.800L16.500 26.500L19.500 25L16 17.500L22 17Z" fill="#ffffff" stroke="#141414" stroke-width="1.3" stroke-linejoin="round" /></g><g transform="translate(38.7,226.6)"><circle cx="15" cy="15" r="3.600" fill="#141414" stroke="#5c5c5c" stroke-width="1"/><circle cx="15" cy="15" r="2.100" fill="#fff"/><path d="M33.200 27V33.200H26.600Z" fill="#7a7a7a"/></g><g transform="translate(73.7,226.6)"><path d="M6.600 23.700L12.600 7.900L24.200 20.200" stroke="#ececec" stroke-width="1.2" fill="none"/><rect x="4.4" y="21.5" width="4.4" height="4.4" fill="#2b2b2b" stroke="#f2f2f2" stroke-width="1.2"/><rect x="10.4" y="5.7" width="4.4" height="4.4" fill="#2b2b2b" stroke="#f2f2f2" stroke-width="1.2"/><rect x="22.0" y="18.0" width="4.4" height="4.4" fill="#2b2b2b" stroke="#f2f2f2" stroke-width="1.2"/><path d="M33.200 27V33.200H26.600Z" fill="#7a7a7a"/></g><g transform="translate(108.7,226.6)"><path d="M5.500 7.900H12Q23 7.900 23 15.400Q23 22.900 12 22.900H5.500" stroke="#ececec" stroke-width="1.2" fill="none"/><rect x="3.3" y="5.7" width="4.4" height="4.4" fill="#2b2b2b" stroke="#f2f2f2" stroke-width="1.2"/><rect x="20.7" y="1.7" width="4.4" height="4.4" fill="#2b2b2b" stroke="#f2f2f2" stroke-width="1.2"/><rect x="23.1" y="23.1" width="4.4" height="4.4" fill="#2b2b2b" stroke="#f2f2f2" stroke-width="1.2"/><rect x="3.3" y="20.7" width="4.4" height="4.4" fill="#2b2b2b" stroke="#f2f2f2" stroke-width="1.2"/><path d="M33.200 27V33.200H26.600Z" fill="#7a7a7a"/></g><g transform="translate(3.7,261.6)"><circle cx="15" cy="15" r="11.800" stroke="#ececec" stroke-width="1.2" fill="none"/><path d="M15 15L22.400 6.600" stroke="#ececec" stroke-width="1.2" fill="none"/><rect x="12.8" y="12.8" width="4.4" height="4.4" fill="#2b2b2b" stroke="#f2f2f2" stroke-width="1.2"/><rect x="20.2" y="4.4" width="4.4" height="4.4" fill="#2b2b2b" stroke="#f2f2f2" stroke-width="1.2"/><path d="M33.200 27V33.200H26.600Z" fill="#7a7a7a"/></g><g transform="translate(38.7,261.6)"><ellipse cx="15" cy="16.600" rx="12.300" ry="8.700" stroke="#ececec" stroke-width="1.2" fill="none"/><path d="M15 7.600V16.600H26.400" stroke="#ececec" stroke-width="1.2" fill="none"/><rect x="12.8" y="14.4" width="4.4" height="4.4" fill="#2b2b2b" stroke="#f2f2f2" stroke-width="1.2"/><rect x="12.8" y="5.4" width="4.4" height="4.4" fill="#2b2b2b" stroke="#f2f2f2" stroke-width="1.2"/><rect x="24.2" y="14.8" width="4.4" height="4.4" fill="#2b2b2b" stroke="#f2f2f2" stroke-width="1.2"/><path d="M33.200 27V33.200H26.600Z" fill="#7a7a7a"/></g><g transform="translate(73.7,261.6)"><path d="M6.600 5.500V25.600L24.200 15.300Q19 6.500 6.600 5.500" stroke="#ececec" stroke-width="1.2" fill="none"/><rect x="4.4" y="3.3" width="4.4" height="4.4" fill="#2b2b2b" stroke="#f2f2f2" stroke-width="1.2"/><rect x="22.0" y="13.1" width="4.4" height="4.4" fill="#2b2b2b" stroke="#f2f2f2" stroke-width="1.2"/><rect x="4.4" y="23.4" width="4.4" height="4.4" fill="#2b2b2b" stroke="#f2f2f2" stroke-width="1.2"/><path d="M33.200 27V33.200H26.600Z" fill="#7a7a7a"/></g><g transform="translate(108.7,261.6)"><rect x="5.500" y="9.300" width="20.300" height="12.700" stroke="#ececec" stroke-width="1.2" fill="none"/><rect x="23.6" y="7.1" width="4.4" height="4.4" fill="#2b2b2b" stroke="#f2f2f2" stroke-width="1.2"/><rect x="3.3" y="19.8" width="4.4" height="4.4" fill="#2b2b2b" stroke="#f2f2f2" stroke-width="1.2"/><path d="M33.200 27V33.200H26.600Z" fill="#7a7a7a"/></g><g transform="translate(3.7,296.6)"><path d="M4.200 14.700L9.600 5.300H20.400L25.800 14.700L20.400 24.100H9.600Z" stroke="#ececec" stroke-width="1.2" fill="none"/><path d="M15 14.700H24" stroke="#ececec" stroke-width="1.2" fill="none"/><rect x="12.8" y="12.5" width="4.4" height="4.4" fill="#2b2b2b" stroke="#f2f2f2" stroke-width="1.2"/><rect x="21.8" y="12.5" width="4.4" height="4.4" fill="#2b2b2b" stroke="#f2f2f2" stroke-width="1.2"/><path d="M33.200 27V33.200H26.600Z" fill="#7a7a7a"/></g><g transform="translate(38.7,296.6)"><path d="M5.200 5.900H25.300V24.100" stroke="#9a9a9a" stroke-width=".9" fill="none"/><path d="M5.200 5.900Q25.300 5.900 25.300 24.100" stroke="#5c5c5c" stroke-width="4.400" fill="none"/><path d="M5.200 5.900Q25.300 5.900 25.300 24.100" stroke="#e8e8e8" stroke-width="2.600" fill="none"/><rect x="3.0" y="3.7" width="4.4" height="4.4" fill="#2b2b2b" stroke="#f2f2f2" stroke-width="1.2"/><rect x="23.1" y="21.9" width="4.4" height="4.4" fill="#2b2b2b" stroke="#f2f2f2" stroke-width="1.2"/><path d="M33.200 27V33.200H26.600Z" fill="#7a7a7a"/></g><g transform="translate(73.7,296.6)"><path d="M10.200 5.600L25 5.600L19 25.600L5.500 19.500Z" fill="none" stroke="#5c5c5c" stroke-width="3.0" stroke-linejoin="round"/><path d="M10.200 5.600L25 5.600L19 25.600L5.500 19.500Z" fill="url(#gBlue)" stroke="#141414" stroke-width="1.4" stroke-linejoin="round" /><path d="M17.500 5.600L12 22.500M8 12.500L22 15.500" stroke="#1a2a8a" stroke-width="1" fill="none"/><circle cx="10.2" cy="5.6" r="2.300" fill="#fff" stroke="#111" stroke-width="1.300"/><circle cx="25" cy="5.6" r="2.300" fill="#fff" stroke="#111" stroke-width="1.300"/><circle cx="19" cy="25.6" r="2.300" fill="#fff" stroke="#111" stroke-width="1.300"/><circle cx="5.5" cy="19.5" r="2.300" fill="#fff" stroke="#111" stroke-width="1.300"/><path d="M33.200 27V33.200H26.600Z" fill="#7a7a7a"/></g><g transform="translate(108.7,296.6)"><path d="M4.500 10L13 4.500Q24 7 26 16L25.500 24L18 28.500Q19.500 18 13.500 13.500Z" fill="none" stroke="#5c5c5c" stroke-width="2.9000000000000004" stroke-linejoin="round"/><path d="M4.500 10L13 4.500Q24 7 26 16L25.500 24L18 28.500Q19.500 18 13.500 13.500Z" fill="url(#gBlueV)" stroke="#141414" stroke-width="1.3" stroke-linejoin="round" /><path d="M6.500 10L13.200 6L17.500 8L11.500 12.500Z M19 21.500L25 18V23L18.800 26.500Z" fill="#fbfbfb"/><path d="M33.200 27V33.200H26.600Z" fill="#7a7a7a"/></g><g transform="translate(3.7,331.6)"><path d="M4.500 9L16 3.500L26.500 8V21.500L15 27.500L4.500 22Z" fill="none" stroke="#5c5c5c" stroke-width="3.0" stroke-linejoin="round"/><path d="M4.500 9L16 3.500L26.500 8V21.500L15 27.500L4.500 22Z" fill="#5c7cf0" stroke="#141414" stroke-width="1.4" stroke-linejoin="round" /><path d="M4.500 9L15 13.500L26.500 8L16 3.500Z" fill="#a9baff"/><path d="M15 13.500V27.500L26.500 21.500V8Z" fill="#3350d0"/><path d="M4.500 9L15 13.500L26.500 8M15 13.500V27.500" fill="none" stroke="#141414" stroke-width=".9"/><path d="M33.200 27V33.200H26.600Z" fill="#7a7a7a"/></g><g transform="translate(38.7,331.6)"><circle cx="21" cy="10.500" r="9" fill="#111"/><circle cx="21" cy="10.500" r="7.800" fill="url(#gSphBl)"/><path d="M21 2.700Q17.500 10.500 21 18.300M13.300 11.500Q21 14.500 28.700 11.500" stroke="#1a2a7a" stroke-width=".9" fill="none"/><circle cx="11.500" cy="20" r="9" fill="#111"/><circle cx="11.500" cy="20" r="7.800" fill="url(#gSphBl)"/><path d="M11.500 12.200Q8 20 11.500 27.800M3.800 21Q11.500 24 19.200 21" stroke="#1a2a7a" stroke-width=".9" fill="none"/><path d="M33.200 27V33.200H26.600Z" fill="#7a7a7a"/></g><g transform="translate(73.7,331.6)"><ellipse cx="15" cy="5.500" rx="7" ry="3.200" fill="none" stroke="#111" stroke-width="3.200"/><ellipse cx="15" cy="5.500" rx="7" ry="3.200" fill="none" stroke="#6d6d6d" stroke-width="1.500"/><path d="M2.500 12Q15 18.500 27.500 12V24Q15 30.500 2.500 24Z" fill="none" stroke="#5c5c5c" stroke-width="3.1" stroke-linejoin="round"/><path d="M2.500 12Q15 18.500 27.500 12V24Q15 30.500 2.500 24Z" fill="url(#gBlueV)" stroke="#141414" stroke-width="1.5" stroke-linejoin="round" /><ellipse cx="15" cy="23" rx="6.500" ry="3" fill="none" stroke="#f4f4f4" stroke-width="1.800"/><path d="M33.200 27V33.200H26.600Z" fill="#7a7a7a"/></g><g transform="translate(108.7,331.6)"><path d="M10 4.500Q17 9 27.500 8.500L20 25.500Q12 25 3 20.500Z" fill="none" stroke="#5c5c5c" stroke-width="3.0" stroke-linejoin="round"/><path d="M10 4.500Q17 9 27.500 8.500L20 25.500Q12 25 3 20.500Z" fill="url(#gBlue)" stroke="#141414" stroke-width="1.4" stroke-linejoin="round" /><path d="M15.500 7.200L8.500 23M21.500 8.500L14 25M7.700 10Q15 14 25 14M5.500 15.500Q13 19.500 22.500 19.500M10 4.500L20 25.500M27.500 8.500L3 20.500" stroke="#17257a" stroke-width=".8" fill="none"/><path d="M33.200 27V33.200H26.600Z" fill="#7a7a7a"/></g><g transform="translate(3.7,366.6)"><g transform="translate(6,4.500) rotate(-32 5 6)"><path d="M0 3H3.300Q2.300 0 5 0Q7.700 0 6.700 3H10V6.300Q13 5.300 13 8Q13 10.700 10 9.700V13H6.700Q7.700 10 5 10Q2.300 10 3.300 13H0V9.700Q-3 10.700 -3 8Q-3 5.300 0 6.300Z" fill="none" stroke="#5c5c5c" stroke-width="2.8" stroke-linejoin="round"/><path d="M0 3H3.300Q2.300 0 5 0Q7.700 0 6.700 3H10V6.300Q13 5.300 13 8Q13 10.700 10 9.700V13H6.700Q7.700 10 5 10Q2.300 10 3.300 13H0V9.700Q-3 10.700 -3 8Q-3 5.300 0 6.300Z" fill="#f5a300" stroke="#141414" stroke-width="1.2" stroke-linejoin="round" /></g><g transform="translate(15,15) rotate(-32 5 6)"><path d="M0 3H3.300Q2.300 0 5 0Q7.700 0 6.700 3H10V6.300Q13 5.300 13 8Q13 10.700 10 9.700V13H6.700Q7.700 10 5 10Q2.300 10 3.300 13H0V9.700Q-3 10.700 -3 8Q-3 5.300 0 6.300Z" fill="none" stroke="#5c5c5c" stroke-width="2.8" stroke-linejoin="round"/><path d="M0 3H3.300Q2.300 0 5 0Q7.700 0 6.700 3H10V6.300Q13 5.300 13 8Q13 10.700 10 9.700V13H6.700Q7.700 10 5 10Q2.300 10 3.300 13H0V9.700Q-3 10.700 -3 8Q-3 5.300 0 6.300Z" fill="#ffffff" stroke="#141414" stroke-width="1.2" stroke-linejoin="round" /></g><path d="M33.200 27V33.200H26.600Z" fill="#7a7a7a"/></g><g transform="translate(38.7,366.6)"><path d="M4 27.500L5.500 10L11 18.500L14 5L18 16L28.500 7.500L21 20L29 21.500L20.500 25.500L22 28.500Z" fill="none" stroke="#5c5c5c" stroke-width="2.7" stroke-linejoin="round"/><path d="M4 27.500L5.500 10L11 18.500L14 5L18 16L28.500 7.500L21 20L29 21.500L20.500 25.500L22 28.500Z" fill="url(#gOr)" stroke="#141414" stroke-width="1.1" stroke-linejoin="round" /><path d="M6.500 26L8 15L12 22L15 12L18 19.500L23.500 14.500L19 22L23 23L18 25Z" fill="#ffe04a" opacity=".55"/><path d="M20 24L27.500 22L21.500 27Z" fill="#c22a00"/></g><g transform="translate(73.7,366.6)"><path d="M2.500 14H15V19.500H2.500Z" fill="none" stroke="#5c5c5c" stroke-width="2.8" stroke-linejoin="round"/><path d="M2.500 14H15V19.500H2.500Z" fill="#ffffff" stroke="#141414" stroke-width="1.2" stroke-linejoin="round" /><path d="M14.500 4H23.500L17 19Z" fill="none" stroke="#5c5c5c" stroke-width="2.6" stroke-linejoin="round"/><path d="M14.500 4H23.500L17 19Z" fill="#1d2f8f" stroke="#141414" stroke-width="1" stroke-linejoin="round" /><g transform="rotate(40 20 22)"><path d="M15.500 19.500H25.500V24.500H15.500Z" fill="none" stroke="#5c5c5c" stroke-width="2.6" stroke-linejoin="round"/><path d="M15.500 19.500H25.500V24.500H15.500Z" fill="#3a3a3a" stroke="#141414" stroke-width="1" stroke-linejoin="round" /><rect x="17" y="21" width="7" height="2" fill="none" stroke="#9a9a9a" stroke-width=".8"/></g></g><g transform="translate(108.7,366.6)"><path d="M2.500 15.500H27.500V21.500H2.500Z" fill="none" stroke="#5c5c5c" stroke-width="2.8" stroke-linejoin="round"/><path d="M2.500 15.500H27.500V21.500H2.500Z" fill="#ffffff" stroke="#141414" stroke-width="1.2" stroke-linejoin="round" /><path d="M14.500 4H24L17.500 21.500Z" fill="none" stroke="#5c5c5c" stroke-width="2.6" stroke-linejoin="round"/><path d="M14.500 4H24L17.500 21.500Z" fill="#1d2f8f" stroke="#141414" stroke-width="1" stroke-linejoin="round" /></g><g transform="translate(3.7,401.6)"><circle cx="15" cy="9.500" r="7.600" fill="#0a0a0a"/><circle cx="9.500" cy="19" r="7.600" fill="#0a0a0a"/><circle cx="20.500" cy="19" r="7.600" fill="#0a0a0a"/><path d="M15 10L9.500 19H20.500Z" fill="#0a0a0a"/><g fill="none" stroke="#5c5c5c" stroke-width="1"><path d="M7.900 12.200A7.600 7.600 0 1 1 22.100 12.200"/><path d="M22.100 12.200A7.600 7.600 0 1 1 15 24.500"/><path d="M15 24.500A7.600 7.600 0 1 1 7.900 12.200"/></g><circle cx="15" cy="9.800" r="4.700" fill="#6a8aff"/><circle cx="10" cy="18.800" r="4.300" fill="#ffffff"/><circle cx="20" cy="18.800" r="4.300" fill="#1a2a8c"/><path d="M33.200 27V33.200H26.600Z" fill="#7a7a7a"/></g><g transform="translate(38.7,401.6)"><circle cx="15" cy="8.500" r="5" fill="#5f7ff5" stroke="#111" stroke-width="1.300"/><circle cx="8.500" cy="19.500" r="5" fill="#fff" stroke="#111" stroke-width="1.300"/><circle cx="21.500" cy="19.500" r="5" fill="#1a2a8c" stroke="#111" stroke-width="1.300"/><g fill="none" stroke="#5c5c5c" stroke-width=".8"><circle cx="15" cy="8.500" r="6"/><circle cx="8.500" cy="19.500" r="6"/><circle cx="21.500" cy="19.500" r="6"/></g></g><g transform="translate(73.7,401.6)"><path d="M4 7.500Q21 7.500 23.500 27" stroke="#5c5c5c" stroke-width="4" fill="none"/><path d="M4 7.500Q21 7.500 23.500 27" stroke="#e6e6e6" stroke-width="2.200" fill="none"/><path d="M3 7.500L6.500 5.500V9.500Z" fill="#e6e6e6"/><rect x="8.1" y="4.9" width="3.8" height="3.8" fill="#2b2b2b" stroke="#f2f2f2" stroke-width="1.2"/><rect x="21.1" y="17.6" width="3.8" height="3.8" fill="#2b2b2b" stroke="#f2f2f2" stroke-width="1.2"/></g><g transform="translate(108.7,401.6)"><path d="M3 9.500Q20 9.500 23.500 27.500" stroke="#5c5c5c" stroke-width="4.400" fill="none"/><path d="M3 9.500Q20 9.500 23.500 27.500" stroke="#efefef" stroke-width="2.600" fill="none"/><path d="M2.500 4.500H12M17 6Q25.500 9 27.500 17.500M28 22V29" stroke="#e6e6e6" stroke-width="1.200" stroke-dasharray="1.400 1.400" fill="none"/><rect x="12.1" y="1.6" width="3.8" height="3.8" fill="#2b2b2b" stroke="#f2f2f2" stroke-width="1.2"/><rect x="26.1" y="15.1" width="3.8" height="3.8" fill="#2b2b2b" stroke="#f2f2f2" stroke-width="1.2"/><path d="M33.200 27V33.200H26.600Z" fill="#7a7a7a"/></g><g transform="translate(3.7,436.6)"><text x="15.800" y="27.500" text-anchor="middle" font-family="Liberation Serif, serif" font-weight="700" font-size="33" fill="#20349c" stroke="#111" stroke-width="2.200" stroke-linejoin="round">T</text><text x="14.500" y="26.500" text-anchor="middle" font-family="Liberation Serif, serif" font-weight="700" font-size="33" fill="url(#gBlueV)" stroke="#111" stroke-width=".6">T</text></g><g transform="translate(38.7,436.6)"><rect x="3.5" y="18.5" width="7" height="7" fill="url(#gPaper)" stroke="#111" stroke-width="1.200"/><rect x="2.4" y="17.4" width="9.2" height="9.2" fill="none" stroke="#5c5c5c" stroke-width=".8"/><rect x="18.5" y="3.5" width="7" height="7" fill="url(#gBlue)" stroke="#111" stroke-width="1.200"/><rect x="17.4" y="2.4" width="9.2" height="9.2" fill="none" stroke="#5c5c5c" stroke-width=".8"/><path d="M11.500 17.500L17.500 11.500" stroke="#e6e6e6" stroke-width="1.300"/><path d="M14 11H18V15" stroke="#e6e6e6" stroke-width="1.300" fill="none"/><path d="M33.200 27V33.200H26.600Z" fill="#7a7a7a"/></g><g transform="translate(73.7,436.6)"><rect x="3" y="3" width="7" height="7" fill="url(#gBlue)" stroke="#111" stroke-width="1.200"/><rect x="1.9" y="1.9" width="9.2" height="9.2" fill="none" stroke="#5c5c5c" stroke-width=".8"/><rect x="3.5" y="18.5" width="6.5" height="6.5" fill="url(#gPaper)" stroke="#111" stroke-width="1.200"/><rect x="2.4" y="17.4" width="8.7" height="8.7" fill="none" stroke="#5c5c5c" stroke-width=".8"/><rect x="18.5" y="6.5" width="6.5" height="6.5" fill="url(#gBlue)" stroke="#111" stroke-width="1.200"/><rect x="17.4" y="5.4" width="8.7" height="8.7" fill="none" stroke="#5c5c5c" stroke-width=".8"/><rect x="18.5" y="20" width="7" height="7" fill="url(#gBlue)" stroke="#111" stroke-width="1.200"/><rect x="17.4" y="18.9" width="9.2" height="9.2" fill="none" stroke="#5c5c5c" stroke-width=".8"/><rect x="12.5" y="10" width="7.5" height="7.5" fill="url(#gBlue)" stroke="#111" stroke-width="1.200"/><rect x="11.4" y="8.9" width="9.7" height="9.7" fill="none" stroke="#5c5c5c" stroke-width=".8"/></g><g transform="translate(108.7,436.6)"><path d="M3 3H9V18H3Z" fill="none" stroke="#5c5c5c" stroke-width="2.8" stroke-linejoin="round"/><path d="M3 3H9V18H3Z" fill="url(#gGrayH)" stroke="#141414" stroke-width="1.2" stroke-linejoin="round" /><g transform="rotate(-38 20 20)"><path d="M11.500 17H28.500V23.500H11.500Z" fill="none" stroke="#5c5c5c" stroke-width="2.8" stroke-linejoin="round"/><path d="M11.500 17H28.500V23.500H11.500Z" fill="url(#gBlueV)" stroke="#141414" stroke-width="1.2" stroke-linejoin="round" /></g><path d="M9.500 6Q17 5.500 20.500 11" stroke="#ececec" stroke-width="1.300" fill="none"/><path d="M17.500 10.500L21.500 12.500L21 8" stroke="#ececec" stroke-width="1.300" fill="none"/></g><g transform="translate(3.7,471.6)"><path d="M4 9L15.500 3.500L26.500 8.500V21.500L15 27.500L4 22Z" fill="none" stroke="#5c5c5c" stroke-width="3.0" stroke-linejoin="round"/><path d="M4 9L15.500 3.500L26.500 8.500V21.500L15 27.500L4 22Z" fill="#5c7cf0" stroke="#141414" stroke-width="1.4" stroke-linejoin="round" /><path d="M4 9L15 13.500L26.500 8.500L15.500 3.500Z" fill="#b3c2ff"/><path d="M15 13.500V27.500L26.500 21.500V8.500Z" fill="#2f4acb"/><path d="M4 9L15 13.500L26.500 8.500M15 13.500V27.500" fill="none" stroke="#141414" stroke-width=".9"/><path d="M11 18.500L15 20.500L21 17.500V24.500L15 27.500L11 25.500Z" fill="#fdfdfd" stroke="#141414" stroke-width=".9"/><path d="M15 20.500V27.500" stroke="#141414" stroke-width=".9"/><path d="M15 20.500L21 17.500V24.500L15 27.500Z" fill="#cfcfcf"/><path d="M33.200 27V33.200H26.600Z" fill="#7a7a7a"/></g><g transform="translate(38.7,471.6)"><path d="M6.500 18.500H28L23.500 24H1.500Z" fill="none" stroke="#5c5c5c" stroke-width="2.7" stroke-linejoin="round"/><path d="M6.500 18.500H28L23.500 24H1.500Z" fill="url(#gBlueV)" stroke="#141414" stroke-width="1.1" stroke-linejoin="round" /><path d="M8.5 19.500V8" stroke="#111" stroke-width="3.600"/><path d="M4.9 9L8.5 2.500L12.1 9Z" fill="#fff" stroke="#111" stroke-width="1"/><path d="M8.5 19.500V8" stroke="#fff" stroke-width="2"/><path d="M15.5 19.500V8" stroke="#111" stroke-width="3.600"/><path d="M11.9 9L15.5 2.500L19.1 9Z" fill="#fff" stroke="#111" stroke-width="1"/><path d="M15.5 19.500V8" stroke="#fff" stroke-width="2"/><path d="M22.5 19.500V8" stroke="#111" stroke-width="3.600"/><path d="M18.9 9L22.5 2.500L26.1 9Z" fill="#fff" stroke="#111" stroke-width="1"/><path d="M22.5 19.500V8" stroke="#fff" stroke-width="2"/><path d="M33.200 27V33.200H26.600Z" fill="#7a7a7a"/></g><g transform="translate(73.7,471.6)"><rect x="2" y="2" width="26" height="26" fill="#3c3c3c" stroke="#5a5a5a" stroke-width=".8"/><rect x="4.0" y="4.0" width="4.800" height="4.800" fill="#6f8cff" stroke="#23358f" stroke-width=".7"/><rect x="4.0" y="12.6" width="4.800" height="4.800" fill="#6f8cff" stroke="#23358f" stroke-width=".7"/><rect x="4.0" y="21.2" width="4.800" height="4.800" fill="#fff" stroke="#23358f" stroke-width=".7"/><rect x="12.6" y="4.0" width="4.800" height="4.800" fill="#6f8cff" stroke="#23358f" stroke-width=".7"/><rect x="12.6" y="12.6" width="4.800" height="4.800" fill="#6f8cff" stroke="#23358f" stroke-width=".7"/><rect x="12.6" y="21.2" width="4.800" height="4.800" fill="#6f8cff" stroke="#23358f" stroke-width=".7"/><rect x="21.2" y="4.0" width="4.800" height="4.800" fill="#6f8cff" stroke="#23358f" stroke-width=".7"/><rect x="21.2" y="12.6" width="4.800" height="4.800" fill="#6f8cff" stroke="#23358f" stroke-width=".7"/><rect x="21.2" y="21.2" width="4.800" height="4.800" fill="#6f8cff" stroke="#23358f" stroke-width=".7"/><path d="M33.200 27V33.200H26.600Z" fill="#7a7a7a"/></g><g transform="translate(108.7,471.6)"><rect x="10" y="4.5" width="10" height="10" fill="#f4f4f4" stroke="#111" stroke-width="1.200"/><rect x="8.9" y="3.4" width="12.2" height="12.2" fill="none" stroke="#5c5c5c" stroke-width=".8"/><rect x="12" y="13.5" width="6" height="6" fill="#dcdcdc" stroke="#111" stroke-width="1.200"/><rect x="10.9" y="12.4" width="8.2" height="8.2" fill="none" stroke="#5c5c5c" stroke-width=".8"/><rect x="10.5" y="20.5" width="9" height="9" fill="#f4f4f4" stroke="#111" stroke-width="1.200"/><rect x="9.4" y="19.4" width="11.2" height="11.2" fill="none" stroke="#5c5c5c" stroke-width=".8"/><path d="M15 1.500V28.500" stroke="#e01515" stroke-width="2.200"/><path d="M33.200 27V33.200H26.600Z" fill="#7a7a7a"/></g><g transform="translate(3.7,506.6)"><path d="M3.500 9L10 5.500L14.500 7.500V25.500L9 28L3.500 25Z" fill="none" stroke="#5c5c5c" stroke-width="2.8" stroke-linejoin="round"/><path d="M3.500 9L10 5.500L14.500 7.500V25.500L9 28L3.500 25Z" fill="#f4f4f4" stroke="#141414" stroke-width="1.2" stroke-linejoin="round" /><path d="M9 11V28L14.500 25.500V7.500Z" fill="#bdbdbd"/><path d="M13 22L18.500 8L26.500 9.500L21.500 25.500L16 28Z" fill="none" stroke="#5c5c5c" stroke-width="2.8" stroke-linejoin="round"/><path d="M13 22L18.500 8L26.500 9.500L21.500 25.500L16 28Z" fill="url(#gBlueV)" stroke="#141414" stroke-width="1.2" stroke-linejoin="round" /><path d="M18.500 8L21 4.500L26.500 9.500Z" fill="#fafafa" stroke="#141414" stroke-width="1"/><path d="M33.200 27V33.200H26.600Z" fill="#7a7a7a"/></g><g transform="translate(38.7,506.6)"><g transform=""><circle cx="4.500" cy="10" r="3" fill="#1c1c1c" stroke="#5c5c5c" stroke-width=".8"/><path d="M5 13.500L11.500 12.500L12 15L8 16.500L9.500 21L6 26.500H3L6 21.500L4 17Z" fill="#1c1c1c" stroke="#5c5c5c" stroke-width=".8"/></g><g transform="translate(33,0) scale(-1,1)"><circle cx="12" cy="10" r="3" fill="#2a2a2a" stroke="#5c5c5c" stroke-width=".8"/><path d="M13 13.500L18 12.500L18.500 15L15 16.500L16.500 21L13.500 27H10.500L13.500 21.500L11.500 17Z" fill="#3a3a3a" stroke="#5c5c5c" stroke-width=".8"/></g><path d="M12.500 2.500H15.500V28H12.500Z" fill="none" stroke="#5c5c5c" stroke-width="2.7" stroke-linejoin="round"/><path d="M12.500 2.500H15.500V28H12.500Z" fill="url(#gBlueV)" stroke="#141414" stroke-width="1.1" stroke-linejoin="round" /><path d="M25 24.500L28.500 28M28.500 24.500V28H25" stroke="#aaa" stroke-width="1.100" fill="none"/><path d="M33.200 27V33.200H26.600Z" fill="#7a7a7a"/></g><g transform="translate(73.7,506.6)"><path d="M3.500 17L8 14.500L11.500 20.500Q18 9 27.500 2.500Q19 13 13 27.500H10Q8 22 3.500 17Z" fill="none" stroke="#5c5c5c" stroke-width="2.5" stroke-linejoin="round"/><path d="M3.500 17L8 14.500L11.500 20.500Q18 9 27.500 2.500Q19 13 13 27.500H10Q8 22 3.500 17Z" fill="url(#gGrayH)" stroke="#141414" stroke-width="0.9" stroke-linejoin="round" /><path d="M33.200 27V33.200H26.600Z" fill="#7a7a7a"/></g><g transform="translate(108.7,506.6)"><path d="M3 10L11 5.500L18.500 8.500V20L10 24L3 20.500Z" fill="none" stroke="#5c5c5c" stroke-width="2.8" stroke-linejoin="round"/><path d="M3 10L11 5.500L18.500 8.500V20L10 24L3 20.500Z" fill="#dedede" stroke="#141414" stroke-width="1.2" stroke-linejoin="round" /><path d="M3 10L10.500 13L18.500 8.500L11 5.500Z" fill="#f6f6f6"/><path d="M10.500 13V24L18.500 20V8.500Z" fill="#a9a9a9"/><path d="M21 7.500L28.500 23Q28.500 26.500 22 26.500Q15.500 26.500 15.500 23Z" fill="none" stroke="#5c5c5c" stroke-width="2.8" stroke-linejoin="round"/><path d="M21 7.500L28.500 23Q28.500 26.500 22 26.500Q15.500 26.500 15.500 23Z" fill="url(#gGrayH)" stroke="#141414" stroke-width="1.2" stroke-linejoin="round" /><path d="M33.200 27V33.200H26.600Z" fill="#7a7a7a"/></g><g transform="translate(3.7,541.6)"><path d="M3 23L15 11L27 22L14 28Z" fill="none" stroke="#5c5c5c" stroke-width="2.7" stroke-linejoin="round"/><path d="M3 23L15 11L27 22L14 28Z" fill="#e6c24f" stroke="#141414" stroke-width="1.1" stroke-linejoin="round" /><path d="M15 11L14 28L3 23Z" fill="#f3da78"/><path d="M15 11L14 28L27 22Z" fill="#c9a02e"/><path d="M15 11L14 28" stroke="#8a6a10" stroke-width=".7"/><rect x="24.500" y="-1.500" width="4.500" height="7" fill="#0c0c0c" stroke="#555" stroke-width=".6"/><path d="M11 6L15.500 1Q17.500 -.5 19.500 .5L24.500 1V5.500L20 6.500L17 10Q16 10.500 15.500 9.500L14 10L12 8.500Z" fill="none" stroke="#5c5c5c" stroke-width="2.6" stroke-linejoin="round"/><path d="M11 6L15.500 1Q17.500 -.5 19.500 .5L24.500 1V5.500L20 6.500L17 10Q16 10.500 15.500 9.500L14 10L12 8.500Z" fill="#f6f6f6" stroke="#141414" stroke-width="1" stroke-linejoin="round" /><path d="M12.500 7.500L16 3.500M14 8.500L17.500 4.500M15.500 9.500L18.700 5.700" stroke="#555" stroke-width=".7"/><path d="M33.200 27V33.200H26.600Z" fill="#7a7a7a"/></g></svg>
<svg style="left:1600px;top:240px" width="318" height="300" viewBox="1600 240 318 300"><g transform="translate(1605.8,248.2)"><g transform="translate(-1,-1.500)"><path d="M1.300 2L17.200 5.500V13L9.300 18.300L1.300 9.800Z" fill="#111" stroke="#5c5c5c" stroke-width="2.400" stroke-linejoin="round"/><path d="M1.300 2L17.200 5.500V13L9.300 18.300L1.300 9.800Z" fill="#111" stroke="#111" stroke-width="1.100" stroke-linejoin="round"/><path d="M1.300 2L8.700 10.200L9.300 18.300L1.300 9.800Z" fill="#3c5fe0"/><path d="M1.300 2L8.700 10.200L9.100 15.600L1.300 7.300Z" fill="#fafafa"/><path d="M1.300 2L8.700 10.200L8.900 12.900L1.300 4.600Z" fill="#ff6a1a"/><path d="M8.700 10.200L17.200 5.500V13L9.300 18.300Z" fill="#2540b5"/><path d="M8.700 10.200L17.200 5.500V10.500L9.100 15.600Z" fill="#e8e8e8"/><path d="M8.700 10.200L17.200 5.500V8L8.900 12.900Z" fill="#e2241a"/><path d="M1.300 2L17.200 5.500L8.700 10.200Z" fill="#ff9a6e"/><path d="M3.500 3.100L15 5.700" stroke="#ffc9ad" stroke-width="1" fill="none"/></g><path d="M9 11.500H12V8.500H15V11.500H18V14.500H15V17.500H12V14.500H9Z" fill="#0a0a0a" stroke="#e8e8e8" stroke-width="1" transform="translate(1.500,3)"/></g><g transform="translate(1633.0,248.2)"><g transform="translate(-1,-2) scale(.68)"><path d="M1.300 2L17.200 5.500V13L9.300 18.300L1.300 9.800Z" fill="#111" stroke="#5c5c5c" stroke-width="2.400" stroke-linejoin="round"/><path d="M1.300 2L17.200 5.500V13L9.300 18.300L1.300 9.800Z" fill="#111" stroke="#111" stroke-width="1.100" stroke-linejoin="round"/><path d="M1.300 2L8.700 10.200L9.300 18.300L1.300 9.800Z" fill="#3c5fe0"/><path d="M1.300 2L8.700 10.200L9.100 15.600L1.300 7.300Z" fill="#fafafa"/><path d="M1.300 2L8.700 10.200L8.900 12.900L1.300 4.600Z" fill="#ff6a1a"/><path d="M8.700 10.200L17.200 5.500V13L9.300 18.300Z" fill="#2540b5"/><path d="M8.700 10.200L17.200 5.500V10.500L9.100 15.600Z" fill="#e8e8e8"/><path d="M8.700 10.200L17.200 5.500V8L8.900 12.900Z" fill="#e2241a"/><path d="M1.300 2L17.200 5.500L8.700 10.200Z" fill="#ff9a6e"/><path d="M3.500 3.100L15 5.700" stroke="#ffc9ad" stroke-width="1" fill="none"/></g><g transform="translate(7,5.500) scale(.68)"><path d="M1.300 2L17.200 5.500V13L9.300 18.300L1.300 9.800Z" fill="#111" stroke="#5c5c5c" stroke-width="2.400" stroke-linejoin="round"/><path d="M1.300 2L17.200 5.500V13L9.300 18.300L1.300 9.800Z" fill="#111" stroke="#111" stroke-width="1.100" stroke-linejoin="round"/><path d="M1.300 2L8.700 10.200L9.300 18.300L1.300 9.800Z" fill="#3c5fe0"/><path d="M1.300 2L8.700 10.200L9.100 15.600L1.300 7.300Z" fill="#fafafa"/><path d="M1.300 2L8.700 10.200L8.900 12.900L1.300 4.600Z" fill="#ff6a1a"/><path d="M8.700 10.200L17.200 5.500V13L9.300 18.300Z" fill="#2540b5"/><path d="M8.700 10.200L17.200 5.500V10.500L9.100 15.600Z" fill="#e8e8e8"/><path d="M8.700 10.200L17.200 5.500V8L8.900 12.900Z" fill="#e2241a"/><path d="M1.300 2L17.200 5.500L8.700 10.200Z" fill="#ff9a6e"/><path d="M3.500 3.100L15 5.700" stroke="#ffc9ad" stroke-width="1" fill="none"/></g><path d="M2.500 11V17.500H7M5 15.500L7.200 17.500L5 19.500" fill="none" stroke="#dcdcdc" stroke-width="1.100"/></g><g transform="translate(1660.0,248.2)"><path d="M2.200 2.300L18 17.700M18 2.300L2.200 17.700" stroke="#e80000" stroke-width="2.500"/></g><g transform="translate(1687.0,248.2)"><path d="M4 5.500Q1.500 12 6 17.500" stroke="#8a8a8a" stroke-width="1.200" fill="none"/><path d="M5 6.500L14 3L18.500 9V15.500L11 19L6 15Z" fill="#5a5a5a" stroke="#8f8f8f" stroke-width="1"/><path d="M6 8Q12 10.500 18 8.500" stroke="#8f8f8f" stroke-width="1" fill="none"/><path d="M5 3Q9 0 13 2.500M13 2.500L10.500 .5M13 2.500L10.500 4" stroke="#8a8a8a" stroke-width="1.100" fill="none"/></g><g transform="translate(1714.7,248.2)"><path d="M1.600 15.500L10 3.300L18.500 15.500Z" fill="url(#gBlueV)" stroke="#3a55c8" stroke-width=".8" stroke-linejoin="round"/></g><g transform="translate(1742.5,248.2)"><path d="M1.600 5.500H18.500L10 15.500Z" fill="url(#gBlueV)" stroke="#3a55c8" stroke-width=".8" stroke-linejoin="round"/></g><g transform="translate(1770.0,248.2)"><path d="M15 1.500V18.500L4 10Z" fill="#555" stroke="#8c8c8c" stroke-width="1.300" stroke-linejoin="round"/></g><g transform="translate(1797.3,248.2)"><path d="M2.500 3Q10 .5 17.500 3L11.500 10.500V17.500Q10 18.500 8.500 17.500V10.500Z" fill="url(#gBlueV)" stroke="#2a45c0" stroke-width="1" stroke-linejoin="round"/><ellipse cx="10" cy="3.200" rx="7.300" ry="1.500" fill="#b9c8ff"/></g><g transform="translate(1824.6,248.2)"><rect x="3.2" y="1.3" width="3.900" height="3.700" fill="#8c8c8c"/><rect x="3.2" y="5.8" width="3.900" height="3.700" fill="#f4f4f4"/><rect x="3.2" y="10.3" width="3.900" height="3.700" fill="#f4f4f4"/><rect x="3.2" y="14.8" width="3.900" height="3.700" fill="#f4f4f4"/><rect x="7.9" y="1.3" width="3.900" height="3.700" fill="#8c8c8c"/><rect x="7.9" y="5.8" width="3.900" height="3.700" fill="#f4f4f4"/><rect x="7.9" y="10.3" width="3.900" height="3.700" fill="#f4f4f4"/><rect x="7.9" y="14.8" width="3.900" height="3.700" fill="#f4f4f4"/><rect x="12.600000000000001" y="1.3" width="3.900" height="3.700" fill="#8c8c8c"/><rect x="12.600000000000001" y="5.8" width="3.900" height="3.700" fill="#f4f4f4"/><rect x="12.600000000000001" y="10.3" width="3.900" height="3.700" fill="#f4f4f4"/><rect x="12.600000000000001" y="14.8" width="3.900" height="3.700" fill="#f4f4f4"/></g><g transform="translate(1852.8,248.2)"><path d="M2.500 3.800H17.500M2.500 10.300H17.500M2.500 16.800H17.500" stroke="#f4f4f4" stroke-width="2.300"/></g><g transform="translate(1605.0,276.0)"><circle cx="10" cy="10" r="9.200" fill="url(#gHelp)"/><text x="10" y="16.500" text-anchor="middle" font-family="Liberation Serif, serif" font-weight="700" font-size="18" fill="#fff">?</text></g><g transform="translate(1895.0,248.5)"><g transform="translate(-.5,-1)"><path d="M1.300 2L17.200 5.500V13L9.300 18.300L1.300 9.800Z" fill="#111" stroke="#5c5c5c" stroke-width="2.400" stroke-linejoin="round"/><path d="M1.300 2L17.200 5.500V13L9.300 18.300L1.300 9.800Z" fill="#111" stroke="#111" stroke-width="1.100" stroke-linejoin="round"/><path d="M1.300 2L8.700 10.200L9.300 18.300L1.300 9.800Z" fill="#3c5fe0"/><path d="M1.300 2L8.700 10.200L9.100 15.600L1.300 7.300Z" fill="#fafafa"/><path d="M1.300 2L8.700 10.200L8.900 12.900L1.300 4.600Z" fill="#ff6a1a"/><path d="M8.700 10.200L17.200 5.500V13L9.300 18.300Z" fill="#2540b5"/><path d="M8.700 10.200L17.200 5.500V10.500L9.100 15.600Z" fill="#e8e8e8"/><path d="M8.700 10.200L17.200 5.500V8L8.900 12.900Z" fill="#e2241a"/><path d="M1.300 2L17.200 5.500L8.700 10.200Z" fill="#ff9a6e"/><path d="M3.500 3.100L15 5.700" stroke="#ffc9ad" stroke-width="1" fill="none"/></g></g><g transform="translate(1895.2,294.0)"><circle cx="10" cy="10" r="9.300" fill="#0a0a0a"/><path d="M10.00 1.60L12.34 1.93L11.28 5.58L10.00 5.40Z" fill="hsl(0,100%,50%)"/><path d="M12.17 1.89L14.34 2.81L12.38 6.06L11.19 5.56Z" fill="hsl(15,100%,50%)"/><path d="M14.20 2.73L16.06 4.18L13.32 6.81L12.30 6.02Z" fill="hsl(30,100%,50%)"/><path d="M15.94 4.06L17.36 5.95L14.03 7.78L13.25 6.75Z" fill="hsl(45,100%,50%)"/><path d="M17.27 5.80L18.16 7.99L14.47 8.90L13.98 7.70Z" fill="hsl(60,100%,50%)"/><path d="M18.11 7.83L18.40 10.17L14.60 10.09L14.44 8.81Z" fill="hsl(75,100%,50%)"/><path d="M18.40 10.00L18.07 12.34L14.42 11.28L14.60 10.00Z" fill="hsl(90,100%,50%)"/><path d="M18.11 12.17L17.19 14.34L13.94 12.38L14.44 11.19Z" fill="hsl(105,100%,50%)"/><path d="M17.27 14.20L15.82 16.06L13.19 13.32L13.98 12.30Z" fill="hsl(120,100%,50%)"/><path d="M15.94 15.94L14.05 17.36L12.22 14.03L13.25 13.25Z" fill="hsl(135,100%,50%)"/><path d="M14.20 17.27L12.01 18.16L11.10 14.47L12.30 13.98Z" fill="hsl(150,100%,50%)"/><path d="M12.17 18.11L9.83 18.40L9.91 14.60L11.19 14.44Z" fill="hsl(165,100%,50%)"/><path d="M10.00 18.40L7.66 18.07L8.72 14.42L10.00 14.60Z" fill="hsl(180,100%,50%)"/><path d="M7.83 18.11L5.66 17.19L7.62 13.94L8.81 14.44Z" fill="hsl(195,100%,50%)"/><path d="M5.80 17.27L3.94 15.82L6.68 13.19L7.70 13.98Z" fill="hsl(210,100%,50%)"/><path d="M4.06 15.94L2.64 14.05L5.97 12.22L6.75 13.25Z" fill="hsl(225,100%,50%)"/><path d="M2.73 14.20L1.84 12.01L5.53 11.10L6.02 12.30Z" fill="hsl(240,100%,50%)"/><path d="M1.89 12.17L1.60 9.83L5.40 9.91L5.56 11.19Z" fill="hsl(255,100%,50%)"/><path d="M1.60 10.00L1.93 7.66L5.58 8.72L5.40 10.00Z" fill="hsl(270,100%,50%)"/><path d="M1.89 7.83L2.81 5.66L6.06 7.62L5.56 8.81Z" fill="hsl(285,100%,50%)"/><path d="M2.73 5.80L4.18 3.94L6.81 6.68L6.02 7.70Z" fill="hsl(300,100%,50%)"/><path d="M4.06 4.06L5.95 2.64L7.78 5.97L6.75 6.75Z" fill="hsl(315,100%,50%)"/><path d="M5.80 2.73L7.99 1.84L8.90 5.53L7.70 6.02Z" fill="hsl(330,100%,50%)"/><path d="M7.83 1.89L10.17 1.60L10.09 5.40L8.81 5.56Z" fill="hsl(345,100%,50%)"/><circle cx="10" cy="10" r="4.700" fill="#0a0a0a"/></g><g transform="translate(1895.2,338.5)"><rect x="1.500" y="2" width="17" height="13.500" fill="url(#gGray)" stroke="#0a0a0a" stroke-width="1.600"/><path d="M6 18.500H14M8 16V18.500H12V16" stroke="#0a0a0a" stroke-width="1.600" fill="#0a0a0a"/></g><g transform="translate(1895.2,383.0)"><rect x="1.500" y="2.500" width="17" height="15" fill="#4a67dd" stroke="#e6e6e6" stroke-width="1.300"/><rect x="1.500" y="2.500" width="17" height="2.600" fill="#f4f4f4"/><circle cx="10" cy="11.500" r="5.800" fill="#3350d0"/><text x="10" y="16.500" text-anchor="middle" font-family="Liberation Serif, serif" font-weight="700" font-size="13" fill="#fff">?</text></g><g transform="translate(1895.2,427.5)"><circle cx="9" cy="11" r="8.600" fill="#0b0b0b"/><circle cx="9" cy="11" r="7.500" fill="url(#gSphB)"/><ellipse cx="6.500" cy="7.500" rx="2.300" ry="1.500" fill="#fff" opacity=".9" transform="rotate(-30 6.500 7.500)"/><rect x="15.500" y="1" width="3.500" height="5" fill="#0c0c0c"/><path d="M10.500 6L14 2.500L17.500 2.800V5.500L14.500 6.200L12.500 8Z" fill="#f2f2f2" stroke="#222" stroke-width=".6"/></g><g transform="translate(1895.2,473.5)"><path d="M10 1.500Q15.500 2 15.500 8.500V13L18 16.500H2L4.500 13V8.500Q4.500 2 10 1.500Z" fill="#0d6dfd" stroke="#0848b8" stroke-width=".8"/><path d="M7.500 17.500Q10 20 12.500 17.500Z" fill="#0d6dfd"/></g><g transform="translate(1895.2,516.5)"><rect x=".5" y="8" width="19" height="10.500" fill="#8fd6c0" stroke="#333" stroke-width=".8"/><g stroke="#2a6a5a" stroke-width=".7"><path d="M2.2 9.500V17.500"/><path d="M4.1 9.500V17.500"/><path d="M6.0 9.500V17.500"/><path d="M7.8999999999999995 9.500V17.500"/><path d="M9.8 9.500V17.500"/><path d="M11.7 9.500V17.500"/><path d="M13.599999999999998 9.500V17.500"/><path d="M15.5 9.500V17.500"/><path d="M17.4 9.500V17.500"/><path d="M.5 13.300H19.500"/></g><path d="M9 5.500L12.500 2L18 2.500V5L13.500 5.800L12 7Z" fill="#3a3a3a" stroke="#d8d8d8" stroke-width=".8"/></g></svg>
<svg style="left:1895px;top:125px" width="20" height="20" viewBox="0 0 30 30"><path d="M23.70 12.69L28.31 12.72L28.31 17.28L23.70 17.31L22.79 19.51L26.02 22.79L22.79 26.02L19.51 22.79L17.31 23.70L17.28 28.31L12.72 28.31L12.69 23.70L10.49 22.79L7.21 26.02L3.98 22.79L7.21 19.51L6.30 17.31L1.69 17.28L1.69 12.72L6.30 12.69L7.21 10.49L3.98 7.21L7.21 3.98L10.49 7.21L12.69 6.30L12.72 1.69L17.28 1.69L17.31 6.30L19.51 7.21L22.79 3.98L26.02 7.21L22.79 10.49Z" fill="#b9b9b9"/><circle cx="15" cy="15" r="4.600" fill="#333"/></svg>
<svg style="left:1895px;top:214px" width="20" height="20" viewBox="0 0 30 30"><path d="M23.70 12.69L28.31 12.72L28.31 17.28L23.70 17.31L22.79 19.51L26.02 22.79L22.79 26.02L19.51 22.79L17.31 23.70L17.28 28.31L12.72 28.31L12.69 23.70L10.49 22.79L7.21 26.02L3.98 22.79L7.21 19.51L6.30 17.31L1.69 17.28L1.69 12.72L6.30 12.69L7.21 10.49L3.98 7.21L7.21 3.98L10.49 7.21L12.69 6.30L12.72 1.69L17.28 1.69L17.31 6.30L19.51 7.21L22.79 3.98L26.02 7.21L22.79 10.49Z" fill="#b9b9b9"/><circle cx="15" cy="15" r="4.600" fill="#333"/></svg>
<svg style="left:2px;top:4px" width="21" height="20" viewBox="0 0 20 20"><rect x="0" y="0" width="20" height="20" fill="#000"/><path d="M0 0H5.500Q8.500 3 10 7.500L14 12.500L20 9.500V11L15 16L13 19.500L10.500 19L6.500 15.500L2 11.500L0 10.500Z" fill="#f4f4f4"/><path d="M3.500 .5Q4.500 4 2.200 7.500" stroke="#222" stroke-width="1.300" fill="none"/><path d="M4.500 10L8.500 14" stroke="#333" stroke-width="1.200"/><path d="M9.500 10.500L13.500 12" stroke="#111" stroke-width="1"/><path d="M11 15.500L14.500 17" stroke="#c9c9c9" stroke-width="1"/><text x="16.400" y="8.300" text-anchor="middle" font-family="Liberation Sans, sans-serif" font-size="9.500" font-weight="700" fill="#8e8e8e">8</text></svg>
</div></body></html>
